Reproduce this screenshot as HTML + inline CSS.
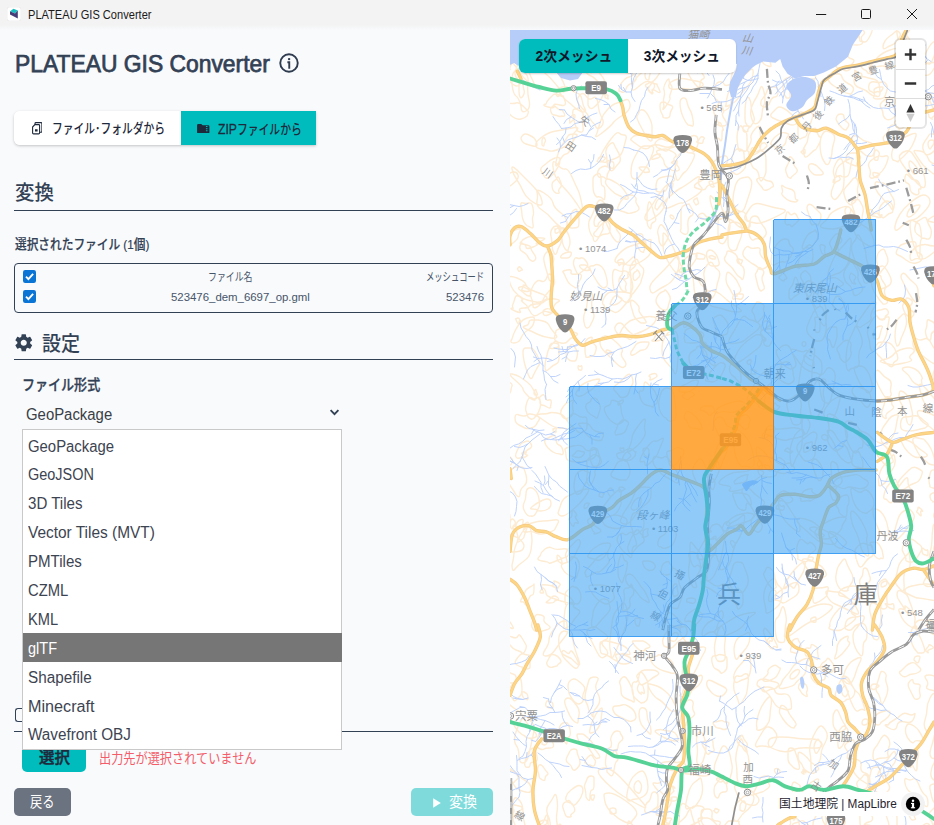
<!DOCTYPE html>
<html lang="ja">
<head>
<meta charset="utf-8">
<title>PLATEAU GIS Converter</title>
<style>
*{box-sizing:border-box;margin:0;padding:0}
html,body{width:934px;height:825px;overflow:hidden;background:#f8fafc}
body{position:relative;font-family:"Liberation Sans","Noto Sans CJK JP",sans-serif;color:#334155}
.abs{position:absolute}
#titlebar{left:0;top:0;width:934px;height:30px;background:linear-gradient(#f3f3f3 0,#f3f3f3 25px,#f8fafc 30px)}
#titlebar .tt{left:27px;top:7px;font-size:12px;line-height:16px;color:#1a1a1a;white-space:nowrap}
#left{left:0;top:30px;width:510px;height:795px;background:#f8fafc}
.tabs{left:14px;top:111px;width:302px;height:34px;border-radius:6px 0 0 6px;box-shadow:0 1px 3px rgba(0,0,0,.22);background:#fff;overflow:hidden}
.tab{top:0;height:34px;font-size:13.5px;line-height:34px;font-weight:500;color:#1e293b;white-space:nowrap}
.t1{left:0;width:167px;background:#fff}
.t2{left:167px;width:135px;background:#00bcbc}
.h2{font-size:20px;line-height:28px;font-weight:500;color:#334155;white-space:nowrap}
.f{display:inline-block;white-space:nowrap;transform-origin:0 50%}
.hr{left:14px;width:479px;height:1.2px;background:#334155}
.lbl{font-size:13.5px;font-weight:500;color:#334155;white-space:nowrap}
.tbl{left:14px;top:263px;width:479px;height:49.5px;border:1.2px solid #334155;border-radius:4px}
.cell{font-size:11.5px;line-height:16px;color:#475569;white-space:nowrap}
.cb{width:13px;height:13px;border-radius:2.5px;background:#0b76d6}
.sel{left:26px;top:404px;font-size:16px;line-height:22px;color:#3a3f47;white-space:nowrap}
.dd{left:22px;top:429px;width:319.8px;height:320.8px;background:#fff;border:1px solid #c9c9c9}
.opt{left:4.5px;height:29px;line-height:29px;font-size:16px;color:#3d4451;white-space:nowrap}
.btn{border-radius:5px;color:#fff;font-size:15px;text-align:center;white-space:nowrap}
#map{left:510px;top:30px;width:424px;height:795px;overflow:hidden;background:#fff}
</style>
</head>
<body>
<div id="titlebar" class="abs">
  <svg class="abs" style="left:7px;top:7px" width="14" height="14" viewBox="0 0 14 14"><rect x="0" y="0" width="14" height="14" rx="2.5" fill="#fff" stroke="#e4e4e4" stroke-width=".6"/><path d="M3 4.2 L6.5 1.8 L10.8 3.6 L8 6.6 Z" fill="#19bfc0"/><path d="M3 4.2 L8 6.6 L10.8 3.6 L10.8 11.6 L3 7.4 Z" fill="#463c78"/></svg>
  <span class="abs tt f" id="tt" style="left:27.5px;transform:scaleX(0.9228)">PLATEAU GIS Converter</span>
  <svg class="abs" style="left:796px;top:0" width="138" height="30" viewBox="0 0 138 30" fill="none" stroke="#1a1a1a" stroke-width="1"><path d="M20 14.5h10.2"/><rect x="65.5" y="9.5" width="9" height="9" rx="1"/><path d="M111 9l10 10M121 9l-10 10"/></svg>
</div>
<div id="left" class="abs"></div>
<span class="abs f" id="h1" style="left:15px;top:47px;font-size:24px;line-height:34px;font-weight:normal;-webkit-text-stroke:.75px #334155;color:#334155;transform:scaleX(0.9520)">PLATEAU GIS Converter</span>
<svg class="abs" style="left:277.95px;top:51.75px" width="22" height="22" viewBox="0 0 22 22"><circle cx="11" cy="11" r="8.75" fill="none" stroke="#2f3b4f" stroke-width="1.9"/><circle cx="11.1" cy="7.1" r="1.2" fill="#2f3b4f"/><path d="M9.4 10.3h1.85v6.5" stroke="#2f3b4f" stroke-width="1.9" fill="none"/></svg>

<div class="abs tabs">
  <div class="abs tab t1"><svg class="abs" style="left:17.5px;top:11px" width="10.5" height="12.5" viewBox="0 0 10.5 12.5" fill="none" stroke="#1e293b" stroke-width="1.1"><path d="M3 2.6V1.5Q3 .6 3.9.6H9Q9.9.6 9.9 1.5V9.3Q9.9 10.2 9 10.2H7.6"/><path d="M.6 5L2.9 2.6H6.7Q7.6 2.6 7.6 3.5V11Q7.6 11.9 6.7 11.9H1.5Q.6 11.9 .6 11Z"/><path d="M3 7.3h2.6v2.3H3z" fill="#1e293b" stroke="none"/></svg><span class="abs f" id="tab1" style="left:38px;top:.7px;transform:scaleX(0.7965)">ファイル･フォルダから</span></div>
  <div class="abs tab t2"><svg class="abs" style="left:16px;top:12.5px" width="12.5" height="9.5" viewBox="0 0 13 10"><path d="M0 1.2Q0 0 1.2 0H4.4L5.8 1.4H11.8Q13 1.4 13 2.6V8.8Q13 10 11.8 10H1.2Q0 10 0 8.8Z" fill="#1e293b"/><path d="M9.3 2.7h1.7M9.3 4.9h1.7M9.3 7.1h1.7" stroke="#00bcbc" stroke-width="1.1"/></svg><span class="abs f" id="tab2" style="left:36.5px;top:.7px;transform:scaleX(0.8008)"><span style="font-size:15.2px;-webkit-text-stroke:.3px #1e293b">ZIP</span>ファイルから</span></div>
</div>

<span class="abs f h2" id="hconv" style="left:14.5px;top:179px;transform:scaleX(0.9700)">変換</span>
<div class="abs hr" style="top:209.6px"></div>
<span class="abs f lbl" id="lsel" style="left:14.5px;top:235px;line-height:20px;-webkit-text-stroke:.2px #334155;transform:scaleX(0.8651)">選択されたファイル (1個)</span>
<div class="abs tbl"></div>
<svg class="abs" style="left:23px;top:269.7px" width="13" height="13" viewBox="0 0 13 13"><rect width="13" height="13" rx="2.2" fill="#0b75d6"/><path d="M3 6.7L5.4 9.1L10.1 3.9" fill="none" stroke="#fff" stroke-width="1.9"/></svg>
<svg class="abs" style="left:23px;top:289.7px" width="13" height="13" viewBox="0 0 13 13"><rect width="13" height="13" rx="2.2" fill="#0b75d6"/><path d="M3 6.7L5.4 9.1L10.1 3.9" fill="none" stroke="#fff" stroke-width="1.9"/></svg>
<span class="abs f cell" id="c1" style="left:208px;top:268.5px;transform:scaleX(0.7739)">ファイル名</span>
<span class="abs f cell" id="c2" style="left:171.3px;top:288.5px;transform:scaleX(0.9918)">523476_dem_6697_op.gml</span>
<span class="abs f cell" id="c3" style="left:426px;top:268.5px;transform:scaleX(0.7217)">メッシュコード</span>
<span class="abs f cell" id="c4" style="left:446.2px;top:288.5px;transform:scaleX(0.9902)">523476</span>

<svg class="abs" style="left:13.4px;top:331.8px" width="21.5" height="21.5" viewBox="0 0 24 24"><path fill="#334155" d="M19.14 12.94c.04-.3.06-.61.06-.94 0-.32-.02-.64-.07-.94l2.03-1.58a.49.49 0 0 0 .12-.61l-1.92-3.32a.488.488 0 0 0-.59-.22l-2.39.96c-.5-.38-1.03-.7-1.62-.94l-.36-2.54a.484.484 0 0 0-.48-.41h-3.84c-.24 0-.43.17-.47.41l-.36 2.54c-.59.24-1.13.57-1.62.94l-2.39-.96c-.22-.08-.47 0-.59.22L2.74 8.87c-.12.21-.08.47.12.61l2.03 1.58c-.05.3-.09.63-.09.94s.02.64.07.94l-2.03 1.58a.49.49 0 0 0-.12.61l1.92 3.32c.12.22.37.29.59.22l2.39-.96c.5.38 1.03.7 1.62.94l.36 2.54c.05.24.24.41.48.41h3.84c.24 0 .44-.17.47-.41l.36-2.54c.59-.24 1.13-.56 1.62-.94l2.39.96c.22.08.47 0 .59-.22l1.92-3.32c.12-.22.07-.47-.12-.61l-2.01-1.58zM12 15.4c-1.87 0-3.4-1.53-3.4-3.4s1.53-3.4 3.4-3.4 3.4 1.53 3.4 3.4-1.53 3.4-3.4 3.4z"/></svg>
<span class="abs f h2" id="hset" style="left:41.5px;top:330px;transform:scaleX(0.9500)">設定</span>
<div class="abs hr" style="top:358.8px"></div>
<span class="abs f lbl" id="lfmt" style="left:22px;top:374px;font-size:15px;line-height:22px;-webkit-text-stroke:.3px #334155;transform:scaleX(0.8687)">ファイル形式</span>
<span class="abs f sel" id="selv" style="left:26.4px;transform:scaleX(0.9317)">GeoPackage</span>
<svg class="abs" style="left:328.5px;top:407.5px" width="11" height="9" viewBox="0 0 11 9"><path d="M1.6 2.2L5.5 6.1L9.4 2.2" fill="none" stroke="#334155" stroke-width="1.9"/></svg>

<div class="abs" style="left:15px;top:707.5px;width:9px;height:14.5px;border:1.7px solid #334155;border-right:none;border-radius:3px 0 0 3px"></div>
<div class="abs hr" style="top:730.6px"></div>
<div class="abs btn" style="left:22.3px;top:742px;width:63.6px;height:29.7px;background:#00bcbc"></div>
<span class="abs f" id="bsel" style="left:38.5px;top:747px;font-size:15.5px;line-height:22px;font-weight:500;-webkit-text-stroke:.45px #1e293b;color:#1e293b;transform:scaleX(0.9963)">選択</span>
<span class="abs f" id="err" style="left:99.2px;top:748px;font-size:14px;line-height:20px;color:#f35c68;transform:scaleX(0.8693)">出力先が選択されていません</span>
<div class="abs btn" style="left:14px;top:788px;width:57px;height:28px;background:#6b7280"></div>
<span class="abs f" id="bback" style="left:30.4px;top:791px;font-size:14.5px;line-height:22px;color:#fff;transform:scaleX(0.8448)">戻る</span>
<div class="abs btn" style="left:411px;top:788px;width:82px;height:28px;background:#7fdbdb"></div>
<svg class="abs" style="left:433px;top:797.5px" width="8" height="10" viewBox="0 0 8 10"><path d="M.2 .3L7.8 5L.2 9.7Z" fill="#fff"/></svg>
<span class="abs f" id="bconv" style="left:449.4px;top:791px;font-size:15px;line-height:22px;color:#fff;transform:scaleX(0.9328)">変換</span>

<div class="abs dd">
  <span class="abs f opt" id="o0" style="top:1.50px;transform:scaleX(0.9307)">GeoPackage</span>
  <span class="abs f opt" id="o1" style="top:30.39px;transform:scaleX(0.9037)">GeoJSON</span>
  <span class="abs f opt" id="o2" style="top:59.28px;transform:scaleX(0.9430)">3D Tiles</span>
  <span class="abs f opt" id="o3" style="top:88.17px;transform:scaleX(0.9644)">Vector Tiles (MVT)</span>
  <span class="abs f opt" id="o4" style="top:117.06px;transform:scaleX(0.9425)">PMTiles</span>
  <span class="abs f opt" id="o5" style="top:145.95px;transform:scaleX(0.9251)">CZML</span>
  <span class="abs f opt" id="o6" style="top:174.84px;transform:scaleX(0.9147)">KML</span>
  <div class="abs" style="left:0;top:203.3px;width:318.5px;height:28.4px;background:#767676"></div>
  <span class="abs f opt" id="o7" style="top:203.73px;color:#fff;transform:scaleX(0.9062)">glTF</span>
  <span class="abs f opt" id="o8" style="top:232.62px;transform:scaleX(0.9548)">Shapefile</span>
  <span class="abs f opt" id="o9" style="top:261.51px;transform:scaleX(1.0107)">Minecraft</span>
  <span class="abs f opt" id="o10" style="top:290.40px;transform:scaleX(0.9537)">Wavefront OBJ</span>
</div>

<div id="map" class="abs">
<svg id="mapsvg" class="abs" style="left:0;top:0" width="424" height="795" viewBox="510 30 424 795">
<!--MAPSTART-->
<rect x="510" y="30" width="424" height="795" fill="#fff"/>
<path d="M494,33Q492,31 490,28t-1-5t2-6t1-4t4,0t2,6t-1,7t0,6t-3,1zM528,22Q528,17 525,16t-1-7t4-6t3,0t4,3t0,6t-2,10t-3,5t-2-5zM542,20Q541,18 540,16t-1-6t3-3t4,0t2,1t1,5t-1,6t-3,3t-3-2zM602,31Q600,32 598,27t-4-8t-2-9t1-5t5,4t5,7t4,7t-1,6t-4,2zM614,37Q612,35 612,31t2-10t4-5t6,2t4,2t2,8t-5,6t-6,3t-5,0zM618,30Q617,29 617,27t2-4t3-1t2,3t-1,4t-3,2t-2-1zM638,38Q635,40 634,33t0-12t2-8t4-3t4,2t5,9t-2,8t-4,5t-5,4zM702,39Q698,38 694,37t-7-5t-5-7t3-5t7,0t6,2t6,7t2,8t-4,2zM697,33Q695,33 693,32t-2-4t0-2t3-1t3,2t2,4t-2,2zM714,20Q711,19 712,14t6-7t8-4t4,0t1,5t-1,8t-6,5t-6-1t-4,0zM745,34Q745,32 743,31t-2-5t2-4t4,0t3,2t2,3t-1,6t-3,3t-3-2zM757,38Q755,37 756,32t4-11t7-7t3,3t3,6t1,7t-6,8t-7,2t-4-2zM793,28Q790,25 790,23t-2-6t0-5t4-3t4,2t3,5t-1,5t-2,5t-3,2zM830,32Q828,28 827,24t-2-8t0-6t2-5t3,1t2,8t0,7t0,9t-2,2zM860,41Q859,38 859,34t3-8t4-9t4-4t2,8t0,8t-2,7t-5,6t-5-1zM880,21Q876,22 877,18t2-6t3-4t4-3t4,3t2,5t-3,5t-4,2t-5,1zM903,42Q900,48 898,39t-1-14t-1-11t2-6t5,2t5,10t1,11t-2,5t-4,6zM922,26Q921,24 922,22t1-5t3-4t4,1t3,3t-1,4t-2,4t-4,3t-4-2zM503,67Q501,65 500,60t1-9t3-10t6-6t4,5t1,11t-2,11t-3,7t-7-2zM521,56Q519,57 519,53t4-7t5-4t4-1t1,2t-1,8t-4,6t-3-1t-4,0zM564,56Q558,58 552,57t-11-2t-10-3t-4-6t7-5t9,0t8,4t11,6t2,5zM550,58Q552,53 555,49t10-9t13-6t2,5t-2,9t-4,7t-13,7t-10,1t-1-5zM590,69Q590,64 591,58t1-12t3-9t5-2t3,4t-1,11t-3,11t-5,9t-4-1zM616,62Q614,62 611,59t-4-6t1-6t2-5t3-2t4,6t2,9t0,5t-3,2zM636,36Q636,34 639,32t5-3t7,0t3,3t-2,4t-5,4t-6,3t-4-2t-1-5zM667,59Q665,59 665,55t0-8t1-6t3-4t3,4t1,7t0,7t-3,4t-3,0zM708,49Q704,49 701,50t-8-2t-6-6t0-5t6-2t7,1t11,6t4,5t-7,2zM723,64Q720,60 720,51t-1-15t0-10t3-7t5,4t3,12t-1,10t-2,13t-4,6zM723,47Q722,45 722,42t0-7t1-3t3,3t0,6t-1,5t-2,1zM728,48Q729,44 736,40t10-8t10-7t8-1t-4,8t-8,10t-6,5t-11,3t-7-2zM756,42Q758,39 762,37t8-5t7-2t5,2t0,5t-7,4t-9,3t-8,2t-2-4zM788,47Q786,48 783,44t-2-9t0-9t3-1t5,2t5,4t0,8t-4,4t-2,4zM830,58Q828,52 828,46t-1-12t0-13t4-3t5,7t1,8t-1,12t-2,12t-4,1zM840,34Q838,31 844,30t11-2t8,2t0,5t-1,6t-5,4t-10-2t-5-4t-2-5zM848,35Q849,34 851,33t4,1t3,2t-1,2t-5,1t-4-1t0-3zM883,47Q883,44 885,41t5-5t5-4t4,0t1,4t-3,5t-5,4t-6,3t-3-1zM899,60Q897,58 899,54t2-9t3-7t4-1t2,4t0,7t-3,7t-4,5t-4,0zM924,60Q924,58 925,55t4-8t6-6t4-1t-1,6t-3,8t-3,7t-5,2t-3-3zM516,86Q511,84 507,78t-5-12t-4-12t2-6t7,1t7,8t2,12t2,11t-2,6zM529,83Q521,75 518,70t-8-10t-6-12t2-8t7,3t9,11t5,11t6,16t-4,2zM558,87Q550,77 546,74t-8-11t-6-15t2-8t9,4t6,11t9,18t7,17t-7-3zM571,71Q569,69 567,67t-1-4t2-5t3-3t5,0t1,5t0,5t-2,5t-4,1zM599,83Q594,77 591,76t-7-6t-6-10t3-4t7,2t5,6t8,11t4,10t-6-2zM634,72Q633,74 627,73t-11-8t-9-12t-1-5t8,0t12,3t11,9t0,7t-3,5zM633,85Q634,80 639,75t9-7t11-9t6,0t-2,9t-6,9t-8,5t-11,5t-5-2zM700,85Q700,90 695,84t-7-11t-4-9t-2-8t6,0t8,8t6,9t1,6t-3,6zM710,70Q708,68 710,63t4-6t6-7t6-4t2,7t-3,8t-4,8t-5,3t-6-2zM732,91Q730,85 731,79t3-12t5-9t5-4t5,4t-1,11t-5,8t-6,11t-5,3zM768,66Q765,65 764,64t-3-4t-1-4t1-5t3,1t4,5t2,4t1,5t-3,0zM812,85Q811,88 807,87t-7-5t-2-5t1-6t5-3t7,0t4,5t-2,6t-1,6zM852,64Q852,66 850,69t-6,1t-6-2t-2-4t-1-5t6-3t7,0t4,3t0,5zM868,73Q866,70 865,70t-3-2t1-4t3-1t3,1t2,2t0,4t-1,3t-2,0zM871,65Q874,61 878,57t12-7t9,0t6,3t4,4t-11,8t-12,2t-11,0t-4-2zM899,68Q899,66 902,63t6-3t7-1t5,1t-1,5t-5,5t-6,2t-6-1t-3-3zM921,68Q920,66 922,65t7-2t7,0t0,3t-3,4t-3,4t-7,1t-2-4t0-3zM497,113Q493,111 491,105t-4-10t-5-11t2-4t7,5t5,6t3,10t1,10t-3,2zM521,106Q519,98 516,96t-4-12t3-13t5-2t5,4t3,11t1,16t-3,11t-5-5zM520,97Q519,95 519,91t0-8t2-4t2,4t1,7t-1,6t-3,1zM546,104Q547,101 549,99t4-4t6,0t4,1t2,5t-5,4t-6,1t-6,1t-2-3zM582,112Q577,110 574,107t-7-6t-7-8t2-6t8,2t7,4t5,7t3,9t-3,3zM588,105Q588,100 588,97t2-8t5-5t7-2t3,4t-2,9t-4,7t-6,6t-5-3zM619,91Q619,89 620,86t4-6t5-3t4-2t3,2t-4,6t-6,6t-4,3t-3-1zM653,93Q652,95 651,93t-4-5t0-4t2-2t4,1t4,1t2,5t-3,2t-3,2zM664,106Q663,101 664,97t0-7t2-8t3-2t2,5t0,7t-1,6t-4,8t-2,0zM671,82Q674,80 678,79t8,0t10,2t7,3t-5,4t-10,1t-11,0t-8-2t2-5zM722,107Q721,103 717,100t-3-10t5-8t5,2t7,0t3,6t-3,13t-5,7t-4-3zM726,105Q726,100 728,94t6-13t7-6t8-4t4,3t-6,13t-8,10t-9,8t-4,0zM761,105Q760,101 763,98t4-7t3-4t5,0t3,5t-3,5t-5,5t-5,5t-4-2zM787,98Q785,97 784,93t-1-8t1-5t3-2t4-1t3,6t-2,6t-2,5t-3,4zM796,86Q795,84 799,82t6-2t5,0t4,0t-1,4t-4,4t-4,0t-5-1t-4-1zM850,94Q845,93 842,91t-8-5t-6-7t1-4t7-1t6,3t7,7t4,7t-3,3zM876,96Q872,96 869,93t-9-5t-6-7t4-5t7,1t8,2t6,5t1,9t-4,3zM870,91Q868,89 869,85t6-3t7,0t4,2t1,6t-2,6t-7,3t-4-3t-4-5zM874,90Q874,89 876,88t3-1t3,0t0,3t-3,2t-3,0t-2-2zM921,105Q916,99 914,96t-5-8t-3-10t2-4t6,3t4,7t4,11t3,11t-4-1zM935,108Q933,109 932,106t-2-5t0-5t2-3t3,1t4,3t0,4t-2,4t-2,3zM500,134Q499,129 496,128t-3-7t2-7t4-1t3,2t3,6t0,9t-2,7t-3-3zM527,116Q525,118 521,119t-8-2t-5-5t-4-6t3-3t9,0t7,3t5,5t-1,5zM562,116Q560,117 558,116t-4-1t-3-3t0-4t2-2t4,2t4,2t3,3t-2,3zM577,129Q576,127 575,124t-2-9t2-6t3-1t3,2t2,7t0,10t-3,5t-3-3zM595,125Q591,121 589,117t-8-10t-2-11t7,0t7,2t5,6t4,14t-1,9t-6-2zM597,133Q599,126 601,120t7-11t9-6t8-3t5,4t-7,11t-10,8t-11,10t-5,0zM652,140Q650,143 646,136t-7-13t-2-7t2-4t4-2t6,7t3,9t0,8t0,6zM663,116Q662,114 661,112t-1-6t3-4t3,1t4,2t2,4t-2,6t-4,3t-3-2zM688,125Q686,123 684,119t-3-8t-1-8t3-5t4,4t3,8t3,10t-1,6t-4-1zM719,124Q717,120 716,118t-2-5t2-6t3-5t3,4t1,7t2,7t-2,6t-4-2zM747,125Q745,123 745,119t0-8t1-10t3-3t2,7t2,9t1,7t-3,5t-4-1zM754,123Q752,121 751,116t1-10t4-8t4-9t4,3t0,13t-2,9t-3,8t-5,1zM796,124Q793,126 788,124t-8-3t-7-3t-1-5t5-5t6,0t7,5t6,5t0,6zM800,139Q798,139 798,133t0-14t3-7t4,0t5,0t2,7t-4,12t-3,6t-5,2zM846,130Q844,130 842,128t-4-5t-2-4t1-3t4-2t3,3t3,5t1,5t-2,3zM883,114Q883,111 881,108t1-6t6-4t6,0t1,5t0,8t-2,7t-7,1t-3-5zM895,124Q893,122 898,119t7-5t8-4t6,0t-2,6t-6,6t-7,5t-6,1t-3-4zM929,117Q929,114 927,112t0-5t2-6t4-2t2,3t1,6t-1,7t-3,4t-3-2zM537,145Q537,147 533,146t-7-2t-4-3t-1-3t2-3t6,0t5,3t2,3t1,4zM536,145Q535,142 542,137t14-6t16-3t4,3t-3,8t-9,8t-14,4t-9-2t-5-4zM556,162Q557,156 559,151t5-9t4-6t6-2t2,3t-5,10t-5,7t-7,8t-3,0zM601,161Q599,159 602,153t9-14t8-6t5,2t2,4t-3,11t-9,9t-8,3t-5-1zM634,136Q638,135 643,134t11,2t14,4t5,5t-11,1t-12,1t-11-1t-8-6t3-4zM655,144Q655,142 658,140t7,0t6,1t5,2t-2,4t-6,3t-5,0t-5-2t-3-4zM690,147Q690,145 689,144t0-4t3-4t4,0t2,4t0,4t-2,5t-3,2t-3-4zM717,139Q716,137 716,135t-1-6t1-4t3-2t3,3t1,4t-1,6t-2,4t-3-1zM740,151Q739,152 738,147t-1-10t2-9t3-1t3,4t2,7t0,10t-3,3t-4,0zM749,152Q746,151 749,146t2-8t4-9t5,1t1,7t0,7t-2,8t-6,3t-4-3zM771,143Q772,140 774,138t5-4t7-1t2,3t-2,5t-3,5t-5,2t-5-2t-2-3zM804,153Q802,150 805,146t3-8t4-8t5,1t3,6t-1,7t-4,6t-6,5t-5-2zM825,163Q822,159 821,154t-1-10t2-9t4-4t6,2t2,9t-2,10t-2,9t-5,2zM869,156Q867,157 864,154t-7-5t-5-7t2-6t6,2t8,4t6,4t0,7t-5,3zM889,144Q886,145 884,141t1-6t4-6t4-4t4,1t4,7t-1,6t-5,3t-6,2zM893,160Q891,158 892,152t6-10t7-5t7-3t4,2t-4,10t-9,11t-5,5t-5-2zM926,155Q924,153 923,149t2-8t4-6t4-1t5,3t1,6t-4,7t-5,4t-4,1zM929,148Q928,146 928,144t1-3t3-1t2,2t-1,3t-2,3t-2,0zM541,171Q540,168 543,166t5-4t7-4t5,2t-2,7t-3,5t-5,5t-6-1t-3-5zM601,177Q599,178 598,176t0-5t4-4t3-1t3,1t1,4t-2,6t-2,1t-4-1zM609,168Q607,165 607,161t-1-8t3-8t5-1t3,6t3,7t-1,6t-5,6t-5-1zM631,173Q631,168 632,164t5-11t7-7t7,0t2,6t-4,10t-7,11t-8,6t-3-6zM676,171Q672,171 668,168t-4-6t-5-7t0-5t7-1t7,3t2,5t2,8t-1,6zM676,177Q675,175 675,170t2-11t6-7t4,0t5,1t0,9t-7,10t-5,6t-4-1zM712,169Q710,169 712,165t5-6t6-3t4,1t1,3t-3,6t-6,5t-4,1t-3-3zM734,173Q730,172 731,167t1-8t2-7t6-3t4,5t1,8t0,6t-5,5t-6,0zM759,176Q758,170 755,169t-5-9t3-8t5-1t4,0t4,9t0,11t-3,8t-4-3zM788,177Q787,175 786,172t1-6t2-7t3-1t2,5t2,5t-1,6t-4,4t-3-1zM820,175Q818,175 816,175t-4-2t-3-4t0-4t4-1t4,2t4,4t2,4t-3,1zM838,176Q835,177 836,172t5-8t6-4t4-2t1,2t-2,10t-5,7t-4-1t-3,0zM849,163Q846,163 846,160t1-5t5-2t4,0t3,2t0,5t-2,5t-4,0t-4-2zM870,175Q871,171 869,167t4-8t7-3t5,0t3,3t-3,8t-7,8t-7,3t-1-3zM918,184Q914,180 911,176t-8-11t-3-10t6-4t6,2t6,9t6,13t1,11t-7-2zM914,174Q913,173 911,170t-2-6t1-3t3,2t4,5t0,5t-3,1zM937,174Q936,176 931,172t-7-6t-6-8t-4-7t6,0t8,7t9,6t3,6t-3,4zM502,186Q501,184 500,180t3-4t6-2t5-2t4,3t-2,6t-6,5t-4,2t-4-2zM539,205Q535,204 530,200t-7-9t-6-11t-5-11t7,3t12,12t7,8t4,9t-3,4zM556,193Q554,192 553,190t-1-5t2-4t3-3t2,0t2,5t-1,5t-1,4t-3,1zM577,204Q570,194 567,191t-8-9t-6-15t4-3t8,5t7,8t6,13t4,15t-5-1zM597,197Q595,196 594,193t-1-7t0-7t4-5t4,5t2,7t2,8t-2,5t-6-2zM625,199Q621,196 618,195t-7-5t-5-6t0-4t5,0t7,4t6,6t4,7t-3,2zM656,186Q656,184 657,181t6-4t7-1t4,2t-2,4t-5,6t-6,4t-5-2t0-4zM664,207Q661,204 669,197t12-9t12-8t6-1t2,8t-7,10t-12,6t-9,3t-9,1zM695,187Q693,185 699,182t9-5t9-4t5,0t-2,6t-7,5t-7,4t-7,1t-4-2zM735,206Q733,205 733,200t2-13t7-9t6-1t3,3t-1,12t-5,15t-6,4t-4-5zM772,187Q770,189 767,190t-4-1t-3-4t-3-4t2-3t5,1t5,2t4,3t-1,3zM796,202Q793,202 790,201t-6-4t-2-4t0-5t1-2t7,3t5,6t2,5t-1,2zM832,197Q830,194 833,187t1-12t2-12t6-3t2,9t0,11t-1,9t-5,8t-6,0zM846,200Q845,198 844,194t2-7t6-7t5-1t1,7t0,8t-3,8t-6,2t-3-4zM890,206Q887,203 884,200t-6-7t-3-8t3-3t5,1t5,6t5,9t1,9t-4-1zM919,193Q918,196 914,194t-4-6t-3-5t-2-6t4-1t6,4t5,5t0,4t-1,4zM496,222Q495,228 490,221t-8-14t-2-10t3-4t6,0t9,6t5,11t-4,6t-3,6zM530,227Q526,226 524,222t-2-7t-1-8t2-4t6,0t4,5t0,8t0,8t-3,3zM563,229Q556,224 552,219t-10-9t-5-9t0-9t7,1t9,10t8,10t6,13t-4,3zM570,227Q569,226 570,223t1-7t3-6t3,1t1,4t1,6t-1,6t-5,1t-3-1zM593,237Q590,234 589,228t1-9t5-11t5-8t5,4t0,14t-2,10t-4,9t-6,0zM595,226Q594,225 594,222t2-6t2-3t3,3t0,5t-3,4t-3,1zM618,207Q619,204 621,201t6-5t7,0t2,4t2,6t-3,6t-8,1t-6-2t-3-4zM648,226Q647,223 647,220t0-6t1-9t3-1t2,6t2,6t-1,6t-3,5t-3-1zM646,220Q643,218 648,211t8-12t7-10t8-6t0,8t-6,14t-5,8t-8,6t-6,1zM655,208Q655,206 656,203t4-5t3-1t0,3t-3,6t-3,4t-2-2zM681,229Q681,224 681,221t0-9t4-7t4-1t3,5t-1,7t-3,11t-4,7t-3-5zM720,219Q718,220 716,216t-4-9t-2-9t2-1t5,3t4,5t3,8t-1,5t-3,1zM750,225Q751,228 745,228t-9-4t-7-5t-4-5t4-2t10,0t7,4t3,5t1,4zM745,216Q746,214 750,208t11-4t11,3t10,2t1,4t-14,7t-14,3t-8-2t-2-5zM787,225Q785,224 785,222t1-7t3-2t4,1t4,2t2,4t-4,4t-4,2t-4-1zM812,225Q810,223 810,220t-2-8t0-7t5,1t4,4t3,3t0,8t-3,4t-5,0zM823,223Q828,219 829,216t9-7t11-2t1,6t-1,7t-5,6t-11,3t-10-1t0-5zM854,227Q852,223 854,219t-1-11t1-8t5,0t3,5t1,7t-1,8t-4,7t-4,0zM882,217Q879,217 879,213t1-6t3-4t4-2t4,2t2,6t-2,4t-5,3t-4,1zM895,226Q896,220 900,214t10-11t10-7t7,0t3,6t-7,11t-11,7t-11,7t-6-1zM907,215Q907,213 909,210t5-4t5-1t0,3t-5,6t-5,3t-2-2zM952,221Q951,223 946,223t-7,0t-7-1t-4-2t4-3t6-2t6,1t5,2t3,3zM495,246Q496,241 501,239t6-4t8-5t5,1t-2,6t-5,6t-6,2t-8,2t-4-1zM522,241Q522,240 526,238t7-1t9,1t-1,3t-4,3t-4,3t-7,0t-4-3t0-3zM554,253Q552,250 552,245t-1-9t1-7t4-3t3,3t2,8t-1,8t-3,7t-3,1zM568,251Q566,251 564,247t-2-8t-1-7t1-4t4,2t3,6t1,6t-1,5t-1,4zM596,231Q598,228 599,227t4-4t5-1t2,4t0,5t-4,3t-6,2t-5,0t1-5zM619,242Q617,243 614,239t-4-7t-3-7t-1-5t5,2t5,6t3,5t1,6t-1,3zM644,252Q641,253 639,249t-3-5t-2-6t0-4t5,0t4,3t2,5t0,6t-1,4zM661,245Q659,243 659,240t-1-6t1-7t4-1t3,4t2,4t-1,6t-3,5t-3,0zM719,242Q718,237 718,233t0-9t1-9t5-1t5,6t1,6t-2,9t-4,8t-5-1zM731,250Q728,248 728,242t0-10t1-7t5-3t6,2t2,7t-2,9t-3,8t-6,2zM755,239Q752,242 750,237t-1-11t2-8t4-2t4,3t5,8t1,9t-5,3t-5,0zM804,249Q801,249 803,244t4-8t5-4t3-2t2,3t-1,8t-4,6t-4,1t-4,1zM832,249Q831,247 830,245t1-5t4-5t3-1t3,4t-1,5t-2,6t-3,3t-3-3zM869,246Q865,244 860,240t-6-10t-6-12t-2-10t8,6t10,12t8,9t2,10t-5,1zM917,253Q914,247 913,243t-2-9t-1-10t4-3t5,3t2,8t0,8t-1,12t-3,1zM922,238Q920,236 917,234t-2-7t3-6t5-3t4,2t3,7t1,8t-4,4t-5-1zM532,261Q529,260 528,257t-5-5t-3-6t2-3t5,2t4,3t3,6t1,6t-3,1zM548,276Q547,272 546,269t-2-8t2-8t3-3t3,4t1,8t0,11t-1,8t-4-5zM580,273Q579,277 577,273t-3-7t0-6t3-2t4,0t5,3t1,6t-3,3t-4,3zM622,275Q623,271 623,268t2-4t6-5t4-1t1,5t-4,6t-4,7t-5,3t-1-4zM618,263Q612,262 618,255t13-9t14-5t6,0t0,8t-6,10t-12,6t-8-1t-7-1zM677,274Q673,270 670,265t-5-10t-2-10t0-10t5,3t7,14t5,11t2,12t-5-1zM681,268Q683,265 683,263t3-5t7-4t4,1t-1,4t-4,6t-5,5t-6,2t0-4zM712,266Q710,266 709,264t-2-6t0-6t3-2t4,2t3,4t2,6t-3,4t-4,0zM741,278Q737,276 735,272t-7-8t-3-7t2-5t5,0t6,7t4,7t2,9t-3,3zM759,268Q755,265 753,264t-7-5t-2-9t5-3t7,1t4,3t5,9t0,8t-6,0zM771,262Q771,259 772,254t5-10t8-5t4,3t3,5t-1,9t-7,6t-8,2t-5-2zM800,268Q797,270 798,264t3-10t4-6t4-3t3,3t1,9t-3,8t-5,1t-5,2zM831,276Q826,279 829,270t6-14t6-8t7-8t3,4t-2,15t-5,10t-5,4t-8,3zM863,278Q860,270 858,267t-5-12t0-12t4-7t5,5t4,14t4,14t-1,13t-6-4zM877,271Q878,266 877,263t0-7t4-6t4,1t2,5t1,5t-3,6t-5,6t-3-2zM922,259Q921,262 916,263t-10-3t-8-5t-1-5t4-5t9-3t6,4t3,7t3,6zM910,256Q910,254 913,250t8-5t7,0t8,1t2,3t-9,7t-9,3t-7,1t-3-4zM505,300Q501,296 498,293t-8-8t-5-10t4-2t6,3t7,5t5,8t1,10t-3,1zM536,302Q531,301 527,300t-9-5t-7-9t-2-8t8,0t9,7t13,8t6,7t-9,2zM529,296Q527,296 525,294t-5-4t0-3t4,0t4,2t3,4t-2,3zM533,306Q533,301 531,297t2-11t8-5t6-4t6,0t-2,12t-8,11t-6,7t-4-1zM576,288Q574,287 571,285t-5-7t-3-6t4-2t4,2t6,2t3,6t-2,6t-2,2zM603,288Q600,286 598,283t-6-10t-1-7t4-1t4,0t5,5t3,10t-1,7t-3,1zM625,302Q622,300 618,296t-5-12t0-12t4-2t7,1t7,7t1,12t-2,9t-5,3zM623,291Q621,290 620,287t-1-6t1-3t4,2t2,5t0,5t-3,1zM631,290Q631,283 631,279t-1-8t3-9t5-1t4,6t1,8t-2,7t-6,9t-4-1zM634,280Q633,279 633,276t2-4t2-2t2,2t0,5t-3,3t-2,0zM650,289Q649,285 655,279t9-9t9-10t6,0t-1,10t-4,8t-9,8t-10,6t-5-3zM700,301Q698,298 696,295t-2-7t-1-10t3-1t4,6t5,5t1,7t-3,6t-3,0zM706,297Q705,292 705,287t-1-11t3-11t6-1t5,6t1,8t-3,12t-5,9t-5-2zM737,296Q734,297 732,293t-4-7t-2-7t1-6t5,2t5,6t3,6t-1,6t-2,3zM761,291Q759,290 758,286t-2-8t0-5t2-4t4,0t1,6t0,8t1,6t-3,2zM789,298Q789,295 789,292t2-5t3-7t3-1t1,6t1,5t-2,5t-5,4t-3-1zM807,296Q805,292 805,288t-3-8t0-7t4-2t3,3t2,7t1,8t-2,7t-3,0zM820,283Q821,281 824,280t7-2t7,1t5,4t-5,4t-8,2t-8,2t-4-3t2-5zM853,291Q851,286 848,284t-4-7t2-9t4-6t5,4t3,10t3,9t-2,9t-6-3zM852,283Q851,281 850,279t0-4t1-2t3,2t1,4t0,4t-3,0zM883,304Q880,301 876,295t-5-14t0-11t5-3t6-1t7,8t-1,12t-2,11t-3,7zM881,289Q879,289 878,285t-2-7t2-3t3,2t3,6t0,5t-3,1zM917,302Q916,304 912,298t-6-10t-4-8t0-6t5,2t7,7t4,8t1,6t-2,5zM513,308Q512,306 513,304t2-6t5-1t2,3t3,4t-1,4t-4,3t-5,0t-2-3zM528,308Q530,304 536,304t9-3t10-2t3,3t-5,7t-5,3t-9,2t-8-1t-3-5zM587,328Q585,328 584,322t1-10t2-8t3-9t2,4t1,13t0,8t-3,6t-3,2zM604,305Q601,304 604,298t8-6t9,0t8,1t2,4t-8,10t-9,5t-6-2t-4-5zM611,302Q611,301 613,298t4-2t4,2t0,3t-4,3t-5,1t-1-3zM641,323Q638,321 636,319t-3-6t-2-7t0-5t5,2t3,6t4,8t2,6t-4,0zM660,308Q659,307 657,304t0-7t5-5t3-2t3,3t2,7t-2,7t-4,3t-4-2zM684,324Q683,320 684,317t3-4t5-4t6-3t2,3t-4,8t-4,5t-5,4t-3-2zM738,312Q731,312 726,310t-11-3t-6-5t-3-7t3-4t11,3t7,6t10,7t1,5zM755,319Q755,315 753,313t0-5t3-5t5,0t3,4t0,5t-2,6t-4,4t-3-3zM821,322Q817,316 815,310t-7-14t-3-12t5-3t6,4t6,11t4,13t0,13t-5,0zM817,308Q816,308 814,304t-1-7t1-4t3,1t3,7t0,5t-3,2zM838,310Q836,310 834,308t-1-5t2-5t3-2t3,2t3,4t0,4t-3,3t-3,1zM857,326Q856,324 859,320t5-7t5-7t6-4t-1,6t-3,9t-4,6t-6,4t-4-1zM885,318Q885,320 882,320t-4-2t-3-4t1-3t4-1t4-1t4,2t-1,4t-2,3zM909,317Q906,315 905,313t-2-5t1-5t2-4t4,0t1,6t1,6t0,6t-3,0zM495,345Q493,342 491,341t-2-6t2-5t3-3t2-1t3,7t0,8t-2,5t-2-1zM512,339Q513,335 515,331t5-8t7-5t6-1t1,5t-6,8t-7,8t-7,5t-2-4zM556,335Q559,339 551,338t-14-4t-11-5t-1-3t4-4t9-2t11,5t3,5t4,5zM574,337Q570,338 568,341t-7,2t-6-3t0-5t1-4t6-3t8,1t6,4t-2,4zM628,338Q626,337 623,337t-6-4t-2-6t2-3t3-1t5,4t6,6t1,5t-4,0zM620,333Q622,328 626,324t9-5t10-2t9,0t0,6t-11,8t-10,4t-10,2t-3-4zM654,339Q655,336 657,333t4-4t6-1t4-1t2,3t-5,5t-6,3t-6,3t-2-2zM684,338Q685,335 685,332t6-4t6,1t4,3t2,5t-4,5t-8,1t-6-1t-1-4zM719,336Q716,335 716,331t-2-8t1-6t5-2t5,4t3,5t0,6t-4,5t-5,1zM730,343Q727,342 731,336t8-14t7-5t5,3t7,3t-3,9t-10,8t-8,3t-7,0zM770,345Q769,347 766,346t-2-5t-2-6t0-5t3,0t5,3t3,6t-1,3t-2,3zM815,341Q813,339 809,335t-1-11t5-11t5-6t5,2t3,12t-1,14t-5,6t-5,0zM816,332Q814,331 815,327t0-7t2-3t3,3t0,7t-1,5t-3,0zM828,340Q827,339 826,337t1-6t5-4t4,0t1,5t0,5t-2,7t-4,0t-3-4zM870,346Q870,341 868,336t3-14t7-5t7,1t4,2t-2,12t-7,14t-8,5t-2-5zM874,338Q873,336 874,332t3-5t4-1t1,2t-2,7t-4,4t-2-1zM897,346Q895,342 895,337t1-11t2-7t4-4t4,2t0,9t-3,8t-3,8t-3,4zM929,340Q927,339 926,335t0-6t1-6t2-3t4,2t2,5t-2,5t-2,5t-2,3zM492,368Q490,368 490,363t1-9t3-7t3-2t4,3t1,6t-2,7t-4,4t-4,3zM533,376Q531,382 528,374t-4-13t-1-9t3-4t5,0t6,7t2,10t-3,5t-3,6zM545,367Q545,363 546,359t2-8t5-8t5,0t1,7t0,8t-3,6t-7,5t-4-2zM572,361Q570,361 568,359t-2-6t1-4t3-3t4,0t3,5t0,6t-2,4t-3,0zM586,356Q585,354 585,351t0-7t4-6t3,1t2,5t2,6t-2,5t-5,2t-3-1zM624,367Q622,369 616,363t-11-11t-5-9t1-5t4-2t11,6t6,10t2,8t0,7zM631,352Q634,348 635,346t3-3t5-1t5,0t0,4t-5,4t-5,2t-5,3t-2-3zM673,370Q670,366 666,362t-4-12t2-11t3-5t6-3t5,11t0,15t-1,12t-4,1zM698,369Q695,369 692,366t-3-8t4-7t4-4t5,1t5,8t1,8t-5,4t-5,1zM711,364Q709,361 707,360t-3-5t-2-7t1-5t4,2t3,6t3,7t2,7t-4-1zM734,361Q735,356 738,351t8-9t8-6t6-1t2,6t-5,8t-9,7t-9,6t-5-1zM791,369Q789,369 785,366t-7-9t-1-7t4-3t5-2t5,5t4,10t0,7t-4,2zM817,373Q814,373 809,371t-8-6t-8-11t3-4t9,1t8,3t8,7t1,9t-5,3zM811,366Q810,366 807,364t-3-4t0-4t3,1t5,3t2,4t-3,2zM840,358Q840,355 838,352t0-5t5-5t6-1t2,5t0,6t-2,7t-5,3t-4-4zM849,371Q846,370 846,362t1-14t4-12t4-9t5,6t1,14t-2,13t-4,8t-6,3zM893,366Q891,368 887,364t-9-9t-3-8t3-4t6-1t8,3t5,9t-1,7t-3,5zM886,359Q892,357 894,354t9-5t10,0t-1,5t-1,5t-7,4t-11,2t-9-2t2-4zM935,364Q932,363 928,360t-10-8t-5-10t4-3t7,0t7,4t8,11t1,8t-5,2zM498,379Q499,376 502,378t7,4t3,4t-1,4t-2,4t-6-1t-4-6t-2-4t1-4zM535,400Q533,401 528,396t-5-7t-8-9t-3-6t8,3t7,5t6,7t3,6t-1,5zM576,393Q577,391 579,388t6-5t8-3t6-1t-2,5t-6,6t-6,4t-7,2t-2-3zM620,397Q618,394 615,391t1-6t5-4t5-5t6,1t0,8t-3,7t-4,5t-5,0zM679,389Q681,386 684,385t6-3t6-2t2,3t-2,4t-4,3t-7,2t-5,0t-1-3zM707,381Q704,382 707,377t6-8t5-5t5-1t2,4t-3,7t-5,6t-4,2t-6-1zM737,380Q735,377 733,376t-3-4t0-6t3-1t3,0t3,4t2,7t0,5t-4-1zM749,394Q753,388 755,383t8-10t11-8t7-1t-1,8t-8,10t-12,11t-11,8t0-7zM791,383Q789,385 785,383t-7-5t0-5t3-6t4-5t6,3t2,7t1,6t-3,5zM800,391Q798,388 799,381t2-13t4-12t7-8t2,9t-2,16t-1,14t-5,9t-6-5zM826,403Q822,402 821,395t-2-13t2-7t5-5t6-1t3,10t-2,11t-2,9t-5,4zM866,391Q863,388 861,385t-5-10t-1-8t5-1t5,2t4,6t3,10t-2,8t-4-1zM889,398Q886,399 883,394t-5-9t-3-8t1-6t5,2t7,6t3,7t0,7t-2,5zM922,384Q923,387 918,385t-7-6t-6-7t-2-4t5-1t7,2t6,6t1,4t0,5zM934,380Q933,379 933,376t1-5t2-5t4-2t2,4t0,6t-1,5t-3,2t-4-1zM528,417Q527,414 526,411t1-9t5-4t5,0t3,2t0,8t-4,8t-5,3t-3-2zM551,407Q550,409 547,407t-5-2t-2-3t-1-3t2-3t4,1t4,3t2,4t0,3zM564,418Q562,417 561,414t2-7t4-4t4-2t2,1t0,8t-3,7t-4,2t-2-1zM595,417Q593,416 590,414t-4-6t2-5t3-3t3-2t5,5t1,7t-2,6t-3,1zM616,424Q613,423 610,420t-5-8t2-6t4-4t5-1t5,7t2,9t-2,6t-5,1zM653,407Q650,406 646,405t-6-8t1-6t3-5t3-3t6,6t4,9t-1,6t-3,3zM666,418Q664,418 661,413t-2-12t3-10t5-3t5,2t3,11t1,14t-4,6t-6-3zM711,415Q709,416 708,414t-5-3t-2-3t3-2t4,0t4,0t2,3t-1,4t-2,2zM716,410Q719,407 724,405t9-3t6-1t7,3t0,4t-9,3t-9,1t-10,1t-2-3zM759,406Q758,404 756,403t-3-5t3-5t4-2t3,2t2,6t1,7t-3,3t-4-3zM792,422Q790,417 789,414t-2-8t3-7t6-4t4,4t1,9t0,10t-4,7t-5-3zM811,415Q810,410 809,405t2-11t4-10t7-5t3,6t-1,13t-2,12t-6,8t-5-3zM826,420Q825,419 824,415t3-9t4-5t5-3t4,1t-2,8t-4,10t-4,4t-4-1zM869,406Q867,409 864,405t-6-6t-5-5t0-6t6-1t7,3t4,4t1,6t-2,6zM883,417Q881,414 882,411t2-6t1-6t4-2t3,4t1,5t-3,5t-4,6t-3,0zM910,425Q907,425 906,417t-4-12t-3-9t2-5t5,3t4,8t2,9t0,9t-2,5zM931,411Q928,410 926,406t-3-6t-3-10t2-5t6,6t5,6t3,6t-1,7t-4,1zM498,432Q496,430 495,426t-3-9t0-9t4-1t4,4t4,6t1,9t-3,6t-4,0zM519,415Q525,417 527,415t8,0t4,5t-3,5t-5,3t-6,0t-6-3t-4-7t4-3zM569,429Q563,428 559,428t-10-4t-10-7t2-3t8-1t8,0t9,6t6,8t-3,2zM587,427Q587,430 583,432t-6-1t-5-5t-4-4t2-6t7-1t7,2t3,4t0,6zM602,440Q599,441 595,440t-7-4t-5-6t-4-5t4-2t8,4t8,5t4,5t-1,3zM615,432Q617,429 617,427t3-5t5-2t3,2t0,3t-2,5t-5,4t-5,1t-1-3zM629,448Q632,441 632,438t4-9t7-9t2,3t0,8t-1,6t-6,8t-8,6t-1-3zM699,429Q695,428 692,428t-4-4t-3-5t0-5t5-2t5,4t4,5t3,6t-3,2zM721,436Q719,437 718,434t-3-7t0-7t5-3t5,5t5,5t3,6t-5,3t-7,0zM747,429Q745,430 743,428t-4-4t0-4t2-3t3-2t5,2t1,4t-1,4t-2,4zM763,438Q761,437 763,434t3-5t3-3t4,0t2,2t-1,5t-3,3t-4,1t-4,1zM767,430Q774,429 778,429t12-1t12,2t2,5t-8,3t-9,2t-11-2t-10-4t1-4zM803,433Q802,431 802,429t0-5t1-6t3-1t3,4t1,4t-1,4t-2,4t-4,0zM838,450Q836,453 831,447t-3-12t0-14t2-7t6,3t8,10t2,13t-3,6t-5,4zM857,452Q855,455 851,449t-5-13t-1-11t3-4t6,2t6,7t3,12t-2,6t-4,4zM883,443Q881,442 881,436t3-10t5-7t6-4t3,2t-2,10t-5,12t-4,5t-4-1zM925,428Q920,429 917,430t-9,1t-7-3t0-7t4-4t8-1t8,2t6,5t-2,5zM947,444Q942,443 938,436t-11-11t-9-10t4-4t9,3t9,6t8,10t3,11t-4,3zM512,462Q512,466 507,465t-7-1t-5-2t-2-4t1-6t5-2t6,3t5,4t2,5zM516,457Q515,455 517,451t3-6t4-3t4-1t3,3t-2,5t-5,5t-4,4t-4-1zM560,454Q556,454 553,452t-5-4t-3-5t1-4t6-3t4,3t3,6t4,6t-3,3zM596,454Q596,458 589,460t-11,2t-8-1t-4-5t-1-6t8-4t11,2t8,2t4,4zM584,454Q583,456 581,457t-6,0t-2-2t3-3t4-1t4,1t0,2zM593,466Q592,465 591,462t-1-7t1-6t4-1t3,3t2,6t1,6t-4,3t-4,0zM635,456Q634,457 632,459t-6,1t-6-1t-3-3t2-3t7-3t7,0t3,2t-1,4zM641,462Q639,462 641,457t7-11t7-5t6-2t1,4t-4,10t-7,9t-6,2t-4-2zM673,466Q670,467 669,463t-2-8t2-4t5-2t6-1t4,4t-3,6t-3,4t-5,4zM716,465Q716,460 715,458t1-8t5-8t4,0t2,5t-1,7t-4,10t-4,5t-2-4zM744,466Q741,468 738,462t-4-14t0-14t4-4t7,6t6,10t3,14t-4,7t-6-1zM770,471Q766,469 764,466t-5-7t-3-8t1-4t5,3t5,5t4,7t1,7t-2,2zM791,464Q790,459 790,453t2-11t3-7t5-5t3,3t-1,11t-3,9t-5,10t-3,1zM800,455Q798,453 797,449t5-9t9-7t5,0t0,7t-1,11t-4,9t-8-1t-3-4zM804,450Q803,449 804,446t3-3t4-1t1,3t-2,5t-4,2t-2-2zM848,463Q845,462 841,458t-5-9t-6-12t-1-7t7,6t7,8t6,9t3,8t-4,2zM856,467Q855,467 853,465t-1-6t1-6t3-2t4,3t2,5t1,6t-2,3t-5-1zM888,465Q886,467 881,460t-11-12t-11-12t2-5t10,6t9,6t10,10t3,9t-5,3zM920,457Q918,458 915,457t-7-5t-6-9t1-4t6,2t6,4t9,7t1,5t-5,0zM929,464Q926,461 923,459t-7-10t-3-10t5-1t5,1t5,5t6,13t0,8t-5-1zM500,491Q502,497 495,493t-7-9t-4-9t-1-7t5-2t9,5t7,9t-1,4t-3,7zM516,495Q514,491 511,487t-2-10t3-8t5-2t5,0t4,8t-2,11t-4,8t-4,1zM576,493Q574,491 574,487t1-9t5-7t4-1t4,2t0,7t-5,10t-4,5t-3-1zM588,484Q586,482 587,476t0-11t2-7t4-3t5,1t0,9t-3,8t-2,8t-5,3zM621,480Q619,480 614,478t-2-6t4-7t4-4t5-1t4,6t0,10t-3,4t-5,0zM673,481Q670,479 666,477t-9-8t-4-10t5-2t6,0t6,4t7,11t2,9t-6,0zM701,485Q698,485 696,481t-3-7t0-6t4-7t5-1t4,8t2,8t-1,7t-6,2zM708,479Q707,476 708,473t1-8t3-5t5,1t2,5t0,5t-3,7t-5,4t-3-3zM723,485Q715,484 723,478t16-6t11-2t10,0t1,6t-12,9t-14,6t-5-2t-7-4zM734,482Q735,480 738,478t7-3t3,0t-1,4t-6,4t-6,1t-1-2zM776,475Q774,477 770,477t-6,0t-4-2t-2-4t1-4t6-2t5,3t4,3t2,4zM794,470Q793,472 790,472t-4,1t-6,0t0-3t4-3t2-3t5,0t3,3t0,3zM821,480Q819,482 817,478t-3-8t-2-6t1-4t4,0t4,5t2,7t0,4t-2,4zM833,500Q830,496 830,489t1-10t0-11t3-6t4,6t3,9t-2,8t-3,10t-3,5zM834,482Q836,478 842,477t11-2t7,1t6,4t1,6t-11,2t-10,0t-9-2t-3-4zM879,484Q878,481 879,476t3-8t6-7t5-6t2,4t-3,11t-5,9t-5,6t-3-1zM898,483Q899,480 902,477t7-7t8-2t5,3t-1,6t-6,6t-9,5t-8,1t0-6zM930,486Q929,483 929,481t1-7t4-4t3,2t3,5t2,5t-3,4t-6,2t-3-2zM495,522Q492,523 490,516t1-12t3-12t4-6t5,5t3,11t-1,11t-4,7t-6,2zM497,512Q495,510 496,507t0-7t2-3t2,4t1,6t-2,5t-2,0zM531,516Q528,517 525,512t-1-9t2-9t3-6t6,2t4,9t0,8t-3,6t-5,3zM532,509Q529,509 533,506t8-5t6-2t3,1t1,4t-3,5t-7,2t-4-1t-5-1zM558,513Q559,510 561,504t7-8t9-4t9-3t1,5t-8,10t-9,8t-8,4t-4-3zM600,516Q600,511 603,507t6-8t8-8t4,3t0,8t-2,7t-8,7t-8,4t-3-4zM621,519Q623,513 627,508t7-13t10-8t7,1t0,7t-6,10t-11,12t-10,7t-3-5zM631,508Q631,507 633,503t5-5t3,0t0,4t-3,6t-5,2t-2-2zM746,508Q746,511 742,510t-6-6t-3-8t1-3t5,0t7,1t5,7t-2,3t-3,4zM764,520Q760,522 756,515t-6-10t-6-9t0-8t7,2t9,8t4,6t2,10t-2,6zM792,498Q794,500 791,502t-6,0t-5-1t-3-2t0-4t4-3t6,0t2,2t3,4zM801,499Q799,498 801,495t3-4t5-2t3,1t3,4t-1,5t-4,2t-5,0t-4-2zM839,512Q839,509 837,507t0-5t4-5t5-2t3,5t-1,5t-1,7t-4,4t-4-4zM867,513Q864,514 860,511t-6-8t-3-11t4-2t8,1t7,2t4,10t-3,7t-4,3zM886,499Q883,500 884,495t3-8t5-6t4-1t2,4t-1,8t-4,9t-4,1t-3-3zM901,502Q898,503 896,499t1-9t3-5t4-5t4,1t3,8t-1,8t-4,4t-5,1zM931,500Q930,498 930,496t3-3t3-1t4,0t1,2t-2,4t-3,3t-3,1t-2-2zM503,524Q502,523 500,522t-1-6t3-4t3,0t3,0t2,5t-1,6t-3,3t-3-2zM518,539Q518,536 517,533t-1-7t4-6t3,2t3,1t1,5t-3,9t-4,4t-2-2zM524,528Q526,525 532,523t11-2t11-1t4,3t-3,6t-8,4t-11,0t-9-1t-3-4zM571,524Q570,522 569,520t1-2t2-5t3-1t1,4t1,4t0,3t-3,2t-3-1zM595,533Q592,531 592,529t-3-5t0-5t2-3t4,1t1,5t2,6t0,5t-3,0zM626,526Q624,527 621,528t-9,0t-8-4t-2-4t5-3t8-2t8,2t4,5t-1,4zM633,532Q632,528 631,526t0-7t3-6t5,1t4,4t1,6t-2,6t-5,4t-4-2zM711,539Q707,540 708,536t2-7t3-4t4-1t4,3t3,4t-4,6t-4,1t-5,1zM726,524Q728,521 732,518t9-4t7-1t5,1t0,4t-7,4t-9,3t-8,1t-3-2zM757,532Q755,531 753,529t-2-5t1-5t2-4t4-1t3,5t1,6t-1,5t-4,2zM795,530Q792,528 788,524t-6-8t-3-8t0-8t5,1t7,10t6,9t3,9t-5,1zM833,544Q829,545 823,543t-11-7t-10-9t-5-7t8-1t12,6t13,8t7,8t-4,3zM823,537Q821,537 818,535t-6-4t-2-3t4-1t6,4t4,4t-1,2zM815,534Q814,531 819,527t12-7t12-3t2,4t-3,6t-5,7t-12,5t-8-2t-2-3zM866,555Q862,553 860,544t-5-14t-4-12t1-7t6,5t7,12t2,9t1,12t-2,6zM884,536Q881,534 879,530t-4-9t-2-9t3-3t5,3t4,6t3,10t0,7t-4,1zM896,539Q894,535 895,530t3-11t6-8t5-2t4,4t-1,9t-6,8t-6,7t-4,2zM935,522Q935,519 934,517t1-5t3-4t4,1t2,3t0,4t-3,6t-3,3t-3-3zM491,543Q495,540 500,537t10-2t8,3t5,5t0,6t-10,3t-10-2t-10-3t-2-4zM512,565Q514,557 514,553t4-13t8-12t5,3t1,9t-1,10t-7,11t-9,8t-3-4zM540,556Q541,552 545,549t7-1t10,1t7,3t-3,5t-10,4t-7,2t-7-2t-2-5zM566,557Q565,556 566,553t4-6t6-6t4,0t-1,6t-3,6t-5,7t-4,2t-1-5zM589,554Q590,551 593,549t6-4t8-2t3,4t-3,6t-4,5t-6,2t-7-2t-1-4zM629,556Q626,554 623,551t-5-8t1-8t5-1t5-1t6,5t0,8t-3,7t-3,3zM628,546Q629,544 630,541t4-8t5-2t3,4t2,4t-3,5t-7,7t-5,1t-1-6zM661,547Q657,547 658,542t4-6t5-5t5-2t4,4t-1,7t-4,6t-5,2t-5-1zM696,566Q694,568 692,564t-2-9t0-10t3-1t4,5t4,5t2,10t-3,3t-4-1zM698,559Q696,556 698,552t5-9t4-4t6,0t4,3t-1,8t-6,6t-6,3t-6,0zM704,552Q704,550 705,548t2-3t3-1t1,3t-2,4t-3,2t-2-1zM720,563Q722,554 723,548t3-15t7-11t9-6t2,7t-6,17t-6,16t-8,13t-4-6zM798,558Q798,555 797,552t1-9t6-2t5,2t5,2t-1,7t-5,7t-6,2t-4-3zM843,548Q842,549 839,548t-6-5t-4-7t0-4t4,0t6,3t6,5t0,5t-2,3zM856,559Q856,556 855,553t3-7t8-2t5,1t2,5t-2,7t-7,7t-6,0t-2-5zM881,558Q880,560 877,558t-3-4t-2-6t-2-5t4-1t6,4t2,4t1,5t-2,3zM906,559Q905,555 903,552t1-8t6-5t5,2t5,4t1,6t-5,8t-7,3t-3-3zM940,573Q936,572 932,566t-2-13t2-13t1-13t6,3t5,16t2,14t-1,11t-5,2zM938,559Q937,557 935,554t-1-7t2-3t3,3t3,6t-1,6t-3,0zM493,573Q492,572 494,569t3-6t4-5t5-2t-1,5t-2,7t-3,6t-5,2t-2-3zM573,577Q570,576 567,574t-5-6t3-5t5-4t4-2t5,6t0,7t-2,6t-4,1zM586,575Q583,573 588,568t7-8t8-6t5,0t1,5t-4,8t-7,5t-7,3t-5,0zM620,580Q618,577 618,573t0-7t2-9t3-1t3,5t1,6t-2,8t-2,6t-3-1zM651,570Q650,571 648,570t-3-2t-2-4t1-3t4,0t4,1t3,3t-1,4t-3,1zM663,574Q661,575 661,572t1-6t4-4t3,0t2,3t1,5t-2,4t-4,1t-3-1zM693,587Q690,583 689,577t0-11t0-10t4-4t5,3t2,8t-2,11t-2,10t-3,3zM707,578Q706,575 708,571t2-8t3-7t4,1t2,5t-1,5t-3,7t-5,6t-3-2zM736,592Q734,592 731,587t-1-11t3-10t5-4t5,2t4,10t-1,14t-4,5t-6-1zM773,589Q771,588 769,585t-4-7t-1-5t2-4t4-1t4,5t1,7t1,6t-3,3zM786,588Q782,590 785,584t6-10t6-7t6-5t2,4t-4,10t-5,9t-4,2t-6,1zM819,581Q816,582 813,578t-4-6t-5-8t2-5t8,3t5,3t6,6t-1,6t-5,4zM844,591Q841,591 838,586t-2-11t2-8t4-6t4,0t5,11t0,12t-3,6t-4,1zM863,588Q861,588 860,584t1-6t2-6t2-4t3,3t2,6t-1,5t-3,4t-3,2zM896,584Q895,581 896,577t2-9t6-10t5-6t1,8t-3,10t-3,13t-4,6t-4-5zM926,578Q929,572 928,569t4-10t9-5t7,2t0,6t-6,10t-7,10t-9,4t0-8zM482,608Q480,606 484,600t8-10t8-10t5-4t0,8t-4,10t-6,7t-7,6t-6,1zM521,602Q520,601 522,598t3-6t5-5t4-3t0,5t-2,6t-4,6t-3,3t-4-2zM572,604Q564,602 561,601t-9-3t-6-5t-4-6t5-2t9,4t7,5t10,7t-1,3zM574,587Q577,587 579,590t2,7t-2,6t-5,0t-6,1t-3-4t1-8t4-4t4-1zM609,603Q607,605 603,603t-7-5t-6-8t2-5t8,0t7,1t6,6t1,7t-5,4zM623,609Q623,604 624,601t0-8t3-5t4-3t2,3t-1,8t-2,7t-4,7t-3-1zM646,601Q641,599 638,594t-7-7t-5-6t1-6t5,0t6,7t5,7t5,9t-2,3zM673,608Q670,607 670,600t1-11t0-14t4-6t4,9t2,10t0,12t-3,8t-5,0zM674,596Q673,595 673,592t0-5t2-3t2,2t1,6t-2,4t-2,0zM731,598Q727,598 723,597t-7-4t-10-6t-4-6t9,2t10,2t8,3t5,6t-3,4zM737,606Q735,603 734,601t-1-4t2-6t4-2t3,3t1,5t0,6t-3,5t-3-2zM766,610Q765,605 764,600t1-11t6-9t5,1t4,6t2,9t-4,10t-8,6t-4-2zM769,601Q768,600 769,596t2-5t3-1t2,3t-1,5t-3,3t-3,0zM774,600Q769,600 775,595t9-7t7-4t6-1t2,6t-5,8t-8,5t-5,0t-7-2zM812,595Q811,594 812,591t6-3t8-1t2,3t-1,5t-4,4t-7,4t-3-3t-1-5zM854,613Q848,610 844,608t-9-4t-8-8t2-5t8,1t7,3t8,7t6,9t-4,2zM839,592Q840,590 844,588t9-2t5,2t4,4t2,4t-8,3t-9-1t-6-2t-2-4zM881,605Q880,601 879,598t-1-9t3-8t4-2t4,5t0,7t-2,10t-3,8t-3-4zM910,614Q907,614 905,610t-5-8t-3-7t1-4t5,1t5,5t3,8t1,6t-2,3zM905,591Q904,588 912,586t14-2t11,2t2,3t0,7t-8,4t-13-2t-8-3t-5-4zM507,631Q507,632 504,634t-5-2t-1-6t1-4t3-2t5,0t5,5t-1,3t-4,3zM535,631Q533,630 532,627t1-7t3-5t5,0t3,4t4,6t-2,5t-6,2t-5-1zM564,627Q564,623 564,620t1-10t6-7t3,2t3,4t1,6t-6,8t-6,5t-2-1zM592,619Q593,616 593,613t4-9t8-5t4,3t1,5t-3,7t-9,10t-6,3t0-8zM611,654Q609,647 610,639t2-16t4-12t6-7t5,5t-1,16t-4,11t-6,15t-5,3zM679,626Q677,626 674,626t-6-3t-3-5t1-3t3-2t5,2t6,6t2,4t-3,1zM688,621Q684,623 685,619t4-6t6-4t3,0t3,4t0,6t-5,5t-3-1t-5-2zM702,633Q702,630 705,626t6-5t7-7t5-1t-2,7t-4,7t-5,5t-7,3t-3-2zM716,630Q719,627 724,624t10-6t15-5t4,2t-8,8t-7,7t-11,5t-10,0t-1-5zM779,642Q777,641 776,636t-1-11t2-7t4-8t4,1t1,12t-1,11t-1,8t-5,0zM791,624Q794,620 797,616t12-8t15-4t8,2t-6,8t-13,7t-18,11t-10,1t6-9zM830,626Q829,623 832,618t7-9t11-5t3,4t1,7t-3,8t-10,7t-8,0t-3-4zM845,628Q845,625 846,622t4-4t5-1t6-1t3,3t-5,5t-6,4t-5,2t-3-2zM874,639Q871,636 872,629t-1-13t-1-10t4-3t5,3t2,9t-1,10t-1,10t-5,4zM914,628Q912,628 908,625t-6-7t-3-7t3-2t3-2t5,3t5,10t1,6t-2,2zM952,636Q953,640 944,638t-13-5t-11-4t-5-5t6-4t11,1t11,4t6,5t3,6zM499,667Q495,668 492,659t-3-16t-2-13t1-15t5,6t7,18t4,14t0,10t-5,4zM521,652Q519,651 516,650t-6-5t-3-7t5-1t6-1t4,2t4,7t-1,6t-4,1zM545,650Q549,644 549,640t5-11t9-8t4,3t1,6t-4,8t-9,12t-9,6t-1-6zM570,658Q568,657 564,655t-5-10t1-11t4-3t5,2t4,8t5,17t-2,5t-6-5zM604,657Q601,660 597,652t-5-10t-4-7t2-7t6-1t8,6t1,7t0,8t-1,9zM601,643Q602,640 607,641t12,3t10,7t-3,3t-6,4t-7,1t-10-5t-3-7t1-4zM645,650Q644,651 642,651t-5-3t-4-5t0-2t5,0t5,0t5,3t0,4t-3,2zM664,646Q662,643 663,639t5-9t7-3t7,0t5,3t-4,8t-8,7t-6,3t-5-2zM670,640Q669,638 671,636t3-3t3,0t1,3t-2,4t-4,1t-2-1zM694,653Q692,657 689,649t-6-11t-3-6t1-6t4-1t7,7t2,7t0,6t0,8zM718,661Q716,660 715,654t0-11t2-9t3-7t4,3t1,12t0,12t-2,7t-5,0zM735,657Q734,653 734,649t2-8t5-5t6-3t3,3t-2,9t-5,7t-5,6t-3-1zM773,649Q771,649 769,646t-3-6t-2-6t0-5t4,2t4,5t4,7t0,4t-3,2zM791,652Q790,650 791,648t1-5t3-4t3,0t2,4t0,4t-2,4t-3,2t-4-1zM813,657Q811,655 808,656t-3-4t3-4t3-2t4,0t3,3t0,6t-2,4t-3-2zM836,654Q837,651 837,648t2-6t6-5t3,1t1,4t-2,6t-5,6t-5,4t-1-4zM860,655Q857,652 855,647t-2-10t2-7t4-5t5-1t3,9t-2,8t-2,9t-3,5zM918,653Q916,651 914,648t-3-8t0-8t2-5t4,4t4,8t3,8t-2,6t-4,0zM511,683Q509,683 507,681t-3-5t-2-7t2-3t4,4t5,4t3,5t-1,4t-4,0zM522,667Q520,667 517,665t-1-5t4-5t4-1t4,1t2,5t0,7t-4,2t-4-2zM557,666Q556,666 553,667t-5-1t-1-4t2-4t2-3t4,0t5,4t0,4t-3,3zM575,668Q573,667 571,665t-6-6t-3-7t4,0t4,0t4,2t4,8t0,5t-3,1zM616,657Q615,654 618,654t6,1t5,2t2,3t-2,3t-5,1t-5-1t-2-3t-1-3zM656,676Q652,678 650,680t-6,4t-5-2t-2-5t2-4t6-3t7,0t6,2t-2,4zM671,673Q668,672 664,671t-8-4t-5-6t3-4t4-2t7,2t8,7t2,7t-4,2zM682,678Q682,672 683,667t5-11t6-7t8-2t2,6t-5,10t-6,12t-7,7t-4-4zM721,673Q719,670 716,669t-4-7t2-6t4-1t5,0t4,4t0,7t-3,6t-3,1zM734,679Q733,676 735,672t5-7t6-7t4,1t1,7t-1,7t-5,6t-7,3t-4-3zM765,677Q769,674 768,672t3-5t6-1t3,2t-1,4t-3,5t-5,3t-7,1t1-4zM781,684Q782,680 786,676t6-8t10-8t6,1t-2,9t-5,8t-6,6t-10,4t-4-4zM790,677Q790,675 792,673t4-3t3,0t0,3t-3,4t-4,2t-2-2zM816,683Q814,682 812,679t0-6t3-4t5-2t4,0t1,7t-2,6t-4,3t-3,0zM830,672Q828,673 825,672t-4-3t0-4t3-3t3-3t4,2t3,5t-1,4t-3,2zM844,681Q843,678 844,674t3-7t4-5t7-4t2,4t-4,10t-3,8t-4,4t-5-3zM901,671Q904,668 906,666t5-3t5,1t4,4t-1,4t-6,2t-6,2t-6-1t0-4zM495,709Q493,709 491,705t-2-9t2-5t3-1t4-1t3,5t-1,9t-2,5t-3,1zM513,699Q512,698 510,695t0-7t4-5t4-4t3,1t1,9t-2,7t-4,4t-3-1zM579,704Q576,704 573,700t-4-7t-1-7t3-6t6,0t6,5t1,7t-1,7t-4,5zM589,711Q588,705 586,702t0-11t3-11t6-3t2,5t1,12t-1,13t-4,9t-4-5zM632,701Q629,700 625,698t-4-7t-1-7t1-5t4-2t5,7t3,8t1,7t-2,2zM641,703Q638,701 635,698t-3-10t3-6t4-6t5-1t4,9t0,9t-2,8t-5,2zM641,694Q639,693 638,691t0-5t2-2t2,1t2,5t-1,3t-2,1zM674,711Q672,713 667,707t-9-8t-8-9t0-6t7,2t8,5t7,8t4,8t-2,4zM682,694Q683,690 685,687t4-4t7-5t6-2t-1,6t-6,6t-5,6t-7,3t-1-3zM722,696Q720,697 717,696t-5-3t-4-5t-1-6t5-1t6,3t6,3t2,5t-4,4zM738,700Q737,697 735,693t-1-11t4-6t5-1t4-1t1,10t-2,11t-4,7t-4-2zM758,681Q760,679 763,679t5,1t7,2t3,4t-5,3t-6,2t-5-1t-4-4t0-5zM787,710Q784,709 780,708t-7-7t-8-10t2-4t8,4t8,3t8,7t0,8t-4,1zM804,695Q802,694 801,692t-2-3t0-4t3-2t3,1t2,3t0,4t0,4t-3,0zM845,701Q842,703 838,700t-2-8t3-8t3-5t5,1t6,7t1,8t-5,4t-4,2zM844,696Q843,696 842,693t0-4t2-3t2,1t2,4t-1,4t-3,1zM858,711Q856,712 853,706t-4-10t-5-12t0-8t7,7t6,9t6,11t1,7t-6,1zM880,698Q879,694 877,692t0-8t3-10t4-2t2,5t1,8t-1,12t-4,7t-2-6zM914,698Q913,696 912,694t-3-6t1-7t3,0t4,3t3,3t0,7t-2,5t-4-1zM949,697Q945,699 941,695t-10-5t-4-4t-1-7t3-4t8,4t7,7t6,6t-1,5zM499,716Q498,715 496,713t-1-5t3-3t5-1t2,2t2,5t0,6t-4,2t-4-3zM525,736Q522,735 519,732t-6-8t-5-14t1-6t8,6t7,8t9,12t0,8t-8-2zM575,722Q572,720 570,716t-4-9t-1-7t3-2t4,2t5,6t2,9t-1,7t-3,0zM591,733Q589,734 590,729t3-9t3-6t4-5t2,3t-1,9t-3,7t-3,4t-4,1zM632,721Q630,722 626,720t-8-4t-5-6t3-4t6-1t6,1t6,5t2,6t-4,4zM650,734Q647,731 644,728t-4-7t-1-7t1-5t4-1t3,6t2,9t2,8t-1,3zM682,724Q680,721 681,717t2-8t3-7t5-2t2,5t1,7t-3,6t-5,6t-4,0zM726,729Q724,730 722,729t-4-1t-4-3t0-3t5-1t4,0t4,1t1,4t-2,3zM757,728Q756,725 757,720t3-10t6-10t5-2t0,8t-1,10t-3,9t-7,5t-3-2zM794,728Q791,728 788,725t-5-6t-3-5t0-6t4-2t4,5t5,8t3,6t-2,3zM839,732Q837,732 835,729t-2-6t0-6t2-6t4,2t3,7t3,5t-1,5t-5,2zM873,720Q873,718 875,716t4-3t6-2t5,1t-2,5t-5,4t-3,3t-5,0t-2-4zM888,725Q890,722 894,720t7-5t7-1t6,0t0,4t-9,4t-8,4t-8,2t-1-3zM926,730Q923,726 925,720t2-11t3-11t5-4t4,7t1,11t-2,8t-6,8t-6,2zM491,749Q491,747 492,745t4-5t3-2t5,1t2,3t-4,4t-4,4t-4,3t-3-4zM519,756Q519,749 516,745t0-13t6-13t6-1t5,6t0,12t-4,18t-6,9t-4-7zM540,749Q537,748 537,744t1-7t4-4t5,1t3,3t3,6t-3,5t-6,1t-4,0zM542,744Q542,743 542,741t1-3t2,0t2,2t0,3t-2,2t-3-1zM565,742Q563,740 560,738t-2-6t2-6t3-3t4,0t3,7t-1,7t-2,5t-2,0zM598,758Q596,760 592,753t-8-8t-6-6t0-5t4,0t7,5t4,6t4,7t1,6zM611,747Q612,743 611,741t1-6t5-4t3,1t2,4t-1,5t-3,6t-6,3t-1-3zM676,741Q673,741 670,740t-5-2t-7-4t-1-4t6,0t6,1t6,2t3,5t-2,3zM699,765Q696,764 697,757t0-12t0-9t3-4t4,5t2,9t-1,8t-2,7t-4,4zM709,754Q707,755 706,752t-3-6t0-4t3-1t4-1t3,3t1,6t-2,3t-3,2zM744,750Q742,746 741,746t-3-3t0-4t3-3t2,1t3,5t1,4t0,5t-3-1zM757,747Q754,746 757,741t6-10t6-4t4,2t3,4t-1,9t-6,5t-7-1t-5,1zM769,740Q771,737 780,737t15,1t16,1t11,5t-11,4t-18,2t-13,1t-10-4t-1-7zM811,766Q811,758 810,753t1-11t5-11t5-5t5,5t-1,12t-4,12t-5,13t-5-2zM815,752Q814,750 814,747t2-6t3-1t2,3t-1,5t-3,5t-2-1zM838,745Q838,741 837,739t1-6t4-6t4,0t2,4t-1,5t-3,7t-4,5t-2-3zM848,754Q848,751 846,749t-1-4t5-4t4,0t2,2t0,6t-2,6t-4,3t-2-4zM877,759Q873,762 873,756t2-8t4-6t4-6t5,2t1,9t-1,8t-4,3t-7,1zM914,742Q913,744 910,741t-4-7t0-7t3-3t5,2t5,5t4,7t-3,3t-6,1zM931,757Q929,754 931,748t3-11t3-7t5-4t4,2t-2,10t-5,11t-4,8t-4,0zM515,781Q514,784 508,782t-9-5t-7-6t-4-7t4-3t11,4t9,5t5,5t-2,6zM526,767Q524,766 525,762t2-7t3-5t4-2t2,2t1,7t-3,5t-4,3t-4,2zM541,779Q539,778 539,776t-1-4t0-5t3-2t3,3t3,4t0,3t-2,4t-4,0zM572,768Q571,765 568,763t-1-6t3-6t4-2t3,2t2,7t0,8t-4,4t-3-2zM586,763Q584,763 585,761t3-4t3-2t2,2t2,3t0,4t-3,2t-3-1t-3-2zM607,772Q607,768 606,766t0-9t4-5t4-1t3,3t0,7t-3,9t-4,5t-3-3zM661,765Q659,763 665,762t9,0t6,0t5,2t-2,4t-7,2t-6,0t-4-2t-5-3zM709,774Q709,776 704,776t-8-1t-8-1t-5-4t6-2t8-1t8,0t5,3t-1,4zM719,778Q717,776 715,772t1-11t5-12t5-2t4,8t2,10t-2,13t-5,5t-6-5zM740,785Q737,782 737,775t-1-13t2-16t4-6t4,10t3,12t0,13t-4,11t-5-1zM794,768Q792,766 790,764t-2-5t0-7t3-4t4,3t2,6t2,7t0,5t-5-1zM814,773Q812,774 808,772t-5-5t-3-5t-2-7t5-1t6,6t6,5t3,5t-4,3zM869,785Q864,782 861,780t-6-6t-2-7t-2-6t4-2t6,7t4,7t5,9t-1,3zM879,776Q876,776 880,770t5-7t5-7t5-4t1,6t-4,8t-4,7t-5,3t-4,0zM911,767Q909,768 908,765t1-8t3-6t3-2t3,2t0,6t-1,10t-3,1t-3-1zM939,782Q938,782 934,780t-3-8t2-7t2-5t3-1t5,9t2,8t-2,6t-4,0zM494,806Q492,807 488,804t-3-8t1-9t3-4t6,1t6,6t2,8t-4,5t-5,3zM494,799Q492,799 491,797t-1-5t2-3t2,2t2,4t0,3t-2,1zM530,792Q528,793 522,791t-8-6t-7-8t-4-6t6-1t9,5t8,6t5,6t-1,5zM568,801Q565,801 566,797t5-7t6-4t4,0t2,4t-2,7t-5,7t-5-1t-3-2zM586,797Q586,792 585,789t0-5t2-5t4-3t3,2t0,7t-2,5t-2,7t-4,0zM639,805Q628,799 623,796t-11-8t-11-11t-1-8t9,0t11,8t11,12t12,14t-4,2zM630,801Q626,801 627,794t3-12t6-8t6-3t4,5t2,11t-4,9t-8,3t-6,2zM635,791Q634,790 634,787t2-5t3-1t2,3t0,6t-3,3t-3-2zM674,791Q673,792 670,795t-7-1t-4-3t-4-4t0-4t6-1t9,3t4,2t0,4zM687,809Q685,809 686,803t3-12t6-9t5-4t2,5t0,11t-5,10t-5,4t-5,1zM715,796Q714,794 714,790t2-6t3-4t5-1t3,3t0,6t-3,4t-5,4t-4,0zM757,804Q755,806 750,805t-8-4t-4-5t-3-7t4-3t9,3t7,5t4,6t-2,4zM755,790Q757,786 758,784t2-5t6-3t3,3t0,5t-2,5t-5,3t-6,2t-1-4zM797,796Q795,796 794,794t-2-4t0-5t2-3t4,2t2,3t2,4t-1,4t-4,1zM803,791Q802,789 805,787t4-3t6-4t3,2t-1,6t-2,5t-4,3t-5,0t-3-5zM859,789Q858,788 857,785t2-5t4-4t3-1t2,3t0,6t-3,5t-4,2t-2-2zM878,793Q876,791 872,789t-3-8t2-10t5-4t4,4t6,10t2,10t-4,5t-6-3zM924,805Q920,803 917,799t-7-7t-5-9t2-4t6,0t6,6t6,10t3,8t-4,2zM935,803Q933,802 932,798t-2-9t4-5t6-1t5,1t2,7t-3,10t-4,4t-5-2zM498,812Q498,809 500,805t5-3t6,2t8,2t2,4t-7,6t-6,1t-6-1t-4-4zM520,835Q517,829 515,825t-2-8t0-11t2-8t5,3t3,11t2,13t0,11t-5-1zM550,830Q548,828 548,822t-1-10t2-8t5-8t3,3t0,13t0,11t-2,8t-5-1zM568,817Q566,817 565,814t-2-6t1-5t4-1t3,1t3,4t-1,6t-2,3t-3,1zM632,821Q632,825 625,822t-13-9t-7-11t-1-7t5-2t14,6t12,10t1,7t-4,5zM647,813Q644,813 645,808t3-6t3-6t4-4t3,4t0,7t-2,5t-4,3t-5,2zM656,813Q656,810 658,808t4-5t4-3t4,0t1,3t-3,5t-4,4t-5,3t-3-2zM681,821Q686,817 687,814t4-6t9-2t3,5t-1,6t-4,5t-9,4t-9,1t1-6zM712,829Q709,829 706,827t-4-4t-1-7t1-6t6-1t4,6t5,6t1,6t-6,2zM734,819Q734,814 734,810t4-8t5-5t6-2t5,3t-3,8t-6,6t-6,7t-5,0zM740,810Q740,808 740,806t2-4t3,0t1,3t-1,4t-3,2t-2-1zM793,819Q792,816 790,812t-1-9t2-5t3-4t4-1t2,9t-1,8t-3,7t-3,2zM816,826Q813,828 813,824t3-8t4-5t4-1t2,2t0,8t-2,7t-4,0t-4-1zM828,828Q826,826 824,823t-2-7t1-10t3-4t5,6t4,7t2,9t-3,6t-6-2zM864,826Q860,829 860,822t-1-11t1-8t3-7t6,3t3,9t0,8t-3,6t-5,4zM891,830Q889,829 889,826t-2-8t1-9t3,2t3,4t3,3t0,8t-3,4t-3,0zM912,820Q911,820 909,815t1-8t1-7t2-6t3,3t2,9t-1,7t-2,5t-3,2zM932,822Q930,820 929,817t1-5t4-4t3-3t4,0t-1,6t-3,7t-2,5t-3-1zM536,847Q534,847 531,846t-5-4t-5-6t1-4t5,2t5,2t6,5t1,5t-3,1zM541,844Q539,844 537,839t0-10t4-5t4-6t4,0t1,11t-1,9t-4,5t-4,1zM562,840Q560,841 560,838t-2-6t0-6t3-1t4,3t3,4t2,5t-3,3t-5,0zM590,850Q588,848 587,845t0-8t2-5t4,0t4,1t2,5t-2,7t-4,4t-3,1zM628,835Q626,835 624,834t-2-5t3-3t3-3t3,0t3,4t0,5t-2,2t-4,1zM662,847Q657,847 652,846t-10-4t-6-5t-5-8t3-2t12,4t9,6t8,6t-1,4zM661,843Q660,840 659,837t1-7t4-5t5,0t3,2t0,7t-3,7t-5,4t-3-2zM687,848Q685,839 682,835t-3-12t1-15t6-3t5,6t3,11t1,18t-3,13t-5-5zM719,846Q719,850 713,845t-9-11t-5-11t1-5t7,0t9,6t7,11t-1,6t-3,5zM714,837Q713,837 710,835t-4-6t1-2t4,0t4,4t1,5t-2,1zM731,834Q730,833 726,831t-1-6t4-4t6,0t4,1t2,5t-1,8t-4,3t-5-4zM747,841Q748,838 750,836t6-4t5-2t5,2t0,5t-5,4t-6,3t-6,1t-2-4zM797,844Q794,844 791,840t-6-9t2-5t3-6t3-4t6,7t1,9t1,7t-4,5zM795,835Q793,834 792,832t-2-3t1-3t3,1t3,3t0,4t-2,1zM805,838Q802,836 801,834t-6-6t0-5t6-2t4,1t4,4t2,7t-1,6t-5-1zM813,842Q816,837 820,833t9-7t10-6t6,0t-2,7t-7,7t-9,5t-10,5t-4-2zM860,845Q858,843 857,839t2-8t4-5t4-1t5,1t0,6t-4,8t-4,5t-4,0zM892,834Q890,835 887,837t-9,1t-5-3t-2-4t1-3t8-1t10,1t4,3t-2,3zM904,848Q902,847 901,844t-2-5t0-5t4-3t5,1t2,4t0,6t-1,5t-5,1zM930,839Q930,842 927,841t-5-5t-1-7t1-3t3-2t6,3t4,6t-1,3t-4,3zM557,96Q556,95 556,94t1-2t2,0t1,2t-1,2t-2,0zM616,813Q614,814 612,814t-2-2t0-3t3-1t3,2t0,3zM561,563Q559,562 558,561t-1-4t2-1t2,2t1,4t-1,1zM926,555Q924,555 923,554t-1-4t2-1t3,1t1,3t-2,2zM767,327Q768,326 769,326t3,0t0,2t-2,1t-3,0t0-2zM791,453Q790,453 788,452t-3-1t1-2t3,0t3,2t-1,2zM711,488Q709,487 710,484t1-5t2,0t2,4t-1,5t-3,0zM648,172Q646,173 644,172t-4-3t1-2t5,0t3,3t-1,2zM558,588Q557,588 554,587t-1-2t1-3t3,0t3,3t-2,3zM579,370Q578,369 578,367t1-1t2,0t1,2t-2,2t-1,0zM543,312Q543,310 546,309t5,1t1,3t-4,2t-4,0t-1-3zM751,150Q751,149 752,148t2,0t1,2t-2,2t-2-1t0-1zM548,601Q550,599 552,597t5,0t0,3t-3,2t-5,1t-1-2zM802,344Q802,343 803,342t2,0t1,2t-1,2t-2,0t-1-2zM647,457Q645,456 644,454t-1-4t3-2t3,3t0,5t-2,1zM830,485Q830,483 832,483t2,0t1,2t-2,2t-3,0t0-2zM592,800Q591,799 591,797t1-2t2,0t0,3t-1,2t-1,0zM748,131Q747,132 745,132t-2-3t1-3t4,0t1,2t-1,3zM804,774Q803,774 802,773t0-1t1-2t2,1t0,1t-1,2zM833,182Q833,180 835,178t3-2t2,2t-2,3t-3,2t-2-1zM914,660Q914,658 915,657t3-1t2,1t-1,4t-3,1t-2-2zM881,585Q881,583 883,582t3-1t1,2t-2,3t-3,1t-1-2zM893,609Q892,609 890,608t-4-3t1-1t5,0t2,3t-1,2zM670,823Q669,824 667,823t-1-2t0-2t3-1t2,2t-1,3zM618,403Q618,402 620,401t3-1t0,2t-2,2t-2,1t-1-2zM761,328Q761,326 763,323t4-2t3,2t-2,4t-5,3t-2-2zM652,158Q653,156 655,155t4-1t1,2t-2,2t-4,1t-2-1zM520,271Q519,272 518,270t0-2t1-1t2,1t1,2t-2,1zM637,626Q635,624 635,622t0-3t3-1t2,4t-1,4t-2,0zM705,531Q704,530 707,530t3,0t1,1t-3,2t-2,0t-1-2zM589,270Q587,271 584,270t-4-3t1-2t4,0t4,3t0,2zM760,146Q761,144 763,143t3,1t1,2t-3,3t-4-1t0-2zM918,513Q916,512 917,511t1-3t3,1t1,2t-1,3t-3-1zM550,345Q551,343 554,343t4,1t1,2t-4,2t-5,0t0-3zM619,488Q619,487 621,487t3,1t1,1t-3,2t-3,0t0-3zM860,78Q858,77 857,76t-2-4t1-1t4,2t2,3t-2,2zM813,561Q812,561 810,561t-2-1t0-2t3-1t2,2t0,2zM539,824Q539,822 541,821t4-1t2,2t-2,3t-4,1t-2-2zM623,460Q622,458 624,455t3-3t3,2t-1,4t-3,3t-3-1zM868,215Q867,213 867,212t2-2t3,0t1,3t-2,2t-3,0zM696,205Q695,204 694,202t1-3t2-1t1,3t0,3t-2,1zM561,256Q562,254 565,253t5-1t1,3t-4,3t-5,0t-1-2zM765,341Q764,341 763,340t-1-2t1-1t2,1t1,2t-1,1zM541,593Q540,593 540,592t1-2t1-1t1,2t0,2t-2,0zM712,187Q711,187 710,185t-1-3t2-1t2,2t1,3t-2,1zM773,408Q773,406 774,404t2,0t3,2t-1,3t-3,1t-2-2zM767,642Q767,640 768,639t2-2t2,2t-1,2t-2,2t-2-1zM705,486Q704,483 704,480t2-5t3,1t0,5t-2,5t-2,0zM823,254Q822,254 821,251t-1-5t3-1t2,3t0,5t-2,1zM881,217Q879,218 877,217t-4-1t1-2t4,0t3,1t0,2zM779,773Q778,774 777,774t-2-2t0-3t3,0t2,2t-1,2zM733,547Q732,546 731,544t0-3t2,0t2,2t-1,3t-1,1zM741,264Q739,264 738,263t-1-3t2-1t3,1t0,2t-1,2zM529,291Q527,292 524,291t-2-2t1-3t3,0t3,3t0,2zM684,395Q684,393 687,392t6,1t0,3t-4,3t-5-1t0-3zM526,699Q524,699 523,697t-1-4t2-1t3,2t1,4t-2,1zM516,319Q517,318 518,318t2,2t0,1t-1,2t-2-1t-1-3zM683,147Q683,145 685,143t4-1t2,2t-2,4t-4,1t-2-2zM551,708Q549,708 547,707t-1-4t2-2t3,1t2,4t-2,2zM508,813Q508,811 510,810t3-1t1,2t-2,3t-3,1t-1-2zM905,799Q903,799 902,798t-1-2t1-1t2,1t2,2t-1,1zM535,395Q534,395 534,393t1-3t1,0t1,3t0,2t-2,0zM649,376Q649,375 652,374t4,0t1,2t-4,3t-3,0t-1-3zM755,374Q754,374 752,374t-1-1t0-3t3,0t2,2t-1,2zM811,621Q810,619 812,618t3-1t1,1t0,3t-3,1t-2-1zM747,362Q747,361 749,360t2,0t0,2t-1,2t-2,0t-1-2zM621,451Q620,451 620,449t1-1t2,0t1,2t-1,2t-2-1zM784,509Q783,511 781,510t-4-1t0-3t3-1t3,1t1,3zM560,231Q559,232 557,233t-2-2t0-2t3-1t2,1t0,2zM673,219Q672,219 671,218t-1-2t1-1t2,1t1,2t-1,1zM646,79Q645,77 645,75t1-4t3-1t1,4t-1,5t-3,0zM707,220Q705,220 703,219t-4-2t1-3t5,1t4,2t-2,3zM643,536Q643,534 643,532t3-3t2,1t0,4t-3,3t-2-1zM862,723Q862,721 863,720t3-1t2,2t-1,3t-3,1t-2-2zM871,686Q872,684 874,684t4,1t0,2t-3,2t-3,0t-1-3zM611,354Q610,354 608,353t-2-2t1-1t3,1t2,2t-1,1zM783,465Q781,465 778,463t-2-3t2-2t4,1t3,4t-2,2zM570,122Q569,120 570,118t3-3t2,1t-1,3t-3,3t-1,0zM733,82Q732,81 733,80t2-2t1,0t0,3t-1,2t-2-1zM760,469Q759,468 758,466t0-4t2-1t2,4t0,3t-2,1zM926,651Q925,650 927,648t2-3t3,1t-1,3t-3,3t-2-1zM599,496Q599,494 600,493t3,0t1,1t-1,2t-2,1t-2-1zM687,599Q688,598 691,598t4,1t0,3t-4,1t-4-1t0-3zM723,781Q722,782 720,782t-3-2t1-2t3-1t2,1t0,3zM554,432Q553,432 553,430t0-1t2-1t1,2t0,2t-2,0zM672,162Q673,161 675,161t2,0t0,2t-2,1t-3-1t0-1zM827,440Q825,440 824,440t-2-2t1-3t3,0t2,2t-1,3zM671,798Q671,797 673,797t3,0t1,2t-4,2t-2-1t0-2zM649,91Q647,90 649,87t3-4t2,1t0,4t-2,4t-3-1zM784,281Q782,281 780,279t0-3t2-3t3,2t1,4t-2,2zM714,811Q715,810 715,809t2,0t2,1t-1,2t-3,0t-1-1zM813,669Q811,669 811,668t-1-3t2-1t2,2t0,3t-1,0zM715,259Q714,259 713,259t-3-1t0-2t3,0t2,1t0,2zM878,177Q877,178 875,177t-2-2t0-2t4,0t2,2t-1,2zM723,531Q722,529 723,526t3-4t3,0t0,5t-3,4t-3,0zM611,168Q610,167 609,165t1-3t3,0t1,3t-1,3t-2,0zM733,296Q734,294 737,294t5,0t1,3t-4,2t-5,0t-1-3zM704,259Q702,259 699,259t-3-3t1-3t5,1t3,3t-1,2zM698,141Q699,140 700,138t3-1t1,2t-1,3t-4,1t-1-2zM515,530Q514,529 513,528t1-3t1,0t2,2t-1,3t-1,0zM606,98Q605,98 605,97t0-2t2,0t1,1t0,2t-2,0zM523,456Q523,455 522,454t2-2t2,1t1,2t-2,2t-2-1zM803,154Q803,154 802,153t-1-1t2-2t2,1t0,2t-2,1zM875,160Q874,159 874,156t1-5t3,0t1,4t-1,4t-3,1zM598,160Q598,158 600,157t4,0t1,2t-2,2t-4,1t-1-2zM618,262Q617,261 619,260t3-1t2,3t-1,2t-3,1t-2-3zM511,528Q510,526 510,524t1-4t3,0t1,4t-2,4t-2,0zM542,145Q542,143 542,141t1-3t2,1t0,3t-1,3t-2,0zM610,496Q609,495 608,493t1-4t3,0t2,3t-1,3t-3,1zM584,507Q584,505 585,504t3-1t1,1t-1,2t-2,2t-2-1z" fill="none" stroke="#fdecd3" stroke-width="1.4"/>
<path d="M736,707.5l0,5l.5,4.5l1.5,5l3.5,4M719.5,701l1-5M732,709.5l-4-3l-4-3l-4.5-2.5M764,687l-4.5,2l-4.5,2l-4,3l-4,3.5l-3,4l-4,2.5l-4,3.5l-4,2M705.5,66.5l.5,5l3,4M701.5,69l-4,3M717,56.5l-3.5,3.5l-3.5,4l-4.5,2.5l-4,2.5l-3.5,4M886,710l-5,.5l-5-1.5l-5-.5l-4-3l-3.5-3.5M883,705.5l-4.5-2l-3-3.5l-5-2M902,721l-4.5-2.5l-3.5-3.5l-4-2l-4-3l-3-4.5l-4-3l-3.5-3.5l-4-3l-3-4M687,271.5l-4.5,2.5l-2.5,4.5M701.5,270.5l-5-1l-5,1.5l-4.5,.5M689,279l-5-2l-4.5-2l-4.5-1.5M679.5,280l-4-2.5M684.5,281.5l-5-1.5l-4-2.5l-4-3M705,267l-3.5,3.5l-4,3l-4.5,2.5l-4,3l-4.5,2.5l-3.5,3l-4,3.5l-4.5,1.5M684,333.5l4,3l4,3.5l4.5,1l4.5,2.5l4.5,2l5,1l5,.5l4.5,2l5,1l5-1M551,439.5l5-2l4.5-2l4.5-2l5-.5l4.5-2.5M561,439l5,0l5-1l4.5-1l4.5-3l3.5-3M589.5,434.5l2.5,4.5l0,5M594.5,436.5l4-3l5-.5M582,428.5l3,4l4.5,2l5,2l5,.5M541.5,441l4.5-2l5,.5l5,.5l5-1l4-3l3-4l4-2.5l5-1.5l5,.5M713,163.5l1.5,5l3.5,3.5l5,2l5-.5l4.5-2l4.5-2l4-2.5M677,475l1.5,5l1,5M681,461l-1.5,4.5l0,5l-2.5,4.5l-1,5M682.5,475.5l3,4l4,3l3,4.5l3,4l2,4.5M683.5,498.5l3.5,3.5l3.5,4M683,503.5l3,4l4,3.5M686,479.5l-1,5l1.5,4.5l-1.5,5l-1.5,4.5l-.5,5M684,499.5l-5-1M691.5,493l-4,3.5l-3.5,3l-4,3.5l-3.5,3.5l-2,4.5M680.5,456l.5,5l.5,5l-.5,5l1.5,4.5l3.5,4l1.5,4.5l2.5,4.5l1.5,4.5l2.5,4.5l2.5,4.5M534,429.5l-2.5,4.5M539,430.5l-5-1l-5-1l-3.5-3M518.5,466l-1.5,4.5M506,452l1.5,4.5l2.5,4.5l4.5,2.5l4,2.5M544,430l-5,.5l-4,3l-4.5,2.5l-4.5,2l-3.5,3.5l-4,2.5l-5,1.5l-4,3l-3.5,3.5M523,699.5l-5-.5l-5-1M528,698l-5,1.5l-5-1l-4.5-2l-3.5-3.5l-2.5-4.5M654.5,755l.5-5M649.5,755.5l5-.5l5,1l5,.5l5,1l5,.5M657.5,771l5,2l5,0M658.5,776l3,4l3.5,3.5M658,761l-1,5l.5,5l1,5l1.5,4.5l1.5,5M666,771.5l0,5l2,4.5M664.5,786l-3.5,3.5l-4,3M666.5,766.5l-.5,5l1,4.5l-1,5l-1.5,5M621,754l4.5-1.5l5-1l5,.5l5,0l5,1l4,2.5l4.5,2.5l4,3l4,3l4.5,2.5M514.5,516l1.5-4.5l.5-5l.5-5l-1.5-4.5l-3-4l-4.5-2.5M843,446.5M838,445.5l5,1M834,448.5l4-3l3.5-3.5l5-1.5M919.5,71l1.5-5l-.5-5M919.5,66l4.5-2l3.5-3.5M918,61l-3.5-3l-5-1M913.5,84l4-3.5l2-4.5l0-5l0-5l-1.5-5M722.5,560.5l1,5l3,4M726.5,551.5l-2.5,4.5l-1.5,4.5l-2,5l-2,4.5M722.5,589l-4.5-1M728,580.5l-3,4l-2.5,4.5l-4,3l-2,4.5M725.5,541.5l.5,5l.5,5l2,5l0,5l-2,4.5l-1,5l1.5,4.5l1,5M615.5,672.5l0-5l2-4.5l3-4l3-4l3.5-3.5l2.5-4.5l3.5-3.5M797,580.5l-3-4M801,584l-4-3.5l-2.5-4l-.5-5M784,574l-1.5-5l-.5-5M805.5,585l-4.5-1l-4-3l-4-3l-4-3l-5-1l-4.5-2.5l-3-4M829.5,100.5M824.5,100.5l5,0l4.5,1.5M818,87l3,4l1.5,4.5l2,5l.5,5l-.5,5M505,458l-1.5-4.5M514,462.5l-4.5-1.5l-4.5-3l-4.5-1M532,467.5l-5,1l-5-.5l-4-2l-4-3.5l-3-4l-3.5-3.5l-3.5-3.5l-4.5-2M827,23l4.5-1.5M824,38l1-5l.5-5l1.5-5l-.5-5M808.5,67.5l2.5-4.5l2-4.5l1-5l1-4.5l1.5-5l3-4l4.5-2M844,96l5,1l4.5,1l4.5,2l5,1.5M849,96.5l4.5-2l4.5-2.5l4.5-1M858.5,98.5l3.5,3.5l4,3.5l4,2.5M830,91l4.5,1.5l4.5,2l5,1.5l5,.5l5,.5l4.5,1.5l5,1.5l4,3M881,480.5l5,1l5-.5l4.5-1.5M862.5,457l3,4l3,4.5l3.5,3.5l3.5,3.5l3.5,3.5l2,4.5l1,5l3.5,3.5l2,4.5M636,248.5l5-1l5,0M636.5,234M637.5,238.5l-1-4.5M634.5,258l.5-4.5l1-5l-.5-5l2-5M931.5,137M932.5,127l-1,5l0,5M930.5,122.5l2,4.5l1,5l1.5,4.5l0,5M560.5,147l-.5-5l-3-4M581.5,135l5,1.5l5,.5l4,2.5M589,131l4.5-3M586.5,135l2.5-4l3-4.5l4-2.5l4.5-2M558.5,152l2-5l3.5-3.5l3.5-3.5l4.5-1.5l5-1.5l4.5-2l5,0M834,158.5l5-1.5l5,.5l5-.5l4.5,2M829,158l5,.5l5-2l4-2.5l3.5-3.5l2-4.5l3.5-3.5l4.5-2M806,478l-3.5,4M801.5,479.5l-1.5,4.5M816,478l-5-1l-5,1l-4.5,1.5l-5,.5M806.5,475l-4.5,2.5l-5,.5l-5,0M830,474.5l-5,1l-4,2.5l-5,0l-5-1.5l-4.5-1.5l-5-1.5l-5-1l-4.5,1l-5-1M714,619l1.5-5l3-3.5M723,621l-5,0l-4-2l-5-2l-5,0l-5-.5M719.5,618l-1.5-5l.5-5l2.5-4.5l3-4M710.5,613.5l-2-4.5l-1.5-4.5l-.5-5l1.5-5l-1-5M724.5,635l1.5-4.5l-.5-5l-2.5-4.5l-3.5-3l-4-3l-5-1.5l-5,.5l-5,.5l-4.5,2M567.5,725.5l-3-3.5l-2-4.5l-.5-5M558.5,729.5l-4.5-1l-5,0l-5,2M535.5,724.5l-4.5,2.5M549,731l-4-3l-5-1.5l-4.5-2M535.5,741.5l-4.5-1.5M544,729.5l-2.5,4l-2.5,4l-3.5,4M572.5,726.5l-5-1l-4.5,1l-4.5,3l-4.5,1.5l-5,0l-5-1.5M509.5,208l0,5M506,211.5l-.5,5l1.5,5l3,4M497,215.5l0,5l2,5M514,205.5l-4.5,2.5l-3.5,3.5l-4,3l-5,1l-5,1M528,203.5l-4.5,2l-4.5,1l-5-1l-5-1l-5-1.5l-4.5-2l-5,0l-4.5,2l-4.5,2.5l-5,1M770.5,529l-1.5,4.5M760.5,512l4,3l2.5,4.5l1,5l2.5,4.5l3,3.5M796.5,533.5l4,3.5M794.5,519l.5,5l2,4.5l-.5,5M756,513.5l4.5-1.5l5,.5l5,1.5l4.5,1l5,1l4.5,2l5,1l5,0l5,0M626,92l-2.5-4.5M621.5,89.5l-.5-5M631,92l-5,0l-4.5-2.5l-3-4M632.5,87.5l-1-5l0-5l.5-5l-1.5-5l-1.5-4.5M635,101.5l-3-4.5l-1-5l1.5-4.5l0-5l1.5-5l2.5-4.5l1.5-4.5l1.5-5M612.5,290.5l-4.5-2.5M607.5,290.5l-4,3M617,288.5l-4.5,2l-5,0l-5-1l-4.5-2.5M605.5,324l-3.5,3.5M606.5,309l-1,5l.5,5l-.5,5M624.5,275.5l-2.5,4l-3,4.5l-2,4.5l0,5l-.5,5l-2,4l-4,3.5l-4,3M540,90l-4.5-2l-5-2l-3.5-3l-4-3M787,89.5M786,79.5l1.5,5l-.5,5M782,82l-5,0l-4.5-2M797.5,69.5l-3.5,3.5l-3.5,3.5l-4.5,3l-4,2.5l-4,3l-5,1.5l-4.5,2M932.5,384l-5,1l-5,1l-4.5,1l-5,0l-5-1.5M870.5,769M865.5,761l3.5,3.5l1.5,4.5M875,761l2.5,4.5l2.5,4.5M884,772l-4,3l-4.5,2M883.5,767l.5,5l2,4.5l-.5,5M893.5,780l-4.5,2.5M893,770l.5,5l0,5M861,763l4.5-2l5-1l4.5,1l4.5,3l4,3l4.5,2l5,1M841.5,385l-5-2l-4.5-2M851,385l-5-.5l-4.5,.5l-5-1.5l-5,.5l-5,.5M842,754.5l-2,5l-3,4l-2,4.5l-1.5,4.5l-2.5,4.5M829,761.5l-3-4l-3.5-3.5M824,762.5l-3.5,3.5M833.5,760l-4.5,1.5l-5,1l-5,0l-4.5,3M815.5,767.5l.5,5M820,765l-4.5,2.5l-3,4l-3,4l-1.5,5l-1,4.5M862,740.5l-3.5,4l-4,2l-4.5,3l-3.5,3.5l-4.5,1.5l-4.5,2.5l-4,3l-4,3l-5,1.5l-4.5,.5M667.5,583l-4.5,2M666.5,588l-4.5,1.5M666.5,578l1,5l-1,5M660,571l2.5,4l4,3l4,3M845.5,291.5l-4-2.5l-4-3M865,287l-5,.5l-5,1l-4.5,2l-5,1l-4.5,2.5l-5,.5l-5,0l-4.5-1.5M935,267.5l1,5l2.5,4.5l4,2.5l3.5,4M940,267.5l4.5-2.5l5-.5M910,270l5-1l5-1l5-1l5,0l5,.5l5,0l4.5,2l4.5,1M769.5,391l2-4.5l3-4l3.5-3.5M752,370l2.5-4.5l1-5l.5-5M770.5,376.5l-5-.5l-5-1l-4.5-2l-4-3l-1.5-5M759,402l3-4l3.5-3.5l4-3.5l1.5-4.5l.5-5l-1-5l1-5l-1-4.5M813,803.5l2.5-4M802,794l3,4l3,4l5,1.5M829.5,799.5l-2,4.5M821.5,793.5l3.5,4l4.5,2l4.5,2.5M832.5,809l4,3M832,804l.5,5l-1.5,5M797,794.5l5-.5l5,.5l5-1.5l5-.5l4.5,1l4.5,3l3,3.5l3,4M519,740l-5-.5M526.5,746.5l-4-3l-3.5-3.5l-3-3.5l-3-4.5M519,758.5l4-2.5l2-4.5l1.5-5l-.5-5l1-5l2.5-4l2-4.5M895,772.5l5,0M885,762l4.5,2l3,4.5l2.5,4M894,758l4,2.5l5,1l4.5,2M875.5,765l5-.5l4.5-2.5l5-1l4-3l3-4l1-5M557,623l-1.5,4.5l-2.5,4.5l-1.5,5M570,630l2.5,4l.5,5l1.5,5l3,4M584,633l3.5,3.5l4.5,2M580,630l4,3l2,4.5l1.5,5l3.5,3.5M552,614.5l3,4l2,4.5l4,3l4,3l5,1l5,0l5,0l5-.5l5,1l5-1M894,191.5l-4.5-3l-4-2.5l-4.5-2.5l-2.5-4.5M898.5,189.5l-4.5,2l-5,.5l-5,1.5l-3,4l-2,4.5l-3,4l-3.5,3.5l-2,4.5M785.5,577.5l.5,5l2.5,4M780,597.5l-4.5-2.5M788,592l-4.5,1.5l-3.5,4l-4.5,1.5M782,568l1,5l2.5,4.5l2,4.5l1,5l-.5,5l.5,5M829.5,272.5l1,5l-.5,5l-1.5,4.5M818.5,288.5l-.5,5M827.5,277l-4,3l-2,4.5l-3,4l-3.5,3.5M829,301.5l3.5,3.5l3.5,3.5l4,2.5M833.5,269l-4,3.5l-2,4.5l-.5,5l1,5l1.5,4.5l0,5l-.5,5M549.5,762l5,1l5,1l4.5,2l5,.5M538,753l4,3l3.5,3.5l4,2.5l3.5,3.5l3,4l3.5,4l2,4M528.5,443.5l-4.5,2.5l-4.5,1.5l-5-1M522,457l2.5,4l2.5,4.5l4,3M520,461.5l-3.5,3.5l-3.5,3.5M540,434l-4,3l-4,3l-3.5,3.5l-3.5,3.5l-1.5,5l-1.5,5l-2,4.5M543.5,485.5l1.5-4.5l-.5-5M553,497l-4-3l-3-4l-2.5-4.5l-4-2.5l-4.5-2M648,87l-2.5,4.5l-1,5l-3,4l-1.5,5l-1,4.5l-2.5,4.5l-2,4.5l-4,3M723.5,196.5l3.5,3.5l3,4M726,182l-2,4.5l-.5,5l0,5l.5,5l-.5,5M834,631l1.5,4.5l1,5M836.5,626.5l-2.5,4.5l0,5l-1.5,4.5l0,5M866,591l-4.5,1.5l-5,2l-3,3.5l-4.5,2.5l-4.5,2.5l-2.5,4.5l-1.5,5l-.5,4.5l-2.5,4.5l-1,5M918.5,631l-1.5,4.5M913.5,632.5l-2,4.5l-.5,5M933,627.5l-5,.5l-5,1.5l-4.5,1.5l-5,1.5l-5,0M514.5,367l.5-5l.5-5l-1.5-5l-3-3.5M776,650l5-1M764,641l4,3l3.5,3.5l4.5,2.5l5,0M732.5,611.5l2.5,4l4.5,3l4,2.5l4,3.5l2,4.5l2,4.5l3.5,3.5l4,3l5,1l4,3.5M599,492l-4-3.5l-3.5-3.5l-2.5-4M594.5,490l-2.5-4.5l-2.5-4.5l0-5l1-5M613.5,490l-5,.5l-4.5,2l-5-.5l-4.5-2l-5-1.5l-4.5-2.5l-3-4l-3-4l-1-5M585,760.5l-5-1M592,767.5l-4.5-2.5l-2.5-4.5l-3-4M611.5,768l-5,.5l-5,1l-4.5-1.5l-5-.5l-5-1l-5-1M671,183l.5,5l1,5M675.5,169l-1.5,4.5l-1,5l-2,4.5l-1,5l-1,5l.5,5M729,73.5l-3,3.5l-2.5,4.5l-4,3l-4.5,2l-4.5,1.5l-5-.5M620,544l1.5-4.5l-.5-5M609,560.5l4-3.5l1.5-4.5l2-5l3.5-3.5l4-2.5M588,383.5l-.5,5l1.5,5l3,3.5l3.5,4l4,3M540,729l0,5M545,720.5l-2.5,4.5l-2.5,4l-1,5M535.5,718l-3,4l-2,4.5l-1,5M511,712.5l-3,4l-3,4M507,715.5l1,5M525,707.5l-5,0l-4.5,2.5l-4.5,2.5l-4,3M554,725l-4-2.5l-5-2l-4.5-1l-5-1.5l-4-3l-3-4l-3.5-3.5l-5-1M674.5,164l-3.5,4l-4.5,2l-5,0M670.5,167.5l-4.5,2l-4.5,1.5l-3.5,3.5l-4.5,2.5M684.5,147l-2.5,4.5l-2,4.5l-3.5,3.5l-2,4.5l-4,3.5l-1.5,4.5l-1,5l-1,5M798,111l-4.5,3l-2.5,4l-4,2.5M803.5,119l-2.5-4l-3-4l-1.5-5l-1.5-4.5l-2.5-4.5l-1-5M559.5,501l-4.5-2l-3.5-3l-5-1.5l-5-1l-3.5-3l-3.5-4M785.5,365l4-2.5M775.5,365l5-1l5,1l5-.5M772,374l1.5-4.5l2-4.5l3.5-4l4-2.5l4.5-2.5l4-3l4.5-2.5M898,433l-5,1l-3.5,3.5l-2.5,4.5M821,96.5l-1.5-5l-1-5l-.5-5l-2.5-4M728,751l2-4.5l3.5-3.5l3-4l3.5-3.5M745,716l-1-5l.5-4.5M737.5,728.5l3.5-3.5l2.5-4.5l1.5-4.5l3.5-3.5l4.5-3M740,724.5l4.5-2l4-3.5l4.5-1l5,1M708.5,750.5l5,1.5l5,1l5,0l4.5-2l4-3l2-5l1-4.5l1.5-5l1-5l2.5-4M648,490l0,5l-2,4.5l-2.5,4.5l-3,4l-4,3.5M666,473.5l-3.5,4l-3,4l-4.5,2l-3,4l-4,2.5l-4,3l-3.5,4l-1.5,4.5l-.5,5M611.5,356.5l2,4.5M614,352l-2.5,4.5l0,5l1,5M636,341.5l-4,2.5l-4.5,2.5l-4.5,1.5l-5,1.5l-4,2.5l-5,1l-4.5,3l-4.5,.5l-5,0l-5-1M674,739l5-.5M666.5,733l3,4l4.5,2l4,3M673.5,709.5l-2.5,4.5l-2.5,4.5l-1,4.5l-1.5,5l.5,5M623,68l-1-5l-.5-5l0-5M631,74l-3.5-3.5l-4.5-2.5l-4-3l-4.5-2l-3-4l-3-4M579.5,386M579,391M578,381.5l1.5,4.5l-.5,5M574.5,385.5l-4.5,2l-2.5,4M572.5,395l-4,3l-2,4.5M572.5,390l0,5l1,4.5l3,4M585.5,375.5l-3.5,3l-4,3l-3.5,4l-2,4.5l-3,4l-3.5,3M729.5,576l-2,4.5l-1,5M726.5,566.5l1,5l2,4.5l3,4l2,5l2,4M669,342l-2.5,4.5l-2.5,4.5l-1,4.5M670,357l-4.5,1.5l-5-1l-5,1l-5-.5M646.5,325.5l4.5,1l5,1l4.5,2.5l2.5,4.5l3.5,3.5l2.5,4l1.5,5l1,5l-1.5,5l.5,5M743.5,78.5l.5-5M758,78.5l-5,1.5l-5,.5l-4.5-2M760,63.5l-1,5l-1,5l0,5l-2,4.5l-3,4l-2,4.5l-3,4l-2,4.5l-4,3.5M731,158.5l2.5,4l1.5,5M736,144.5l-1.5,4.5l-1,5l-2.5,4.5l-4.5,2.5l-4,3M529,656l-3,4l-4.5,2l-5,1.5l-4.5,.5l-5,1.5l-4.5,1.5M734.5,320l5-.5l5,1l4,3l4,3M735.5,315.5l-1.5-5l-2.5-4.5l0-5M741,303l4.5,1.5M736.5,305.5l4.5-2.5l3.5-3l4-3.5M728.5,328l3.5-3.5l2.5-4.5l1-4.5l1-5l0-5l-1-5l-.5-5l-1-5M775.5,436l3.5-3M776.5,460.5l0-5l-1.5-4.5l1-5l.5-5l-1-5M764,438.5l1-5l1.5-4.5M772,458.5l2-4.5l0-5l-2-5l-3.5-3.5l-4.5-2l-5-1M791,473.5l-2.5-4.5l-3-4l-4.5-2l-4.5-2.5l-4.5-2l-4.5-2l-5-.5l-5,0l-5,1.5l-4.5,2.5M851.5,599.5l-3,4l-4,3M857.5,592l-4,3l-2,4.5l-.5,5M854,605.5l-3.5,3.5l-3,4.5M858.5,596.5l-2.5,4.5l-2,4.5l-3,4M861.5,626l3,4l4,3.5l4.5,2.5l4.5,.5M854,577.5l.5,4.5l2,5l1,5l1,4.5l1.5,5l1,5l-.5,5l0,5l0,5l1,4.5M509.5,808.5l-2.5,4.5M519,797l-3.5,4l-3,4l-3,3.5M510,765.5l3,4l3.5,3.5l2.5,4.5l0,5l0,5l1,5l-1,4.5M877,76.5M881.5,79.5l-4.5-3l-2.5-4.5M904,96.5l-4.5-2l-4-2.5l-5-1l-4-3.5l-3-3.5l-2-4.5l-1-5l-1-5M550.5,376.5l5,0l4.5-2M543,370.5l4,2l3.5,4l3,4l4.5,2.5M546.5,384.5l-1.5,5l.5,5l.5,5M537,346.5l1.5,4.5l2.5,4.5l1,5l1,5l0,5l1,4.5l.5,5l2,4.5M926.5,58.5l-2.5-4M923.5,49.5l-4.5-2.5l-5-1.5M931,61.5l-4.5-3l-2.5-4l-.5-5l1.5-4.5M716,289.5l-4.5,1l-4.5,3l-4,2.5l-5,1.5l-5,0M776,85l3-4M783,98l-2-4.5l-3.5-3.5l-1.5-5M792,81.5M785.5,88.5l3.5-3.5l3-3.5M782.5,103l.5-5l1.5-4.5l1-5l-2-4.5l-2.5-4.5l-1.5-5l-3.5-3.5M635,389l3,4M636.5,374l-1,5l.5,5l-1,5l-1,5M631.5,375l-3,3.5l-4.5,3l-4.5,1l-5-.5M603.5,383l-4,2.5l-5,.5M612.5,379l-4,3l-5,1l-5,.5M598.5,374l-4-3M603,375.5l-4.5-1.5l-5,1l-5,.5M641,372l-4.5,2l-5,1l-4.5,2.5l-4.5,1.5l-5-.5l-5,.5l-5-1.5l-4.5-2M873.5,148l-2.5,4l-3.5,4l-1.5,4.5l-3,4l-4,3l-2,4.5l-1,5M583,624.5l5,1M574,629l4.5-3l4.5-1.5l4.5-2.5M566.5,356.5l-4.5,2.5M568.5,352l-2,4.5l-1,5M562,346.5M563.5,351.5l-1.5-5M578.5,351l-5,0l-5,1l-5-.5l-5,.5M877,782l-4.5,2.5M873.5,785.5l-4.5-2M880,778l-3,4l-3.5,3.5l-5,2M878.5,783l-4.5,1.5l-5-.5M906.5,770.5l-5-.5l-4.5,1l-5,0l-5,.5l-4.5,2.5l-2.5,4l-1.5,5l-2,4.5l-2,4.5M676.5,586l-3.5,3.5l-1,5l-2,4.5l-3.5,3.5l-1.5,4.5l-1.5,5l-3,4M552.5,708l-5-1M548.5,699l-5-1.5M555,712.5l-2.5-4.5l-3-4l-1-5M564.5,711l-4.5,1l-5,.5l-5,0l-4.5,2.5l-5,1l-5,.5l-5,0l-5,0l-4.5,2.5M748.5,660.5l-5,0M755,668l-3-3.5l-3.5-4M756,673l-1-5l-.5-5l-1-4.5l1-5M660.5,740.5l1-5M653,747l4.5-3l3-3.5M671.5,742l4,3M662,742l5-.5l4.5,.5M628.5,746.5l5-.5l5,0l5,0l5,1.5l4.5-.5l5-2l4-3M617.5,750l-5,.5l-4.5-1.5l-5-1l-5-1l-4.5-2.5l-4.5-1.5l-5-.5M592,571.5l-1.5,5l.5,5l2,4.5M606,573l2.5-5l3-3.5M614,568l5-1l4.5-2M611,572l3-4l1-5l-1-5l-.5-5M583.5,566.5l4.5,2l4,3l4.5,2.5l5,0l4.5-1l5-1l4.5-2.5M614,647.5l3,4l3.5,3.5l3,4l4.5,2.5l4.5,2M698.5,218l-3,4M687.5,208.5l4.5,2.5l4,3l2.5,4M666,182l3.5,4l2.5,4l3.5,3.5l3.5,3.5l4.5,2.5l2.5,4.5l1.5,4.5l2.5,4.5M777,774l1-5M773.5,777.5l3.5-3.5l4.5-2l5-.5M754,776.5l5,1.5l5-1l4.5-1l5,1.5l5-.5l5,.5M906,771.5l-5-1.5l-4.5-1.5l-5,0l-5-1l-4.5-2l-5-.5l-5,1.5l-4.5,1.5M875,658l-.5-5M869.5,666l3.5-3.5l2-4.5l3.5-3.5l3-4l1-5M800,666l3.5,3.5l4.5,2.5l4.5,1.5l5,.5l5-1l5-.5l4.5,2.5l4.5,2.5l4.5,1.5l5-1M567.5,429.5l-4.5-1.5l-5-.5M567.5,445M561.5,437l2.5,4.5l3.5,3.5M576,423.5l-4.5,3l-4,3l-4,3l-2,4.5l-3,4M709.5,218l3.5,3.5l4,2.5l5,1.5l3.5,3.5M729,216l3.5-4l2-4.5l3.5-3M700,218.5l5,.5l4.5-1l4.5-2l5,0l5,1l5-1l4.5-2l5-.5M886,342.5l0,5l.5,5l0,5M890.5,334l-1.5,4.5l-3,4l-3.5,4l-4.5,2l-4,3l-4.5,2.5l-3,4M615.5,669.5l-.5-5M618.5,673.5l-3-4l-2.5-4.5l-3.5-3.5M579.5,696l-5-.5l-4-3M593,699.5l-5,1l-5-1l-3.5-3.5l-4.5-2.5l-5-1M608.5,681l-4,3l-3,4l-4,2.5l-3,4l-1.5,5l0,5l-2,4.5l-3,4M498.5,763.5l1.5-4.5l.5-5l-2-4.5M498.5,739.5l5,.5l4,3M494,761.5l-2-4.5l-1-5l1-5l3-4l3.5-3.5M492,734l2-4.5l-.5-5l-1.5-5M491,757.5l-2-4.5l.5-5l-1-5l1-5l2.5-4M488.5,753l0-5l-1.5-5l-2-4.5M497,732l1-4.5l1.5-5M486,749l2.5-4.5l3-4l2-4.5l3.5-4l1.5-4.5M520.5,775l-5-1.5l-4.5-1.5l-4.5-2.5l-4.5-2.5l-3.5-3.5l-4.5-2l-3-4l-2.5-4.5l-2.5-4M645,66l-4-3l-5-1l-3.5-3l-5-1.5l-3.5-4l-4-2.5l-3.5-4M905,437.5l2.5-4.5l3-4l2.5-4.5M867,445l5,1l5,.5l5-1.5l4-2.5l5-1.5l4-2l5-1.5l5,0l5-1.5M709.5,747M701,742l4,3l4.5,2M706,742.5l3.5-4M692.5,747l3.5-3.5l5-1.5l5,.5l4.5-2l4.5-2.5M670,733l-5,1.5l-4.5-1M669,738l-4,3l-5,.5M677.5,715.5l0,5l-1.5,4.5l-3,4l-3,4l-1,5M680,686.5l0,5l1,5l-.5,5l.5,4.5l-1,5l-2.5,4.5l-2.5,4l-3,4l-4.5,2.5l-4,3.5M661,596l3-4M651,594l5,1l5,1l4.5-2M660.5,611.5l1,5l1,4.5l-1,5M644,581.5l3.5,3.5l3,4l.5,5l1.5,5l3,4l2,4.5l3,4l4,3M845,319l1.5-4.5l2-5l-.5-5M830.5,359l-1.5-4.5l-1.5-5l.5-5l-1-5l.5-5l2.5-4.5l2.5-4l3.5-4l4.5-2.5l4.5-.5M701.5,350l-1,4.5l-3.5,4M711,360l4-3M702.5,355l4.5,2l4,3l4.5,2.5M700,345l1.5,5l1,5l2.5,4l2.5,4.5l3,4l3.5,3.5M540.5,584.5l1.5,5M541,574.5l.5,5l-1,5M545,577.5l3.5,3.5l4.5,2l4,3.5M534.5,567l2.5,4.5l4,3l4,3l4,3.5l4,2l3.5,4l1,4.5M724.5,706.5l-3.5,3.5l-1,5l-2.5,4.5l-4,2.5M739,693l-4.5,2.5l-3.5,3.5l-4,3l-2.5,4.5l-.5,5l2,4.5l0,5l1,5l1.5,4.5l2,5M855,320.5l1-5M847,326l4.5-2l3.5-3.5M842.5,301.5l-4-2.5M846,311l-1.5-4.5l-2-5l-3.5-3.5M843,340l0-5l2-4.5l2-4.5l1-5l-1.5-5l-.5-5l.5-5M790,550.5l4.5-2M786,547.5l4,3l2,4.5l.5,5M781.5,533l1.5,5l1.5,4.5l1.5,5l3,4l3.5,3.5l3,4l1,5M654,402.5l3-4.5l1.5-4.5l1-5M653.5,384l5,1M650.5,388l3-4l4-3l4.5-2M658.5,416l-3-4l-.5-5l-1-4.5l-2.5-4.5l-1-5l0-5l.5-5M742,531l-4.5-2.5l-5-.5l-5,0M758,519l-4,3l-4,3l-3.5,3.5l-4.5,2.5l-5,0l-5-.5M856.5,143.5l5,0l5-1M847,155l3.5-3.5l3.5-3.5l2.5-4.5l1-5l-1-5l0-5l-1.5-4.5M896.5,124.5l.5-5l-1.5-5l0-5l-2-4.5M905.5,120l2-4.5l3.5-3.5l1-5l-.5-5M887.5,128l4.5-1.5l4.5-2l5-1l4-3.5l2.5-4.5l2.5-4l3-4M808,462l5,1.5l4.5,1.5l4,3l3.5,4l3.5,3.5l3.5,3.5l1.5,4.5M499.5,217.5l-4.5-.5M516.5,208.5l-3,4l-4,3l-5,.5l-5,1.5M557,689.5M554,693l3-3.5l5-2M559,684.5l4.5,2l3.5,3.5M550.5,702.5l1-5l2.5-4.5l2.5-4l2.5-4.5l2-4.5M835.5,538.5l3.5,4l3.5,3.5l4.5,2.5l4.5,1.5l4.5,2.5l4,2.5l4.5,2M924,91l4.5-1.5l3.5-3.5l4.5-1.5l5,.5M931.5,96.5l4.5,2.5M933,101l5,.5M935.5,105.5l-2.5,4.5M928.5,92.5l3,4l1.5,4.5l2.5,4.5M933.5,93.5l4.5-2l4-2.5l5-1.5M907.5,80.5l3.5,3.5l4,2.5l4,3.5l5,1l4.5,1.5l5,1l4.5,2.5l3,3.5l3.5,3.5M521.5,786.5l-5,2.5M512,790.5l-5-.5l-4.5-1.5M528,779.5l-2.5,4l-4,3l-5,2l-4.5,2M526.5,757.5l.5-5M531,755l3.5,3.5M517,760.5l4.5-2l5-1l4.5-2.5l3-4M533,778.5l-5,1l-5-1.5l-3.5-3.5l-2.5-4l0-5l0-5l-.5-5M822,697.5l0-5l.5-5l-1-4.5l0-5l-1.5-5M810.5,656l5,1.5l4.5,1.5M806,664.5l1.5-5l3-3.5l2.5-4.5l4-3l4-3M796.5,663l-1-5l1.5-5l1.5-4.5l2-4.5l3.5-3.5M827.5,677l-3.5-3.5l-4-2.5l-4.5-2.5l-5-2l-4.5-2l-5,0l-4.5-1.5l-5-.5l-5,0l-4.5-2.5M548.5,480.5l-3,4M549,475.5l-.5,5l0,5l2.5,4M545,466.5l2,4.5l2,4.5l3.5,4l4,2.5l3,4l4,3l4,3M762,480.5l4.5,2l5,1M762,485.5l2.5,4.5l3,4M761.5,475.5l.5,5l0,5l-.5,5l-1,4.5l1,5l-.5,5l-2,4.5M762.5,817l-5,0l-5,1M763,822l-.5-5l.5-4.5l-1-5l1-5l0-5M604,104.5M609,104.5l-5,0M595.5,98.5M600.5,99.5l-5-1M615,112l-4-3l-2-4.5l-4-3l-4.5-2M939.5,202.5l-1,4.5M941.5,197.5l-2,5l-3,4l-2,4.5M949.5,220l-1.5,4.5M940.5,202.5l3,4l1,5l2.5,4.5l2.5,4M932,165l5,1.5l4,2.5l2.5,4.5l1,5l-1,4.5l-2.5,4.5l.5,5l0,5l-1,5M568,217.5l-4.5-2M565.5,221.5l-5,1.5M571.5,213.5l-3.5,4l-2.5,4M589.5,217l-4-2.5l-4.5-2.5l-5-.5l-4.5,2l-5,.5l-4.5,2M850,114.5l-3,4l-4.5,2.5l-4,3M854.5,133l-5,2M851,119l3,4l1,5l-.5,5M855,133.5l-3,3.5l-2,5l-3,3.5l-3,4M848,99.5l1.5,5l.5,5l0,5l1,4.5l1.5,5l.5,5l2,4.5l3.5,3.5M807,822.5l1.5,5l0,5M802,823l5-.5l4.5-2l5-1.5l5-1M824.5,857l-5,1M826.5,847.5l0,5l-2,4.5l-2.5,4.5M798.5,820l3.5,3l4.5,2.5l3.5,3.5l3,4l3.5,3.5l2.5,4.5l4,2.5l3.5,4M548,439.5M540.5,433l3,4.5l4.5,2M550.5,434l4.5-2.5M532,428.5l4,3l4.5,1.5l5,2l5-1l4.5,1.5M854.5,226.5l-4-2.5l-3.5-4M891.5,201l-4,3l-4,3.5l-4,2.5l-4.5,2l-4,3.5l-4,2.5l-4,3l-4.5,2.5l-4,3M715.5,342l.5-5M720.5,350.5l-2-4.5l-3-4l-1.5-5l.5-5M720.5,345.5l4.5-1.5l5-1.5l5-1l4-2.5M719,331l-4-3M721,340.5l-.5-5l-1.5-4.5l-2.5-4.5l-2-4.5l-2-4.5M715,358.5l3.5-3l2-5l0-5l.5-5l0-5l2-4.5l3.5-3.5l3-4l3.5-3.5l4.5-1.5M706,347.5l-5-1M711,347.5l-5,0l-5,.5M706.5,360l-5,1M698,365l-5,1M711,357.5l-4.5,2.5l-4.5,2l-4,3M708,379.5M704,370.5l2,4.5l2,4.5M711.5,342.5l-.5,5l1,5l-1,5l-2,4.5l-3.5,3.5l-1.5,5M745,87.5l-3.5,3.5l-4,3M749.5,85.5l-4.5,2l-5,1l-4.5,2.5l-5,.5M758,73.5l-3,4l-2,4.5l-3.5,3.5l-2.5,4.5l-3,4l-3,4l-2.5,4l-2.5,4.5l-2.5,4.5M567.5,347l-.5,5M581.5,342.5l-4.5,2l-4.5,2l-5,.5M568.5,349.5l-5,0l-5-.5l-4.5-1M538,358.5l-4,3M552.5,360.5l-4.5-2l-5-.5l-5,.5l-4.5-1.5M585,338.5l-3.5,4l-4,3l-4.5,1l-4.5,3l-3.5,3.5l-4.5,1.5l-3.5,3.5l-4.5,2.5l-5,1M710,93.5l-5,0l-5,0M713,75l1.5,4.5l-.5,5l-2,4.5l-2,4.5l-2.5,4.5M637,177.5l3,4l3,4l4.5,2.5l4.5,1.5l5-.5M637,172.5l0,5l-.5,5l1,5l-1,5l-2.5,4l-3.5,3.5l-3.5,3.5l-3,4l-4.5,2.5l-5,0M634.5,188l2-4.5M648.5,193l-4.5-2l-5-.5l-4.5-2.5l-3-4M633.5,192l-4,2.5l-5,1.5l-4,3M663,196l-5-1l-4.5-2l-5,0l-5,.5l-5-1l-5-.5l-4.5-2.5l-4-3l-4.5-2M745,82l-4.5,2l-4,3.5l-4.5,2l-4.5,2M721.5,102l-.5,5l.5,5M716.5,102l-2-4.5l-3.5-3.5M740.5,96l-4.5,1.5l-4.5,2l-5,2l-5,.5l-5,0l-4.5,1.5M736,120.5l-.5,5M738.5,111l-2.5,4.5l0,5l2.5,4.5l-.5,5M758,75.5l-4.5,1l-4,3l-4.5,2.5l-2.5,4.5l0,5l-2,4.5l-.5,5l-1,5l-.5,5l.5,5M881.5,571l-2,4.5M886.5,570.5l-5,.5l-5,1l-4.5,1.5M897.5,554l-4,3l-2.5,4.5l-1.5,5l-3,4l-3,4l-3,4l-3,4l-1,5l-1.5,4.5M579.5,294l-1.5-4.5l-.5-5l1-5l0-5M572,301l4-3.5l3.5-3.5l2-4.5l1.5-4.5l3-4.5l3.5-3l3.5-3.5l2-5M897.5,845l-3.5,3.5l-5,2M900,849.5l4,3M896.5,840l1,5l2.5,4.5l4.5,2.5M900.5,809.5l3,4l2,4.5l.5,5l-.5,5l-3,4l-3.5,3.5l-2.5,4.5M609,598.5l-5-2l-4.5-2l-4-2.5l-5-.5l-5,.5M674.5,244l-4.5,1.5l-4,3.5l-1.5,4.5M674,222.5l5,1M678,213.5l3-4.5M668,230.5l3-4l3-4l2.5-4.5l1.5-4.5M660,199l3-4l1-5M656,196.5l-5,1M666,211.5l.5-5l-2.5-4.5l-4-3l-4-2.5M682,257l-2-5l-2-4l-3.5-4l-2.5-4.5l-2-4.5l-2-4.5l-1.5-4.5l-2.5-4.5l.5-5l1.5-5M677,621l4,3l5,1l3.5,3.5l2,4.5l2.5,4l3.5,4l1,5l2,4.5M728.5,208l-1.5-5l-3-4l-4-3l-3-4M898.5,529.5l2.5-4.5M894,532l4.5-2.5l4-2.5M903,528.5l5-.5M899,531.5l4-3l4.5-2.5l5-1M889,533l5-1l5-.5l5-.5l5,.5l4.5-1M575.5,576.5l-4,3M575.5,562l1,4.5l-.5,5l-.5,5l-1.5,5M593,725l4-3M601,720.5l5,1M605.5,718.5l4,2M598,724.5l3-4l4.5-2M583,725l5-.5l5,.5l5-.5l4-2.5l5,0M660.5,814l4-2.5M650.5,811.5l5,1l5,1.5l3.5,3.5M655.5,811.5l4.5-3l3-3.5M660.5,811l1.5-4.5l1-5M670.5,811.5l4,2.5l5,2M641.5,815l4.5-1.5l4.5-2l5,0l5-.5l5,1.5l5-1M540,362.5l-4.5,2l-4.5,2l-3.5,3.5l-2,4.5l-2,4.5M543.5,366l-3.5-3.5l-3-4l-2.5-4.5l-2.5-4l-.5-5l-2-4.5l-3.5-4l-2.5-4.5l-2.5-4l-1-5M914.5,102l.5,5l2,4.5M910,100l4.5,2l4.5,2.5l5,1.5l4.5-.5l5-1M879.5,629l2.5-4l-.5-5l1-5M738.5,739.5l3.5,4l4,2.5l4.5,2.5l4.5,2.5l3.5,3M660,622.5l-1,5M666,614.5l-3,4l-3,4l-4.5,2.5M677,618l2.5,4.5M667,619.5l5-.5l5-1M672.5,627.5l4.5-2l5-1M663.5,605l1,5l1.5,4.5l1,5l2,4.5l3.5,3.5l5,1.5l3.5,3.5M619.5,530.5l-3,3.5M612.5,537l-5,0M621.5,525.5l-2,5l-2.5,4l-4.5,2.5M641.5,527l-5-.5l-5,0l-5,0l-5-1l-4.5-2l-4.5-2.5l-2-4.5l-3.5-4l-3.5-3.5M779.5,264.5l-2.5,4.5l-3.5,3.5M779,249.5l.5,5l0,5l0,5l.5,5M810,216.5l-4.5-1.5l-4-3M818,239l.5-5l-1-5l-1.5-4.5l-3.5-3.5l-2.5-4.5M774.5,247.5l4.5,2l5,1.5l5,0l4.5,2.5l5,0l4.5-1.5l4.5-2.5l4-2.5l3.5-4l3-4M903,753.5l-4-3l-4.5-1.5l-5,0l-4.5,2.5M920,781l-4.5-2l-4-3.5l-3.5-3.5l-2.5-4l-2-4.5l-1-5l.5-5l-1.5-5l-3.5-3.5l-4-3M633.5,150l-4.5-2l-5-.5M649.5,166.5l-1-5l-2-4.5l-3.5-4l-4.5-2l-5-1M907.5,251.5l-4.5-2l-4.5-2l-5-1l-5,.5l-5,0l-4.5-2l-5,.5l-5,1.5l-5,1.5M656.5,720l3.5-3.5l2.5-4.5l3-4l1.5-4.5l2-4.5l2.5-4.5l1.5-5l0-5l-.5-5M642,734l3.5,3.5l5,1.5M650.5,722l-.5-5l0-5M637,735.5l5-1.5l4-3l2.5-4.5l2-4.5M908.5,91.5l-1,4.5l-1.5,5M902.5,99.5l-5,1M916.5,86l-5,1.5l-3,4l-3.5,3.5l-2.5,4.5M802.5,97.5l4.5-2.5l4-3M793,76.5l-.5,5l0,5l2,4.5l4,3.5l4,3M816,67.5l-4.5,1.5l-5,1l-4.5,2.5l-4.5,2l-4.5,2l-4,3l-3.5,3.5l-3.5,3.5l-3.5,3.5l-3,4M888.5,108.5l3,4l4,2.5l3,4l2,5M863.5,97l2,4.5l3.5,3l4.5,3l5,1l5-.5l5,.5l4.5-1.5l4.5-2l4-3M771.5,328.5l5-2M770.5,323.5l-1-5M767.5,319.5l2.5-4.5M772.5,338.5l-.5-5l-.5-5l-1-5l-3-4l-2-4.5M765,331l1.5-4.5l1-5M780.5,350.5l-3.5-3.5l-3-4l-1.5-4.5l-3.5-4l-4-3.5l-2-4l-.5-5l2-5l0-4.5M609.5,155l1,5l-1,5l.5,5M576.5,462.5l5,0l5-1.5M572.5,459l4,3.5l4.5,2l5,1.5l4.5,1l5,.5l5-.5l4.5-2.5l3.5-3.5M591,163.5l-2.5-4M590.5,168.5l.5-5l2.5-4l.5-5M571.5,173.5l4.5-3l4.5-1.5l5,.5l5-1l4-2.5l4-3.5l3-4l2-4M748.5,616.5l-1.5,4.5l.5,5l-2,4.5M814,89l-4-3l-5-1l-4.5,1.5l-5,1.5l-5-.5l-4.5,1.5l-4,3l-2.5,4M532,470.5l3.5,3.5l3,4.5l2.5,4l0,5l2,5M899,303l4-3.5l2-4.5l.5-5l-1-5M753.5,485l4-3l4-3l5-1.5M613,627.5l4-3.5M621,645.5l-2.5-4.5l-.5-5l-1.5-4.5l-3.5-4M626.5,626.5l3.5-3l4-3.5M620.5,640.5l1.5-5l3-4l1.5-5l0-5l-.5-5M616.5,626l2-4.5l0-5l0-5l-1-5l-.5-5M627.5,615.5l4.5-2.5l3-4M617.5,616.5l5-.5l5-.5l5,1l5-1M620.5,612l5-.5l4.5,1l4.5,2.5l4.5,2.5l4.5,1M621.5,607.5l.5-5l-1.5-5l-2.5-4.5l-.5-5l-1-5M621,650.5l0-5l-.5-5l-1.5-5l-1-5l-1.5-4.5l-.5-5l1.5-4.5l3-4.5l1-4.5M581.5,86l-4,3.5l-1.5,4.5l.5,5l2,5l1,4.5M808.5,251.5l-4,3l-4,2.5l-3.5,4l-2.5,4.5M800,254.5l-4.5,2M803.5,251.5l-3.5,3l-3.5,3.5l-4,3.5l-4.5,2M789,254.5l-.5,5l-2,5l-1,4.5l-2,4.5M774.5,255.5l-3.5-3.5l-1.5-5l.5-5l.5-5M813,249.5l-4.5,2l-5,0l-4.5,1l-5,.5l-5,1.5l-5,.5l-5-.5l-4.5,1M588.5,122M588,117l.5,5l2,4.5M571,117l-4.5,2.5l-2.5,4M564.5,110l-5-.5M579.5,122.5l-4-2.5l-4.5-3l-4-3l-2.5-4M562.5,137l2,5M566,128l-.5,5l-3,4l-2.5,4.5l-3.5,3M561.5,128.5l-2.5-4l-3.5-4l-2.5-4M597,113l-4.5,1.5l-4.5,2.5l-4,3l-4.5,2.5l-4.5,1l-4,3.5l-5,1l-4.5,.5M648,459l-4-2.5M647.5,474l0-5l-.5-5l1-5l1-5M630.5,242l-4.5-1.5M645,239l-4.5,2l-5,.5l-5,.5l-5-.5M617,248.5l-4.5,1.5l-5,1.5l-5-.5M633,230.5l-4,2.5l-3.5,3.5l-4,3.5l-3,4l-1.5,4.5M662,256l-2-4.5l-2.5-4.5l-3.5-4l-4.5-1.5l-4.5-2.5l-4-3l-4.5-2l-3.5-3.5l-4-3M553.5,615l5,.5l4.5,2.5l4,2.5l4,3.5l4.5,2M595.5,733l-4,3l-2.5,4.5M587.5,716l4,3l2.5,4l.5,5l1,5l3.5,4M630.5,727l.5,5M619,717.5l5,2l3.5,3.5l3,4M578,718.5l5,0l4.5-2.5l3.5-3l5-1.5l5-.5l5,1l4,3l4,2.5l5,0M713,430.5l.5-5l0-5l1-5l2.5-4" fill="none" stroke="#bcd1fb" stroke-width=".95" stroke-linecap="round" stroke-linejoin="round"/>
<path d="M500.0,25.0L864.0,25.0L862.7,30.0L853.0,44.5L848.0,56.7L836.0,66.4L823.9,72.4L814.2,76.0L804.5,76.0L794.8,78.5L787.5,73.7L782.6,66.4L780.2,59.0L775.4,62.7L763.2,61.5L756.0,65.0L752.5,67.5L747.0,73.0L743.5,77.0L740.0,83.0L737.5,89.0L736.0,97.0L731.0,97.0L729.0,89.0L730.0,82.0L733.0,76.0L736.0,70.0L737.0,64.0L700.0,58.0L640.0,60.0L586.0,62.0L583.0,72.0L578.0,79.0L570.0,80.5L561.0,78.0L556.0,72.0L553.0,62.0L530.0,60.0L521.0,60.0L518.5,66.0L514.0,63.0L510.0,65.0L500.0,65.0Z" fill="#b7cdf9"/>
<path d="M786.3,85.8C786.9,83.0 791.3,79.9 794.8,78.5C798.2,77.1 803.5,76.7 806.9,77.3C810.3,77.9 814.1,79.5 815.4,82.1C816.7,84.8 816.1,90.0 814.7,93.1C813.2,96.1 809.0,97.9 806.9,100.3C804.8,102.8 804.5,105.8 802.0,107.6C799.6,109.4 795.0,111.7 792.3,111.3C789.7,110.8 786.5,107.8 786.3,105.2C786.1,102.6 791.1,98.7 791.1,95.5C791.1,92.3 785.7,88.6 786.3,85.8Z" fill="#b7cdf9"/>
<path d="M800.1,678.4C800.4,676.7 802.0,676.3 802.8,677.1C803.5,678.0 804.4,681.3 804.5,683.2C804.5,685.1 803.8,687.9 803.3,688.5C802.7,689.2 801.6,688.5 801.1,686.8C800.5,685.2 799.8,680.0 800.1,678.4ZM837.0,685.6C837.8,684.7 840.4,683.8 841.3,684.7C842.2,685.6 842.7,689.4 842.3,691.0C841.9,692.5 839.9,694.0 838.9,693.9C837.9,693.7 836.8,691.4 836.5,690.0C836.2,688.6 836.2,686.5 837.0,685.6ZM742.6,483.4C744.0,482.1 749.7,480.4 752.3,480.2C754.9,480.0 758.7,481.1 758.4,482.1C758.1,483.2 752.6,484.8 750.6,486.3C748.7,487.8 747.9,490.9 746.7,491.1C745.6,491.4 744.5,489.0 743.8,487.7C743.1,486.4 741.2,484.6 742.6,483.4Z" fill="#b7d0fb"/>
<path d="M733.5,96C731,108 728,122 726,138S722,160 721,172 722,190 719,202 712,220 707,230" fill="none" stroke="#b7cdf9" stroke-width="2"/>
<path d="M766.9,68.8C767.1,71.2 767.5,79.3 768.1,83.4C768.7,87.4 770.7,89.8 770.5,93.1C770.3,96.3 767.3,98.7 766.9,102.8C766.5,106.8 767.9,114.9 768.1,117.3M759.6,127.0C760.2,128.2 761.8,131.7 763.2,134.3C764.6,136.9 767.3,141.4 768.1,142.8M782.6,156.1L794.8,163.4M806.9,175.5C807.2,176.7 808.7,180.2 808.8,182.8C808.9,185.4 807.6,189.9 807.4,191.3M816.6,207.1L831.1,209.0M848.1,201.0L860.2,194.4M870.0,188.1C873.6,187.3 886.1,184.6 891.8,183.3C897.4,182.0 901.9,180.9 903.9,180.4M906.3,187.7C907.1,190.5 910.0,200.2 911.2,204.6C912.4,209.1 913.2,212.7 913.6,214.3M902.7,222.8L908.8,225.2M906.3,239.7C906.9,240.9 909.2,244.6 910.0,247.0C910.8,249.4 911.0,253.0 911.2,254.3M913.6,266.4C914.2,267.6 916.4,271.6 917.2,273.7C918.1,275.7 918.3,277.7 918.5,278.5M916.0,293.1C916.2,294.7 917.3,299.5 917.2,302.8C917.2,306.0 915.8,310.8 915.5,312.5M896.6,319.7C895.8,320.8 893.4,324.2 891.8,325.8C890.2,327.4 887.7,328.8 886.9,329.4M828.7,310.0C827.7,310.8 824.3,312.9 822.7,314.9C821.0,316.9 819.6,321.0 819.0,322.2M845.7,312.5C846.7,313.5 849.7,316.9 851.8,318.5C853.8,320.1 856.8,321.6 857.8,322.2M814.2,339.1C813.8,340.8 812.3,346.0 811.7,348.8C811.1,351.7 810.7,354.9 810.5,356.1M867.5,327.0L868.7,328.2M872.4,334.3L876.0,334.3M834.8,308.8L835.5,310.0M814.2,329.4L814.4,330.7M813.7,367.0L813.9,368.2M814.2,409.5L823.9,413.1M848.1,422.8L857.8,425.2M889.4,449.4C890.4,449.8 893.4,450.6 895.4,451.8C897.4,453.0 900.5,455.9 901.5,456.7M920.9,456.7C921.4,457.5 923.0,459.9 923.8,461.5C924.6,463.1 925.4,465.6 925.7,466.4M928.2,477.3L929.6,478.5M879.7,432.4L882.1,434.9" fill="none" stroke="#9c9c9c" stroke-width="2.3" stroke-dasharray="9 3 1.8 3" stroke-linecap="butt" stroke-linejoin="round"/>
<path d="M620.4,100.3C620.8,101.5 622.2,105.2 622.8,107.6C623.4,110.0 623.0,111.7 624.0,114.9C625.0,118.1 626.8,124.0 628.8,127.0C630.9,130.0 633.3,131.7 636.1,133.1C639.0,134.5 642.6,134.9 645.8,135.5C649.1,136.1 652.7,136.7 655.5,136.7C658.4,136.7 660.0,134.7 662.8,135.5C665.6,136.3 669.2,140.2 672.5,141.6C675.8,142.9 679.1,142.3 682.7,143.5C686.3,144.7 690.8,147.1 694.3,148.8C697.9,150.5 701.2,151.7 704.0,153.7C706.9,155.7 709.3,158.1 711.3,161.0C713.3,163.8 714.9,167.4 716.2,170.7C717.5,173.9 718.4,176.3 719.1,180.4C719.7,184.4 719.9,192.5 720.0,194.9M719.9,183.6C719.9,185.5 720.1,191.6 719.9,195.0C719.8,198.4 719.0,202.5 718.8,204.0M517.3,71.2L520.9,78.5M906.3,30.0C905.5,31.6 903.1,35.7 901.5,39.7C899.9,43.7 899.1,51.2 896.6,54.3C894.2,57.3 891.0,56.7 886.9,57.9C882.9,59.1 877.2,60.3 872.4,61.5C867.5,62.7 862.7,64.2 857.8,65.2C853.0,66.2 846.9,66.6 843.3,67.6C839.6,68.6 838.4,69.6 836.0,71.2C833.6,72.8 830.9,75.5 828.7,77.3C826.5,79.1 824.3,79.9 822.7,82.1C821.0,84.4 820.0,87.6 819.0,90.6C818.0,93.7 817.4,97.5 816.6,100.3C815.8,103.2 816.6,105.2 814.2,107.6C811.7,110.0 805.3,113.3 802.0,114.9C798.8,116.5 798.0,116.1 794.8,117.3C791.5,118.5 786.7,120.1 782.6,122.2C778.6,124.2 774.1,126.6 770.5,129.4C766.9,132.3 763.6,135.5 760.8,139.1C758.0,142.8 756.0,147.6 753.5,151.3C751.1,154.9 749.5,158.7 746.3,161.0C743.0,163.2 738.2,163.8 734.1,164.6C730.1,165.4 724.0,165.6 722.0,165.8M794.8,117.3C796.0,118.9 798.4,124.8 802.0,127.0C805.7,129.2 812.5,130.5 816.6,130.7C820.6,130.9 822.7,127.6 826.3,128.2C829.9,128.8 834.8,132.7 838.4,134.3C842.1,135.9 845.3,135.9 848.1,137.9C851.0,140.0 853.8,144.2 855.4,146.4C857.0,148.6 857.2,148.0 857.8,151.3C858.4,154.5 858.6,161.0 859.0,165.8C859.4,170.7 859.2,175.5 860.2,180.4C861.3,185.2 863.9,190.1 865.1,194.9C866.3,199.8 866.7,205.0 867.5,209.5C868.3,213.9 869.3,218.2 870.0,221.6C870.6,225.0 871.0,228.7 871.2,230.1M857.8,148.8C860.2,148.2 867.5,146.2 872.4,145.2C877.2,144.2 883.2,143.8 886.9,142.8C890.6,141.8 891.5,141.0 894.7,139.1C897.9,137.3 903.6,134.7 906.3,131.9C909.1,129.0 909.6,125.0 911.2,122.2C912.8,119.3 912.2,116.9 916.0,114.9C919.8,112.9 931.0,110.8 934.0,110.0M722.0,185.2C723.2,187.7 726.9,194.9 729.3,199.8C731.7,204.6 734.1,210.3 736.6,214.3C739.0,218.4 742.2,221.4 743.8,224.0C745.4,226.7 745.8,229.1 746.3,230.1M510.0,244.9C510.0,243.4 509.2,238.7 510.0,235.8C510.8,233.0 512.6,229.4 514.5,227.9C516.4,226.4 518.7,225.8 521.3,226.7C524.0,227.7 527.4,230.9 530.4,233.5C533.5,236.2 536.7,240.5 539.5,242.6C542.3,244.7 544.4,246.4 547.4,246.0C550.5,245.7 554.8,242.8 557.7,240.4C560.5,237.9 561.4,235.1 564.5,231.3C567.5,227.5 572.0,221.8 575.8,217.7C579.6,213.5 583.8,208.0 587.2,206.3C590.6,204.6 593.4,206.5 596.2,207.4C599.1,208.4 601.5,209.5 604.2,212.0C606.8,214.4 609.3,219.4 612.1,222.2C615.0,225.0 617.8,226.9 621.2,229.0C624.6,231.1 629.2,232.4 632.6,234.7C636.0,237.0 638.6,240.0 641.6,242.6C644.7,245.3 647.7,248.1 650.7,250.6C653.7,253.0 656.8,256.4 659.8,257.4C662.8,258.3 665.5,257.0 668.9,256.2C672.3,255.5 676.8,254.0 680.2,252.8C683.6,251.7 686.3,251.1 689.3,249.4C692.3,247.7 695.0,244.3 698.4,242.6C701.8,240.9 705.8,240.2 709.7,239.2C713.7,238.3 719.9,237.3 722.0,237.0M547.4,246.0C547.9,247.4 550.0,251.3 550.7,254.3C551.5,257.2 551.4,259.9 551.7,264.0C552.0,268.0 552.5,273.3 552.4,278.5C552.4,283.8 551.4,290.6 551.2,295.5C551.1,300.3 550.7,304.4 551.7,307.6C552.7,310.8 555.2,312.5 557.3,314.9C559.4,317.3 562.3,319.7 564.6,322.2C566.8,324.6 568.8,326.6 570.6,329.4C572.5,332.3 573.5,336.5 575.5,339.1C577.5,341.8 579.9,344.8 582.8,345.2C585.6,345.6 588.4,342.8 592.5,341.6C596.5,340.4 602.2,338.9 607.0,337.9C611.9,336.9 616.7,335.7 621.6,335.5C626.4,335.3 631.3,336.9 636.1,336.7C641.0,336.5 646.6,335.3 650.7,334.3C654.7,333.3 657.1,331.7 660.4,330.7C663.6,329.6 668.5,328.6 670.1,328.2M671.7,329.7C673.6,328.6 679.5,323.4 682.8,322.8C686.1,322.2 688.5,324.3 691.4,326.3C694.3,328.3 698.1,332.0 700.0,334.8C701.9,337.6 700.5,340.7 702.5,343.4C704.5,346.1 708.7,349.0 712.0,351.0C715.3,353.0 719.4,353.8 722.2,355.4C725.0,357.0 726.1,358.2 729.0,360.5C731.9,362.8 735.7,365.9 739.4,369.0C743.1,372.1 748.0,376.8 751.4,379.4C754.8,382.0 757.2,382.4 760.0,384.5C762.8,386.6 764.7,389.4 768.0,392.0C771.3,394.6 778.0,398.7 780.0,400.0M722.0,234.9C724.4,234.4 732.1,233.0 736.6,232.4C741.0,231.8 745.0,230.6 748.7,231.2C752.3,231.8 755.8,233.8 758.4,236.1C761.0,238.3 763.2,241.1 764.4,244.6C765.7,248.0 764.6,252.6 765.7,256.7C766.7,260.7 769.1,266.0 770.5,268.8C771.9,271.6 770.1,274.1 774.1,273.7C778.2,273.3 788.1,268.0 794.8,266.4C801.4,264.8 809.3,265.6 814.2,264.0C819.0,262.3 820.6,258.7 823.9,256.7C827.1,254.7 831.1,254.7 833.6,251.8C836.0,249.0 837.2,243.3 838.4,239.7C839.6,236.1 840.4,231.6 840.8,230.0M833.6,251.8C836.0,253.0 843.3,256.7 848.1,259.1C853.0,261.5 858.8,264.2 862.7,266.4C866.5,268.6 868.7,270.0 871.2,272.4C873.6,274.9 875.4,277.1 877.2,280.9C879.0,284.8 879.7,292.3 882.1,295.5C884.5,298.7 888.5,299.7 891.8,300.3C895.0,300.9 898.7,297.9 901.5,299.1C904.3,300.3 907.3,303.8 908.8,307.6C910.2,311.5 909.2,317.3 910.0,322.2C910.8,327.0 912.2,331.9 913.6,336.7C915.0,341.6 916.4,346.4 918.5,351.3C920.5,356.1 923.7,361.4 925.7,365.8C927.8,370.3 929.4,373.9 930.6,378.0C931.8,382.0 934.2,387.2 933.0,390.1C931.8,392.9 927.8,393.7 923.3,394.9C918.9,396.1 911.6,396.5 906.3,397.4C901.1,398.2 896.6,399.2 891.8,399.8C886.9,400.4 879.7,400.8 877.2,401.0M934.0,285.8L930.6,276.1M510.0,551.3C510.4,548.4 510.8,538.3 512.4,534.3C514.0,530.3 516.9,528.4 519.7,527.0C522.5,525.6 526.6,525.2 529.4,525.8C532.2,526.4 533.8,529.6 536.7,530.7C539.5,531.7 543.1,530.9 546.4,531.9C549.6,532.9 552.4,535.4 556.1,536.7C559.7,538.0 563.8,540.8 568.2,539.6C572.7,538.4 578.7,531.9 582.8,529.4C586.8,526.9 589.8,527.0 592.5,524.6C595.1,522.2 595.3,517.7 598.5,514.9C601.8,512.1 608.4,510.0 611.9,507.6C615.3,505.2 615.9,502.8 619.1,500.3C622.4,497.9 627.6,495.7 631.3,493.1C634.9,490.4 637.7,487.6 641.0,484.6C644.2,481.5 647.4,477.3 650.7,474.9C653.9,472.4 656.7,470.0 660.4,470.0C664.0,470.0 667.7,473.1 672.5,474.9C677.4,476.7 684.6,479.1 689.5,480.9C694.3,482.8 699.6,485.0 701.6,485.8M510.0,579.2C511.2,580.2 514.9,582.2 517.3,585.2C519.7,588.3 522.5,593.3 524.6,597.4C526.6,601.4 527.8,605.4 529.4,609.5C531.0,613.5 533.0,618.2 534.3,621.6C535.5,625.0 536.3,628.7 536.7,630.1M510.0,468.8L511.2,478.5M701.6,485.8C702.3,486.6 705.1,487.4 706.0,490.6C706.9,493.8 707.0,498.4 707.0,505.0C707.0,511.6 705.8,522.5 706.0,530.0C706.2,537.5 706.3,547.5 708.0,550.0C709.7,552.5 712.9,547.6 716.0,545.0C719.1,542.4 723.4,536.9 726.9,534.3C730.3,531.7 734.1,530.9 736.6,529.4C739.0,528.0 739.4,525.0 741.4,525.8C743.4,526.6 746.3,534.5 748.7,534.3C751.1,534.1 753.3,527.8 756.0,524.6C758.6,521.4 761.4,518.5 764.4,514.9C767.5,511.3 771.5,506.0 774.1,502.8C776.8,499.5 776.8,496.9 780.2,495.5C783.6,494.1 789.9,494.1 794.8,494.3C799.6,494.5 805.3,496.5 809.3,496.7C813.4,496.9 816.2,497.1 819.0,495.5C821.8,493.9 824.3,489.8 826.3,487.0C828.3,484.2 828.3,480.9 831.1,478.5C834.0,476.1 838.8,473.9 843.3,472.4C847.7,471.0 852.4,470.4 857.8,470.0C863.3,469.6 873.0,470.0 876.0,470.0M828.7,485.8C830.3,487.4 837.2,492.7 838.4,495.5C839.6,498.3 837.6,500.7 836.0,502.8C834.4,504.8 830.7,504.8 828.7,507.6C826.7,510.4 825.3,515.7 823.9,519.7C822.5,523.8 820.6,527.8 820.2,531.9C819.8,535.9 821.6,540.4 821.4,544.0C821.2,547.6 819.8,550.1 819.0,553.7C818.2,557.3 817.3,561.9 816.6,565.8C815.9,569.7 815.3,573.2 814.7,577.2C814.0,581.3 814.2,585.5 813.0,590.1C811.7,594.6 809.5,600.2 806.9,604.6C804.3,609.1 800.0,612.5 797.2,616.8C794.4,621.0 791.1,627.9 789.9,630.1M877.2,432.4C879.7,434.0 887.7,440.9 891.8,442.1C895.8,443.3 897.4,440.9 901.5,439.7C905.5,438.5 910.6,436.1 916.0,434.9C921.5,433.6 931.0,432.8 934.0,432.4M877.2,461.5C878.8,460.3 884.5,457.1 886.9,454.3C889.4,451.4 891.0,446.2 891.8,444.6M872.4,630.1C872.8,627.5 873.2,619.4 874.8,614.3C876.4,609.3 879.2,604.6 882.1,599.8C884.9,594.9 888.5,589.7 891.8,585.2C895.0,580.8 897.8,575.9 901.5,573.1C905.1,570.3 910.0,568.9 913.6,568.2C917.2,567.6 919.9,569.9 923.3,569.5C926.7,569.1 932.2,566.4 934.0,565.8M923.3,569.5C924.5,571.3 928.8,577.7 930.6,580.4C932.4,583.0 933.4,584.4 934.0,585.2M711.0,470.0C712.3,467.5 716.3,459.0 719.0,455.0C721.7,451.0 724.2,450.4 727.0,446.0C729.8,441.6 734.1,433.4 736.0,428.5C737.9,423.6 736.6,420.0 738.5,416.5C740.4,413.0 744.4,411.0 747.5,407.5C750.6,404.0 754.6,398.8 757.0,395.5C759.4,392.2 761.2,389.2 762.0,388.0M694.3,646.8C693.9,648.4 692.9,652.9 691.9,656.5C690.9,660.2 688.8,664.4 688.3,668.7C687.7,672.9 689.4,677.6 688.8,682.0C688.1,686.4 685.7,691.9 684.6,695.3C683.5,698.8 682.4,698.2 682.2,702.6C682.0,707.1 683.0,715.5 683.4,722.0C683.8,728.5 684.6,735.0 684.6,741.4C684.6,747.9 684.6,756.4 683.4,760.8C682.2,765.3 679.6,764.1 677.4,768.1C675.1,772.1 671.7,779.8 670.1,785.1C668.5,790.3 668.5,794.8 667.7,799.6C666.8,804.5 666.0,809.9 665.2,814.2C664.4,818.4 663.2,823.3 662.8,825.1M537.9,625.0C538.3,627.0 540.9,632.7 540.3,637.1C539.7,641.6 536.5,647.2 534.3,651.7C532.0,656.1 529.0,660.2 527.0,663.8C525.0,667.4 524.1,670.3 522.1,673.5C520.1,676.7 516.9,679.6 514.9,683.2C512.8,686.8 510.8,693.3 510.0,695.3M541.5,739.0C540.3,741.0 535.3,745.9 534.3,751.1C533.2,756.4 535.7,764.1 535.5,770.5C535.3,777.0 533.2,783.5 533.0,789.9C532.8,796.4 533.2,803.5 534.3,809.3C535.3,815.2 538.3,822.5 539.1,825.1M789.9,625.0C789.5,627.0 786.7,633.5 787.5,637.1C788.3,640.8 791.5,644.4 794.8,646.8C798.0,649.3 804.1,649.3 806.9,651.7C809.7,654.1 810.7,657.7 811.7,661.4C812.8,665.0 811.7,669.9 813.0,673.5C814.2,677.1 816.4,680.8 819.0,683.2C821.6,685.6 826.7,686.0 828.7,688.1C830.7,690.1 829.1,692.9 831.1,695.3C833.2,697.8 838.4,699.8 840.8,702.6C843.3,705.4 844.5,709.1 845.7,712.3C846.9,715.5 846.5,719.2 848.1,722.0C849.7,724.8 853.2,726.9 855.4,729.3C857.6,731.7 860.5,735.4 861.5,736.6M874.8,625.0C876.0,627.0 880.5,633.1 882.1,637.1C883.7,641.2 885.3,645.2 884.5,649.3C883.7,653.3 880.1,657.7 877.2,661.4C874.4,665.0 870.2,667.4 867.5,671.1C864.9,674.7 862.3,679.2 861.5,683.2C860.7,687.3 861.7,691.3 862.7,695.3C863.7,699.4 866.3,703.0 867.5,707.5C868.7,711.9 870.2,717.6 870.0,722.0C869.7,726.5 867.9,731.3 866.3,734.1C864.7,737.0 862.1,736.2 860.2,739.0C858.4,741.8 856.4,746.7 855.4,751.1C854.4,755.6 855.4,761.2 854.2,765.7C853.0,770.1 849.9,774.6 848.1,777.8C846.3,781.0 844.1,783.9 843.3,785.1M934.0,722.0C933.0,723.6 930.3,728.1 928.2,731.7C926.0,735.4 924.1,739.6 920.9,743.8C917.7,748.1 912.4,753.1 908.8,757.2C905.1,761.2 902.3,764.7 899.1,768.1C895.8,771.5 893.0,775.0 889.4,777.8C885.7,780.6 880.9,782.9 877.2,785.1C873.6,787.3 869.1,790.1 867.5,791.1M777.8,825.1C779.4,824.1 784.7,820.4 787.5,819.0C790.3,817.6 793.5,817.0 794.8,816.6" fill="none" stroke="#f4c883" stroke-width="3.4" stroke-linecap="round" stroke-linejoin="round"/>
<path d="M620.4,100.3C620.8,101.5 622.2,105.2 622.8,107.6C623.4,110.0 623.0,111.7 624.0,114.9C625.0,118.1 626.8,124.0 628.8,127.0C630.9,130.0 633.3,131.7 636.1,133.1C639.0,134.5 642.6,134.9 645.8,135.5C649.1,136.1 652.7,136.7 655.5,136.7C658.4,136.7 660.0,134.7 662.8,135.5C665.6,136.3 669.2,140.2 672.5,141.6C675.8,142.9 679.1,142.3 682.7,143.5C686.3,144.7 690.8,147.1 694.3,148.8C697.9,150.5 701.2,151.7 704.0,153.7C706.9,155.7 709.3,158.1 711.3,161.0C713.3,163.8 714.9,167.4 716.2,170.7C717.5,173.9 718.4,176.3 719.1,180.4C719.7,184.4 719.9,192.5 720.0,194.9M719.9,183.6C719.9,185.5 720.1,191.6 719.9,195.0C719.8,198.4 719.0,202.5 718.8,204.0M517.3,71.2L520.9,78.5M906.3,30.0C905.5,31.6 903.1,35.7 901.5,39.7C899.9,43.7 899.1,51.2 896.6,54.3C894.2,57.3 891.0,56.7 886.9,57.9C882.9,59.1 877.2,60.3 872.4,61.5C867.5,62.7 862.7,64.2 857.8,65.2C853.0,66.2 846.9,66.6 843.3,67.6C839.6,68.6 838.4,69.6 836.0,71.2C833.6,72.8 830.9,75.5 828.7,77.3C826.5,79.1 824.3,79.9 822.7,82.1C821.0,84.4 820.0,87.6 819.0,90.6C818.0,93.7 817.4,97.5 816.6,100.3C815.8,103.2 816.6,105.2 814.2,107.6C811.7,110.0 805.3,113.3 802.0,114.9C798.8,116.5 798.0,116.1 794.8,117.3C791.5,118.5 786.7,120.1 782.6,122.2C778.6,124.2 774.1,126.6 770.5,129.4C766.9,132.3 763.6,135.5 760.8,139.1C758.0,142.8 756.0,147.6 753.5,151.3C751.1,154.9 749.5,158.7 746.3,161.0C743.0,163.2 738.2,163.8 734.1,164.6C730.1,165.4 724.0,165.6 722.0,165.8M794.8,117.3C796.0,118.9 798.4,124.8 802.0,127.0C805.7,129.2 812.5,130.5 816.6,130.7C820.6,130.9 822.7,127.6 826.3,128.2C829.9,128.8 834.8,132.7 838.4,134.3C842.1,135.9 845.3,135.9 848.1,137.9C851.0,140.0 853.8,144.2 855.4,146.4C857.0,148.6 857.2,148.0 857.8,151.3C858.4,154.5 858.6,161.0 859.0,165.8C859.4,170.7 859.2,175.5 860.2,180.4C861.3,185.2 863.9,190.1 865.1,194.9C866.3,199.8 866.7,205.0 867.5,209.5C868.3,213.9 869.3,218.2 870.0,221.6C870.6,225.0 871.0,228.7 871.2,230.1M857.8,148.8C860.2,148.2 867.5,146.2 872.4,145.2C877.2,144.2 883.2,143.8 886.9,142.8C890.6,141.8 891.5,141.0 894.7,139.1C897.9,137.3 903.6,134.7 906.3,131.9C909.1,129.0 909.6,125.0 911.2,122.2C912.8,119.3 912.2,116.9 916.0,114.9C919.8,112.9 931.0,110.8 934.0,110.0M722.0,185.2C723.2,187.7 726.9,194.9 729.3,199.8C731.7,204.6 734.1,210.3 736.6,214.3C739.0,218.4 742.2,221.4 743.8,224.0C745.4,226.7 745.8,229.1 746.3,230.1M510.0,244.9C510.0,243.4 509.2,238.7 510.0,235.8C510.8,233.0 512.6,229.4 514.5,227.9C516.4,226.4 518.7,225.8 521.3,226.7C524.0,227.7 527.4,230.9 530.4,233.5C533.5,236.2 536.7,240.5 539.5,242.6C542.3,244.7 544.4,246.4 547.4,246.0C550.5,245.7 554.8,242.8 557.7,240.4C560.5,237.9 561.4,235.1 564.5,231.3C567.5,227.5 572.0,221.8 575.8,217.7C579.6,213.5 583.8,208.0 587.2,206.3C590.6,204.6 593.4,206.5 596.2,207.4C599.1,208.4 601.5,209.5 604.2,212.0C606.8,214.4 609.3,219.4 612.1,222.2C615.0,225.0 617.8,226.9 621.2,229.0C624.6,231.1 629.2,232.4 632.6,234.7C636.0,237.0 638.6,240.0 641.6,242.6C644.7,245.3 647.7,248.1 650.7,250.6C653.7,253.0 656.8,256.4 659.8,257.4C662.8,258.3 665.5,257.0 668.9,256.2C672.3,255.5 676.8,254.0 680.2,252.8C683.6,251.7 686.3,251.1 689.3,249.4C692.3,247.7 695.0,244.3 698.4,242.6C701.8,240.9 705.8,240.2 709.7,239.2C713.7,238.3 719.9,237.3 722.0,237.0M547.4,246.0C547.9,247.4 550.0,251.3 550.7,254.3C551.5,257.2 551.4,259.9 551.7,264.0C552.0,268.0 552.5,273.3 552.4,278.5C552.4,283.8 551.4,290.6 551.2,295.5C551.1,300.3 550.7,304.4 551.7,307.6C552.7,310.8 555.2,312.5 557.3,314.9C559.4,317.3 562.3,319.7 564.6,322.2C566.8,324.6 568.8,326.6 570.6,329.4C572.5,332.3 573.5,336.5 575.5,339.1C577.5,341.8 579.9,344.8 582.8,345.2C585.6,345.6 588.4,342.8 592.5,341.6C596.5,340.4 602.2,338.9 607.0,337.9C611.9,336.9 616.7,335.7 621.6,335.5C626.4,335.3 631.3,336.9 636.1,336.7C641.0,336.5 646.6,335.3 650.7,334.3C654.7,333.3 657.1,331.7 660.4,330.7C663.6,329.6 668.5,328.6 670.1,328.2M671.7,329.7C673.6,328.6 679.5,323.4 682.8,322.8C686.1,322.2 688.5,324.3 691.4,326.3C694.3,328.3 698.1,332.0 700.0,334.8C701.9,337.6 700.5,340.7 702.5,343.4C704.5,346.1 708.7,349.0 712.0,351.0C715.3,353.0 719.4,353.8 722.2,355.4C725.0,357.0 726.1,358.2 729.0,360.5C731.9,362.8 735.7,365.9 739.4,369.0C743.1,372.1 748.0,376.8 751.4,379.4C754.8,382.0 757.2,382.4 760.0,384.5C762.8,386.6 764.7,389.4 768.0,392.0C771.3,394.6 778.0,398.7 780.0,400.0M722.0,234.9C724.4,234.4 732.1,233.0 736.6,232.4C741.0,231.8 745.0,230.6 748.7,231.2C752.3,231.8 755.8,233.8 758.4,236.1C761.0,238.3 763.2,241.1 764.4,244.6C765.7,248.0 764.6,252.6 765.7,256.7C766.7,260.7 769.1,266.0 770.5,268.8C771.9,271.6 770.1,274.1 774.1,273.7C778.2,273.3 788.1,268.0 794.8,266.4C801.4,264.8 809.3,265.6 814.2,264.0C819.0,262.3 820.6,258.7 823.9,256.7C827.1,254.7 831.1,254.7 833.6,251.8C836.0,249.0 837.2,243.3 838.4,239.7C839.6,236.1 840.4,231.6 840.8,230.0M833.6,251.8C836.0,253.0 843.3,256.7 848.1,259.1C853.0,261.5 858.8,264.2 862.7,266.4C866.5,268.6 868.7,270.0 871.2,272.4C873.6,274.9 875.4,277.1 877.2,280.9C879.0,284.8 879.7,292.3 882.1,295.5C884.5,298.7 888.5,299.7 891.8,300.3C895.0,300.9 898.7,297.9 901.5,299.1C904.3,300.3 907.3,303.8 908.8,307.6C910.2,311.5 909.2,317.3 910.0,322.2C910.8,327.0 912.2,331.9 913.6,336.7C915.0,341.6 916.4,346.4 918.5,351.3C920.5,356.1 923.7,361.4 925.7,365.8C927.8,370.3 929.4,373.9 930.6,378.0C931.8,382.0 934.2,387.2 933.0,390.1C931.8,392.9 927.8,393.7 923.3,394.9C918.9,396.1 911.6,396.5 906.3,397.4C901.1,398.2 896.6,399.2 891.8,399.8C886.9,400.4 879.7,400.8 877.2,401.0M934.0,285.8L930.6,276.1M510.0,551.3C510.4,548.4 510.8,538.3 512.4,534.3C514.0,530.3 516.9,528.4 519.7,527.0C522.5,525.6 526.6,525.2 529.4,525.8C532.2,526.4 533.8,529.6 536.7,530.7C539.5,531.7 543.1,530.9 546.4,531.9C549.6,532.9 552.4,535.4 556.1,536.7C559.7,538.0 563.8,540.8 568.2,539.6C572.7,538.4 578.7,531.9 582.8,529.4C586.8,526.9 589.8,527.0 592.5,524.6C595.1,522.2 595.3,517.7 598.5,514.9C601.8,512.1 608.4,510.0 611.9,507.6C615.3,505.2 615.9,502.8 619.1,500.3C622.4,497.9 627.6,495.7 631.3,493.1C634.9,490.4 637.7,487.6 641.0,484.6C644.2,481.5 647.4,477.3 650.7,474.9C653.9,472.4 656.7,470.0 660.4,470.0C664.0,470.0 667.7,473.1 672.5,474.9C677.4,476.7 684.6,479.1 689.5,480.9C694.3,482.8 699.6,485.0 701.6,485.8M510.0,579.2C511.2,580.2 514.9,582.2 517.3,585.2C519.7,588.3 522.5,593.3 524.6,597.4C526.6,601.4 527.8,605.4 529.4,609.5C531.0,613.5 533.0,618.2 534.3,621.6C535.5,625.0 536.3,628.7 536.7,630.1M510.0,468.8L511.2,478.5M701.6,485.8C702.3,486.6 705.1,487.4 706.0,490.6C706.9,493.8 707.0,498.4 707.0,505.0C707.0,511.6 705.8,522.5 706.0,530.0C706.2,537.5 706.3,547.5 708.0,550.0C709.7,552.5 712.9,547.6 716.0,545.0C719.1,542.4 723.4,536.9 726.9,534.3C730.3,531.7 734.1,530.9 736.6,529.4C739.0,528.0 739.4,525.0 741.4,525.8C743.4,526.6 746.3,534.5 748.7,534.3C751.1,534.1 753.3,527.8 756.0,524.6C758.6,521.4 761.4,518.5 764.4,514.9C767.5,511.3 771.5,506.0 774.1,502.8C776.8,499.5 776.8,496.9 780.2,495.5C783.6,494.1 789.9,494.1 794.8,494.3C799.6,494.5 805.3,496.5 809.3,496.7C813.4,496.9 816.2,497.1 819.0,495.5C821.8,493.9 824.3,489.8 826.3,487.0C828.3,484.2 828.3,480.9 831.1,478.5C834.0,476.1 838.8,473.9 843.3,472.4C847.7,471.0 852.4,470.4 857.8,470.0C863.3,469.6 873.0,470.0 876.0,470.0M828.7,485.8C830.3,487.4 837.2,492.7 838.4,495.5C839.6,498.3 837.6,500.7 836.0,502.8C834.4,504.8 830.7,504.8 828.7,507.6C826.7,510.4 825.3,515.7 823.9,519.7C822.5,523.8 820.6,527.8 820.2,531.9C819.8,535.9 821.6,540.4 821.4,544.0C821.2,547.6 819.8,550.1 819.0,553.7C818.2,557.3 817.3,561.9 816.6,565.8C815.9,569.7 815.3,573.2 814.7,577.2C814.0,581.3 814.2,585.5 813.0,590.1C811.7,594.6 809.5,600.2 806.9,604.6C804.3,609.1 800.0,612.5 797.2,616.8C794.4,621.0 791.1,627.9 789.9,630.1M877.2,432.4C879.7,434.0 887.7,440.9 891.8,442.1C895.8,443.3 897.4,440.9 901.5,439.7C905.5,438.5 910.6,436.1 916.0,434.9C921.5,433.6 931.0,432.8 934.0,432.4M877.2,461.5C878.8,460.3 884.5,457.1 886.9,454.3C889.4,451.4 891.0,446.2 891.8,444.6M872.4,630.1C872.8,627.5 873.2,619.4 874.8,614.3C876.4,609.3 879.2,604.6 882.1,599.8C884.9,594.9 888.5,589.7 891.8,585.2C895.0,580.8 897.8,575.9 901.5,573.1C905.1,570.3 910.0,568.9 913.6,568.2C917.2,567.6 919.9,569.9 923.3,569.5C926.7,569.1 932.2,566.4 934.0,565.8M923.3,569.5C924.5,571.3 928.8,577.7 930.6,580.4C932.4,583.0 933.4,584.4 934.0,585.2M711.0,470.0C712.3,467.5 716.3,459.0 719.0,455.0C721.7,451.0 724.2,450.4 727.0,446.0C729.8,441.6 734.1,433.4 736.0,428.5C737.9,423.6 736.6,420.0 738.5,416.5C740.4,413.0 744.4,411.0 747.5,407.5C750.6,404.0 754.6,398.8 757.0,395.5C759.4,392.2 761.2,389.2 762.0,388.0M694.3,646.8C693.9,648.4 692.9,652.9 691.9,656.5C690.9,660.2 688.8,664.4 688.3,668.7C687.7,672.9 689.4,677.6 688.8,682.0C688.1,686.4 685.7,691.9 684.6,695.3C683.5,698.8 682.4,698.2 682.2,702.6C682.0,707.1 683.0,715.5 683.4,722.0C683.8,728.5 684.6,735.0 684.6,741.4C684.6,747.9 684.6,756.4 683.4,760.8C682.2,765.3 679.6,764.1 677.4,768.1C675.1,772.1 671.7,779.8 670.1,785.1C668.5,790.3 668.5,794.8 667.7,799.6C666.8,804.5 666.0,809.9 665.2,814.2C664.4,818.4 663.2,823.3 662.8,825.1M537.9,625.0C538.3,627.0 540.9,632.7 540.3,637.1C539.7,641.6 536.5,647.2 534.3,651.7C532.0,656.1 529.0,660.2 527.0,663.8C525.0,667.4 524.1,670.3 522.1,673.5C520.1,676.7 516.9,679.6 514.9,683.2C512.8,686.8 510.8,693.3 510.0,695.3M541.5,739.0C540.3,741.0 535.3,745.9 534.3,751.1C533.2,756.4 535.7,764.1 535.5,770.5C535.3,777.0 533.2,783.5 533.0,789.9C532.8,796.4 533.2,803.5 534.3,809.3C535.3,815.2 538.3,822.5 539.1,825.1M789.9,625.0C789.5,627.0 786.7,633.5 787.5,637.1C788.3,640.8 791.5,644.4 794.8,646.8C798.0,649.3 804.1,649.3 806.9,651.7C809.7,654.1 810.7,657.7 811.7,661.4C812.8,665.0 811.7,669.9 813.0,673.5C814.2,677.1 816.4,680.8 819.0,683.2C821.6,685.6 826.7,686.0 828.7,688.1C830.7,690.1 829.1,692.9 831.1,695.3C833.2,697.8 838.4,699.8 840.8,702.6C843.3,705.4 844.5,709.1 845.7,712.3C846.9,715.5 846.5,719.2 848.1,722.0C849.7,724.8 853.2,726.9 855.4,729.3C857.6,731.7 860.5,735.4 861.5,736.6M874.8,625.0C876.0,627.0 880.5,633.1 882.1,637.1C883.7,641.2 885.3,645.2 884.5,649.3C883.7,653.3 880.1,657.7 877.2,661.4C874.4,665.0 870.2,667.4 867.5,671.1C864.9,674.7 862.3,679.2 861.5,683.2C860.7,687.3 861.7,691.3 862.7,695.3C863.7,699.4 866.3,703.0 867.5,707.5C868.7,711.9 870.2,717.6 870.0,722.0C869.7,726.5 867.9,731.3 866.3,734.1C864.7,737.0 862.1,736.2 860.2,739.0C858.4,741.8 856.4,746.7 855.4,751.1C854.4,755.6 855.4,761.2 854.2,765.7C853.0,770.1 849.9,774.6 848.1,777.8C846.3,781.0 844.1,783.9 843.3,785.1M934.0,722.0C933.0,723.6 930.3,728.1 928.2,731.7C926.0,735.4 924.1,739.6 920.9,743.8C917.7,748.1 912.4,753.1 908.8,757.2C905.1,761.2 902.3,764.7 899.1,768.1C895.8,771.5 893.0,775.0 889.4,777.8C885.7,780.6 880.9,782.9 877.2,785.1C873.6,787.3 869.1,790.1 867.5,791.1M777.8,825.1C779.4,824.1 784.7,820.4 787.5,819.0C790.3,817.6 793.5,817.0 794.8,816.6" fill="none" stroke="#fdd685" stroke-width="2.1" stroke-linecap="round" stroke-linejoin="round"/>
<path d="M722.0,169.5C724.4,169.1 732.5,168.0 736.6,167.0C740.6,166.0 742.6,165.0 746.3,163.4C749.9,161.8 754.3,160.0 758.4,157.3C762.4,154.7 766.9,150.9 770.5,147.6C774.1,144.4 778.4,141.2 780.2,137.9C782.0,134.7 780.2,131.1 781.4,128.2C782.6,125.4 784.1,123.2 787.5,121.0C790.9,118.7 797.6,116.7 802.0,114.9C806.5,113.1 811.7,112.1 814.2,110.0C816.7,108.0 815.9,106.6 817.1,102.8C818.3,98.9 820.2,90.8 821.4,87.0C822.7,83.2 821.9,82.1 824.4,79.7C826.8,77.3 832.8,74.3 836.0,72.4C839.1,70.6 839.6,69.8 843.3,68.8C846.9,67.8 853.0,67.4 857.8,66.4C862.7,65.4 867.5,64.0 872.4,62.7C877.2,61.5 882.8,60.2 886.9,59.1C891.1,58.0 894.5,59.0 897.1,56.2C899.7,53.4 901.0,46.5 902.7,42.1C904.4,37.8 906.7,32.0 907.5,30.0M739.0,792.4C738.4,794.8 736.6,801.4 735.3,806.9C734.1,812.4 732.3,822.1 731.7,825.1" fill="none" stroke="#8f8f8f" stroke-width="1.7" stroke-linejoin="round"/>
<path d="M679.8,73.7C679.8,76.1 678.2,85.4 679.8,88.2C681.4,91.0 685.4,90.6 689.5,90.6C693.5,90.6 698.6,88.4 704.0,88.2C709.5,88.0 719.0,89.2 722.0,89.4M716.2,114.9C716.0,117.7 714.7,126.6 714.9,131.9C715.1,137.1 716.7,140.8 717.4,146.4C718.1,152.1 717.3,160.6 719.1,165.8C720.9,171.1 726.8,173.1 728.1,178.0C729.4,182.8 726.9,189.7 726.9,194.9C726.9,200.2 728.3,205.0 728.1,209.5C727.9,213.9 726.7,221.0 725.6,221.6C724.6,222.2 724.3,212.6 722.0,213.1C719.7,213.6 715.2,220.7 712.0,224.5C708.8,228.3 705.9,232.4 702.9,235.8C699.9,239.2 695.9,241.5 693.8,244.9C691.8,248.3 691.2,252.5 690.4,256.2C689.7,260.0 688.7,264.2 689.3,267.6C689.9,271.0 691.6,274.4 693.8,276.7C696.1,278.9 701.0,279.0 702.9,281.2C704.8,283.4 705.0,287.7 705.2,290.1C705.4,292.4 704.6,293.0 704.0,295.5C703.4,298.0 702.8,302.4 701.6,305.2C700.4,308.0 696.8,308.8 696.8,312.5C696.8,316.1 699.2,323.8 701.6,327.0C704.0,330.3 707.9,330.3 711.3,331.9C714.7,333.5 720.2,335.9 722.0,336.7M722.0,336.7C722.8,339.1 724.4,346.8 726.9,351.3C729.3,355.7 733.3,359.8 736.6,363.4C739.8,367.0 743.0,370.3 746.3,373.1C749.5,375.9 752.7,378.0 756.0,380.4C759.2,382.8 762.0,384.8 765.7,387.7C769.3,390.5 773.7,395.1 777.8,397.4C781.8,399.6 785.9,401.8 789.9,401.0C794.0,400.2 798.8,395.7 802.0,392.5C805.3,389.3 806.5,383.8 809.3,381.6C812.1,379.4 815.8,378.2 819.0,379.2C822.3,380.2 825.5,385.0 828.7,387.7C832.0,390.3 834.4,393.1 838.4,394.9C842.5,396.7 846.5,397.6 853.0,398.6C859.4,399.6 870.8,400.8 877.2,401.0C883.7,401.2 886.9,400.4 891.8,399.8C896.6,399.2 901.1,398.2 906.3,397.4C911.6,396.5 918.7,395.9 923.3,394.9C927.9,393.9 932.2,391.9 934.0,391.3M711.3,473.7C710.9,476.1 709.2,483.4 708.9,488.2C708.6,493.1 709.6,496.3 709.4,502.8C709.2,509.2 707.8,518.9 707.7,527.0C707.6,535.1 709.1,544.0 708.9,551.3C708.7,558.5 708.5,566.2 706.5,570.7C704.4,575.1 700.4,575.1 696.8,578.0C693.1,580.8 687.5,584.4 684.6,587.7C681.8,590.9 682.2,594.5 679.8,597.4C677.4,600.2 672.5,601.0 670.1,604.6C667.7,608.3 666.4,614.9 665.2,619.2C664.0,623.4 663.2,628.3 662.8,630.1M934.0,551.3C933.2,553.7 929.9,561.0 929.4,565.8C928.8,570.7 929.8,576.7 930.6,580.4C931.4,584.0 933.4,586.4 934.0,587.7M934.0,609.5C932.6,611.1 928.3,615.7 925.7,619.2C923.1,622.6 919.7,628.3 918.5,630.1M668.9,625.0C668.9,627.0 668.9,632.7 668.9,637.1C668.9,641.6 669.5,648.4 668.9,651.7C668.3,654.9 664.6,654.1 665.2,656.5C665.8,659.0 670.5,663.0 672.5,666.2C674.5,669.5 676.7,670.7 677.4,675.9C678.0,681.2 676.1,690.9 676.1,697.8C676.1,704.6 676.7,711.9 677.4,717.2C678.0,722.4 679.0,724.4 679.8,729.3C680.6,734.1 683.0,741.4 682.2,746.3C681.4,751.1 677.4,754.8 674.9,758.4C672.5,762.0 669.1,764.5 667.7,768.1C666.2,771.7 666.4,776.6 666.4,780.2C666.4,783.9 668.3,786.7 667.7,789.9C667.0,793.2 664.0,795.6 662.8,799.6C661.6,803.7 661.2,809.9 660.4,814.2C659.6,818.4 658.4,823.3 658.0,825.1M510.8,778.0C510.8,781.7 511.0,792.0 511.0,800.0C511.0,808.0 510.8,821.7 510.8,826.0M934.0,632.3C932.2,632.1 926.7,630.7 923.3,631.1C919.9,631.5 916.4,632.5 913.6,634.7C910.8,636.9 910.0,641.6 906.3,644.4C902.7,647.2 896.2,648.8 891.8,651.7C887.3,654.5 883.3,658.1 879.7,661.4C876.0,664.6 871.8,666.6 870.0,671.1C868.1,675.5 868.1,682.8 868.7,688.1C869.3,693.3 872.6,697.8 873.6,702.6C874.6,707.5 875.0,712.3 874.8,717.2C874.6,722.0 874.0,728.1 872.4,731.7C870.8,735.4 867.9,737.0 865.1,739.0C862.3,741.0 857.8,741.0 855.4,743.8C853.0,746.7 851.8,751.5 850.5,756.0C849.3,760.4 850.1,766.5 848.1,770.5C846.1,774.6 841.7,777.4 838.4,780.2C835.2,783.1 831.5,785.1 828.7,787.5C825.9,789.9 822.7,793.6 821.4,794.8" fill="none" stroke="#9a9a9a" stroke-width="2.8" stroke-linejoin="round"/>
<path d="M679.8,73.7C679.8,76.1 678.2,85.4 679.8,88.2C681.4,91.0 685.4,90.6 689.5,90.6C693.5,90.6 698.6,88.4 704.0,88.2C709.5,88.0 719.0,89.2 722.0,89.4M716.2,114.9C716.0,117.7 714.7,126.6 714.9,131.9C715.1,137.1 716.7,140.8 717.4,146.4C718.1,152.1 717.3,160.6 719.1,165.8C720.9,171.1 726.8,173.1 728.1,178.0C729.4,182.8 726.9,189.7 726.9,194.9C726.9,200.2 728.3,205.0 728.1,209.5C727.9,213.9 726.7,221.0 725.6,221.6C724.6,222.2 724.3,212.6 722.0,213.1C719.7,213.6 715.2,220.7 712.0,224.5C708.8,228.3 705.9,232.4 702.9,235.8C699.9,239.2 695.9,241.5 693.8,244.9C691.8,248.3 691.2,252.5 690.4,256.2C689.7,260.0 688.7,264.2 689.3,267.6C689.9,271.0 691.6,274.4 693.8,276.7C696.1,278.9 701.0,279.0 702.9,281.2C704.8,283.4 705.0,287.7 705.2,290.1C705.4,292.4 704.6,293.0 704.0,295.5C703.4,298.0 702.8,302.4 701.6,305.2C700.4,308.0 696.8,308.8 696.8,312.5C696.8,316.1 699.2,323.8 701.6,327.0C704.0,330.3 707.9,330.3 711.3,331.9C714.7,333.5 720.2,335.9 722.0,336.7M722.0,336.7C722.8,339.1 724.4,346.8 726.9,351.3C729.3,355.7 733.3,359.8 736.6,363.4C739.8,367.0 743.0,370.3 746.3,373.1C749.5,375.9 752.7,378.0 756.0,380.4C759.2,382.8 762.0,384.8 765.7,387.7C769.3,390.5 773.7,395.1 777.8,397.4C781.8,399.6 785.9,401.8 789.9,401.0C794.0,400.2 798.8,395.7 802.0,392.5C805.3,389.3 806.5,383.8 809.3,381.6C812.1,379.4 815.8,378.2 819.0,379.2C822.3,380.2 825.5,385.0 828.7,387.7C832.0,390.3 834.4,393.1 838.4,394.9C842.5,396.7 846.5,397.6 853.0,398.6C859.4,399.6 870.8,400.8 877.2,401.0C883.7,401.2 886.9,400.4 891.8,399.8C896.6,399.2 901.1,398.2 906.3,397.4C911.6,396.5 918.7,395.9 923.3,394.9C927.9,393.9 932.2,391.9 934.0,391.3M711.3,473.7C710.9,476.1 709.2,483.4 708.9,488.2C708.6,493.1 709.6,496.3 709.4,502.8C709.2,509.2 707.8,518.9 707.7,527.0C707.6,535.1 709.1,544.0 708.9,551.3C708.7,558.5 708.5,566.2 706.5,570.7C704.4,575.1 700.4,575.1 696.8,578.0C693.1,580.8 687.5,584.4 684.6,587.7C681.8,590.9 682.2,594.5 679.8,597.4C677.4,600.2 672.5,601.0 670.1,604.6C667.7,608.3 666.4,614.9 665.2,619.2C664.0,623.4 663.2,628.3 662.8,630.1M934.0,551.3C933.2,553.7 929.9,561.0 929.4,565.8C928.8,570.7 929.8,576.7 930.6,580.4C931.4,584.0 933.4,586.4 934.0,587.7M934.0,609.5C932.6,611.1 928.3,615.7 925.7,619.2C923.1,622.6 919.7,628.3 918.5,630.1M668.9,625.0C668.9,627.0 668.9,632.7 668.9,637.1C668.9,641.6 669.5,648.4 668.9,651.7C668.3,654.9 664.6,654.1 665.2,656.5C665.8,659.0 670.5,663.0 672.5,666.2C674.5,669.5 676.7,670.7 677.4,675.9C678.0,681.2 676.1,690.9 676.1,697.8C676.1,704.6 676.7,711.9 677.4,717.2C678.0,722.4 679.0,724.4 679.8,729.3C680.6,734.1 683.0,741.4 682.2,746.3C681.4,751.1 677.4,754.8 674.9,758.4C672.5,762.0 669.1,764.5 667.7,768.1C666.2,771.7 666.4,776.6 666.4,780.2C666.4,783.9 668.3,786.7 667.7,789.9C667.0,793.2 664.0,795.6 662.8,799.6C661.6,803.7 661.2,809.9 660.4,814.2C659.6,818.4 658.4,823.3 658.0,825.1M510.8,778.0C510.8,781.7 511.0,792.0 511.0,800.0C511.0,808.0 510.8,821.7 510.8,826.0M934.0,632.3C932.2,632.1 926.7,630.7 923.3,631.1C919.9,631.5 916.4,632.5 913.6,634.7C910.8,636.9 910.0,641.6 906.3,644.4C902.7,647.2 896.2,648.8 891.8,651.7C887.3,654.5 883.3,658.1 879.7,661.4C876.0,664.6 871.8,666.6 870.0,671.1C868.1,675.5 868.1,682.8 868.7,688.1C869.3,693.3 872.6,697.8 873.6,702.6C874.6,707.5 875.0,712.3 874.8,717.2C874.6,722.0 874.0,728.1 872.4,731.7C870.8,735.4 867.9,737.0 865.1,739.0C862.3,741.0 857.8,741.0 855.4,743.8C853.0,746.7 851.8,751.5 850.5,756.0C849.3,760.4 850.1,766.5 848.1,770.5C846.1,774.6 841.7,777.4 838.4,780.2C835.2,783.1 831.5,785.1 828.7,787.5C825.9,789.9 822.7,793.6 821.4,794.8" fill="none" stroke="#fff" stroke-width=".9" stroke-dasharray="6 6" stroke-linejoin="round"/>
<path d="M510.0,78.5C512.0,79.1 517.3,80.7 522.1,82.1C527.0,83.6 533.4,85.6 539.1,87.0C544.8,88.4 550.8,90.4 556.1,90.6C561.3,90.9 566.2,89.1 570.6,88.7C575.1,88.3 576.7,88.1 582.8,88.2C588.8,88.3 601.4,88.4 607.0,89.4C612.7,90.4 614.5,92.5 616.7,94.3C618.9,96.1 619.8,99.3 620.4,100.3M674.9,305.7C674.1,306.6 671.3,309.3 670.1,311.3C668.9,313.2 668.1,314.7 667.7,317.3C667.2,319.9 666.9,324.9 667.7,327.0C668.4,329.1 671.3,329.4 672.0,329.9M683.4,363.4C684.6,364.5 687.7,368.5 690.7,370.2C693.7,371.9 699.8,373.0 701.6,373.6M758.4,401.0C761.0,402.8 768.1,409.5 774.1,411.9C780.2,414.3 787.3,414.5 794.8,415.5C802.2,416.6 811.7,417.0 819.0,418.0C826.3,419.0 833.6,420.0 838.4,421.6C843.3,423.2 845.7,426.3 848.1,427.7C850.5,429.1 852.2,429.7 853.0,430.1M722.0,449.4C721.4,450.2 720.8,451.0 718.6,454.3C716.4,457.5 711.3,464.8 708.9,468.8C706.5,472.8 704.4,473.7 704.0,478.5C703.6,483.4 705.9,492.3 706.5,497.9C707.1,503.6 707.9,507.6 707.7,512.5C707.5,517.3 705.2,522.2 705.2,527.0C705.2,531.9 707.5,536.7 707.7,541.6C707.9,546.4 707.1,550.5 706.5,556.1C705.9,561.8 704.6,569.9 704.0,575.5C703.4,581.2 703.6,585.2 702.8,590.1C702.0,594.9 700.6,599.8 699.2,604.6C697.8,609.5 695.3,614.9 694.3,619.2C693.3,623.4 693.3,628.3 693.1,630.1M853.0,430.0C855.4,431.6 863.7,436.1 867.5,439.7C871.4,443.3 872.8,449.0 876.0,451.8C879.2,454.7 884.7,453.0 886.9,456.7C889.2,460.3 888.1,468.8 889.4,473.7C890.6,478.5 891.8,481.3 894.2,485.8C896.6,490.2 901.5,495.5 903.9,500.3C906.3,505.2 907.5,510.4 908.8,514.9C910.0,519.3 911.2,523.0 911.2,527.0C911.2,531.1 908.8,535.1 908.8,539.1C908.8,543.2 910.0,547.6 911.2,551.3C912.4,554.9 914.0,559.0 916.0,561.0C918.1,563.0 920.3,563.8 923.3,563.4C926.3,563.0 932.2,559.4 934.0,558.5M510.0,722.0C512.4,722.6 518.9,724.0 524.6,725.7C530.2,727.3 537.1,729.5 544.0,731.7C550.8,733.9 559.3,737.0 565.8,739.0C572.3,741.0 576.7,742.2 582.8,743.8C588.8,745.5 596.9,746.7 602.2,748.7C607.4,750.7 610.7,754.6 614.3,756.0C617.9,757.4 620.0,756.4 624.0,757.2C628.0,758.0 633.3,759.4 638.5,760.8C643.8,762.2 649.5,764.5 655.5,765.7C661.6,766.9 670.5,767.3 674.9,768.1C679.4,768.9 678.2,770.3 682.2,770.5C686.2,770.7 694.3,769.1 699.2,769.3C704.0,769.5 707.5,770.5 711.3,771.7C715.1,773.0 720.2,775.8 722.0,776.6M694.3,625.0C694.1,627.0 693.9,633.1 693.1,637.1C692.3,641.2 690.9,645.2 689.5,649.3C688.1,653.3 685.2,657.3 684.6,661.4C684.0,665.4 685.2,669.5 685.8,673.5C686.4,677.6 688.1,682.0 688.3,685.6C688.5,689.3 688.1,691.7 687.1,695.3C686.0,699.0 682.0,703.8 682.2,707.5C682.4,711.1 687.1,713.1 688.3,717.2C689.5,721.2 689.5,726.1 689.5,731.7C689.5,737.4 688.3,745.5 688.3,751.1C688.3,756.8 690.5,762.4 689.5,765.7C688.5,768.9 683.6,766.5 682.2,770.5C680.8,774.6 681.8,783.5 681.0,789.9C680.2,796.4 678.4,803.5 677.4,809.3C676.3,815.2 675.3,822.5 674.9,825.1M722.0,776.6C724.0,777.6 730.1,781.0 734.1,782.7C738.2,784.3 742.2,786.1 746.3,786.3C750.3,786.5 753.9,784.9 758.4,783.9C762.8,782.9 768.5,779.8 772.9,780.2C777.4,780.6 780.6,784.7 785.1,786.3C789.5,787.9 795.6,789.9 799.6,789.9C803.7,789.9 805.3,786.3 809.3,786.3C813.4,786.3 818.2,789.9 823.9,789.9C829.5,789.9 837.6,786.3 843.3,786.3C848.9,786.3 853.8,788.9 857.8,789.9C861.9,790.9 861.9,790.7 867.5,792.4C873.2,794.0 884.5,797.4 891.8,799.6C899.1,801.9 905.9,803.7 911.2,805.7C916.4,807.7 919.5,809.5 923.3,811.8C927.1,814.0 932.2,817.8 934.0,819.0" fill="none" stroke="#56d296" stroke-width="3.9" stroke-linecap="round" stroke-linejoin="round"/>
<path d="M716.5,197.2C716.3,199.5 717.3,206.7 715.4,210.9C713.5,215.0 708.8,218.8 705.2,222.2C701.6,225.6 696.9,228.3 693.8,231.3C690.8,234.3 688.7,237.0 687.0,240.4C685.3,243.8 684.2,247.5 683.6,251.7C683.1,255.9 683.2,260.8 683.6,265.3C684.0,269.9 685.3,274.8 685.9,278.9C686.5,283.1 686.8,288.2 687.0,290.1M688.3,290.6C687.3,292.3 684.4,297.8 682.2,300.3C680.0,302.8 676.1,304.8 674.9,305.7M672.0,329.9C672.5,331.9 674.0,338.0 674.9,341.6C675.8,345.1 675.9,347.6 677.4,351.3C678.8,354.9 682.4,361.4 683.4,363.4M701.6,373.6C703.2,373.9 707.9,374.7 711.3,375.5C714.7,376.3 720.2,378.0 722.0,378.4M722.0,378.4C723.6,379.0 727.7,379.6 731.7,381.6C735.7,383.5 741.8,386.8 746.3,390.1C750.7,393.3 756.4,399.2 758.4,401.0M722.0,449.4C722.7,448.5 724.0,447.7 726.0,444.0C728.0,440.3 732.5,431.8 734.3,427.0C736.1,422.2 734.8,418.8 736.7,415.3C738.7,411.8 742.9,409.6 746.0,406.0C749.1,402.4 753.2,397.2 755.5,394.0C757.8,390.8 759.2,388.2 760.0,387.0" fill="none" stroke="#6fd9a8" stroke-width="3" stroke-dasharray="5 2.5" stroke-linejoin="round"/>
<g font-family="Liberation Sans,Noto Sans CJK JP,sans-serif">
<path d="M655,341L662.5,332.5M662.5,341L655,332.5M653.2,334.3L656.8,330.7M660.7,330.7L664.3,334.3" stroke="#8a8a8a" stroke-width="1.1" fill="none"/>
<path d="M675.6,135.9 Q682.7,133.9 689.8,135.9 Q692.3,137.0 692.0,140.5 Q690.3,148.0 684.9,152.3 Q682.7,153.7 680.5,152.3 Q675.1,148.0 673.4,140.5 Q673.1,137.0 675.6,135.9 Z" fill="#838383"/><text x="682.7" y="145.7" font-size="9.0" fill="#fff" text-anchor="middle" font-weight="bold" textLength="12.9" lengthAdjust="spacingAndGlyphs">178</text>
<path d="M597.1,204.4 Q604.2,202.4 611.3,204.4 Q613.8,205.5 613.5,209.0 Q611.8,216.5 606.4,220.8 Q604.2,222.2 602.0,220.8 Q596.6,216.5 594.9,209.0 Q594.6,205.5 597.1,204.4 Z" fill="#838383"/><text x="604.2" y="214.2" font-size="9.0" fill="#fff" text-anchor="middle" font-weight="bold" textLength="12.9" lengthAdjust="spacingAndGlyphs">482</text>
<path d="M888.3,131.5 Q895.4,129.5 902.5,131.5 Q905.0,132.6 904.7,136.1 Q903.0,143.6 897.6,147.9 Q895.4,149.3 893.2,147.9 Q887.8,143.6 886.1,136.1 Q885.8,132.6 888.3,131.5 Z" fill="#838383"/><text x="895.4" y="141.3" font-size="9.0" fill="#fff" text-anchor="middle" font-weight="bold" textLength="12.9" lengthAdjust="spacingAndGlyphs">312</text>
<path d="M695.2,293.2 Q702.3,291.2 709.4,293.2 Q711.9,294.3 711.6,297.8 Q709.9,305.3 704.5,309.6 Q702.3,311.0 700.1,309.6 Q694.7,305.3 693.0,297.8 Q692.7,294.3 695.2,293.2 Z" fill="#838383"/><text x="702.3" y="303.0" font-size="9.0" fill="#fff" text-anchor="middle" font-weight="bold" textLength="12.9" lengthAdjust="spacingAndGlyphs">312</text>
<path d="M558.0,315.3 Q565.1,313.3 572.2,315.3 Q574.7,316.4 574.4,319.9 Q572.7,327.4 567.3,331.7 Q565.1,333.1 562.9,331.7 Q557.5,327.4 555.8,319.9 Q555.5,316.4 558.0,315.3 Z" fill="#838383"/><text x="565.1" y="325.1" font-size="9.0" fill="#fff" text-anchor="middle" font-weight="bold" textLength="4.3" lengthAdjust="spacingAndGlyphs">9</text>
<path d="M863.3,265.6 Q870.4,263.6 877.5,265.6 Q880.0,266.7 879.7,270.2 Q878.0,277.7 872.6,282.0 Q870.4,283.4 868.2,282.0 Q862.8,277.7 861.1,270.2 Q860.8,266.7 863.3,265.6 Z" fill="#838383"/><text x="870.4" y="275.4" font-size="9.0" fill="#fff" text-anchor="middle" font-weight="bold" textLength="12.9" lengthAdjust="spacingAndGlyphs">426</text>
<path d="M798.1,384.4 Q805.2,382.4 812.3,384.4 Q814.8,385.5 814.5,389.0 Q812.8,396.5 807.4,400.8 Q805.2,402.2 803.0,400.8 Q797.6,396.5 795.9,389.0 Q795.6,385.5 798.1,384.4 Z" fill="#838383"/><text x="805.2" y="394.2" font-size="9.0" fill="#fff" text-anchor="middle" font-weight="bold" textLength="4.3" lengthAdjust="spacingAndGlyphs">9</text>
<path d="M590.7,506.8 Q597.8,504.8 604.9,506.8 Q607.4,507.9 607.1,511.4 Q605.4,518.9 600.0,523.2 Q597.8,524.6 595.6,523.2 Q590.2,518.9 588.5,511.4 Q588.2,507.9 590.7,506.8 Z" fill="#838383"/><text x="597.8" y="516.6" font-size="9.0" fill="#fff" text-anchor="middle" font-weight="bold" textLength="12.9" lengthAdjust="spacingAndGlyphs">429</text>
<path d="M757.8,506.6 Q764.9,504.6 772.0,506.6 Q774.5,507.7 774.2,511.2 Q772.5,518.7 767.1,523.0 Q764.9,524.4 762.7,523.0 Q757.3,518.7 755.6,511.2 Q755.3,507.7 757.8,506.6 Z" fill="#838383"/><text x="764.9" y="516.4" font-size="9.0" fill="#fff" text-anchor="middle" font-weight="bold" textLength="12.9" lengthAdjust="spacingAndGlyphs">429</text>
<path d="M807.6,569.6 Q814.7,567.6 821.8,569.6 Q824.3,570.7 824.0,574.2 Q822.3,581.7 816.9,586.0 Q814.7,587.4 812.5,586.0 Q807.1,581.7 805.4,574.2 Q805.1,570.7 807.6,569.6 Z" fill="#838383"/><text x="814.7" y="579.4" font-size="9.0" fill="#fff" text-anchor="middle" font-weight="bold" textLength="12.9" lengthAdjust="spacingAndGlyphs">427</text>
<path d="M681.7,674.4 Q688.8,672.4 695.9,674.4 Q698.4,675.5 698.1,679.0 Q696.4,686.5 691.0,690.8 Q688.8,692.2 686.6,690.8 Q681.2,686.5 679.5,679.0 Q679.2,675.5 681.7,674.4 Z" fill="#838383"/><text x="688.8" y="684.2" font-size="9.0" fill="#fff" text-anchor="middle" font-weight="bold" textLength="12.9" lengthAdjust="spacingAndGlyphs">312</text>
<path d="M901.2,750.1 Q908.3,748.1 915.4,750.1 Q917.9,751.2 917.6,754.7 Q915.9,762.2 910.5,766.5 Q908.3,767.9 906.1,766.5 Q900.7,762.2 899.0,754.7 Q898.7,751.2 901.2,750.1 Z" fill="#838383"/><text x="908.3" y="759.9" font-size="9.0" fill="#fff" text-anchor="middle" font-weight="bold" textLength="12.9" lengthAdjust="spacingAndGlyphs">372</text>
<path d="M828.9,814.3 Q836.0,812.3 843.1,814.3 Q845.6,815.4 845.3,818.9 Q843.6,826.4 838.2,830.7 Q836.0,832.1 833.8,830.7 Q828.4,826.4 826.7,818.9 Q826.4,815.4 828.9,814.3 Z" fill="#838383"/><text x="836.0" y="824.1" font-size="9.0" fill="#fff" text-anchor="middle" font-weight="bold" textLength="12.9" lengthAdjust="spacingAndGlyphs">175</text>
<path d="M843.9,215.2 Q851.0,213.2 858.1,215.2 Q860.6,216.3 860.3,219.8 Q858.6,227.3 853.2,231.6 Q851.0,233.0 848.8,231.6 Q843.4,227.3 841.7,219.8 Q841.4,216.3 843.9,215.2 Z" fill="#838383"/><text x="851.0" y="225.0" font-size="9.0" fill="#fff" text-anchor="middle" font-weight="bold" textLength="12.9" lengthAdjust="spacingAndGlyphs">482</text>
<path d="M926.4,267.3 Q933.5,265.3 940.6,267.3 Q943.1,268.4 942.8,271.9 Q941.1,279.4 935.7,283.7 Q933.5,285.1 931.3,283.7 Q925.9,279.4 924.2,271.9 Q923.9,268.4 926.4,267.3 Z" fill="#838383"/><text x="933.5" y="277.1" font-size="9.0" fill="#fff" text-anchor="middle" font-weight="bold" textLength="12.9" lengthAdjust="spacingAndGlyphs">178</text>
<rect x="585.4" y="81.2" width="21.5" height="13.0" rx="2" fill="#838383"/><text x="596.1" y="91.1" font-size="9.5" fill="#fff" text-anchor="middle" font-weight="bold" textLength="9.8" lengthAdjust="spacingAndGlyphs">E9</text>
<rect x="682.9" y="366.1" width="21.5" height="13.0" rx="2" fill="#838383"/><text x="693.6" y="376.0" font-size="9.5" fill="#fff" text-anchor="middle" font-weight="bold" textLength="14.7" lengthAdjust="spacingAndGlyphs">E72</text>
<rect x="892.2" y="489.5" width="21.5" height="13.0" rx="2" fill="#838383"/><text x="902.9" y="499.4" font-size="9.5" fill="#fff" text-anchor="middle" font-weight="bold" textLength="14.7" lengthAdjust="spacingAndGlyphs">E72</text>
<rect x="543.4" y="729.3" width="21.5" height="13.0" rx="2" fill="#838383"/><text x="554.1" y="739.2" font-size="9.5" fill="#fff" text-anchor="middle" font-weight="bold" textLength="14.7" lengthAdjust="spacingAndGlyphs">E2A</text>
<rect x="678.0" y="641.8" width="21.5" height="13.0" rx="2" fill="#838383"/><text x="688.8" y="651.7" font-size="9.5" fill="#fff" text-anchor="middle" font-weight="bold" textLength="14.7" lengthAdjust="spacingAndGlyphs">E95</text>
<rect x="719.7" y="433.2" width="21.5" height="13.0" rx="2" fill="#838383"/><text x="730.5" y="443.1" font-size="9.5" fill="#fff" text-anchor="middle" font-weight="bold" textLength="14.7" lengthAdjust="spacingAndGlyphs">E95</text>
<text x="578.6" y="121.0" fill="#939393" font-size="10" transform="rotate(35 578.6 121.0)">矢</text>
<text x="564.6" y="146.4" fill="#939393" font-size="10" transform="rotate(35 564.6 146.4)">田</text>
<text x="541.5" y="173.1" fill="#939393" font-size="10" transform="rotate(35 541.5 173.1)">川</text>
<text x="699.2" y="179.2" fill="#939393" font-size="11.5">豊岡</text>
<circle cx="729.3" cy="176.0" r="3.2" fill="#fff" stroke="#8c8c8c" stroke-width="1"/><circle cx="729.3" cy="176.0" r="1.4" fill="none" stroke="#8c8c8c" stroke-width=".7"/>
<text x="700.4" y="111.3" fill="#939393" font-size="9.5">• 565</text>
<circle cx="573.5" cy="88.2" r="2.6" fill="#fff" stroke="#8c8c8c" stroke-width="1"/><circle cx="573.5" cy="88.2" r="1.2" fill="none" stroke="#8c8c8c" stroke-width=".7"/>
<text x="742.0" y="41.0" fill="#939393" font-size="10.5" font-style="italic" transform="rotate(8 742.0 41.0)">山</text>
<text x="741.0" y="53.5" fill="#939393" font-size="10.5" font-style="italic" transform="rotate(8 741.0 53.5)">川</text>
<text x="687.5" y="38.0" fill="#939393" font-size="11" font-style="italic">猫崎</text>
<text x="778.3" y="154.9" fill="#939393" font-size="9.5" transform="rotate(-40 778.3 154.9)">京</text>
<text x="792.3" y="144.0" fill="#939393" font-size="9.5" transform="rotate(-40 792.3 144.0)">都</text>
<text x="805.7" y="131.9" fill="#939393" font-size="9.5" transform="rotate(-45 805.7 131.9)">丹</text>
<text x="817.8" y="121.0" fill="#939393" font-size="9.5" transform="rotate(-50 817.8 121.0)">後</text>
<text x="828.7" y="106.4" fill="#939393" font-size="9.5" transform="rotate(-50 828.7 106.4)">鉄</text>
<text x="840.8" y="94.3" fill="#939393" font-size="9.5" transform="rotate(-40 840.8 94.3)">道</text>
<text x="854.2" y="82.1" fill="#939393" font-size="9.5" transform="rotate(-30 854.2 82.1)">宮</text>
<text x="870.0" y="74.9" fill="#939393" font-size="9.5" transform="rotate(-20 870.0 74.9)">豊</text>
<text x="885.7" y="70.0" fill="#939393" font-size="9.5" transform="rotate(-15 885.7 70.0)">線</text>
<text x="884.0" y="106.4" fill="#939393" font-size="11">京</text>
<text x="906.8" y="174.3" fill="#939393" font-size="9.5">• 661</text>
<circle cx="928.2" cy="96.7" r="3.2" fill="#fff" stroke="#8c8c8c" stroke-width="1"/><circle cx="928.2" cy="96.7" r="1.4" fill="none" stroke="#8c8c8c" stroke-width=".7"/>
<text x="579.1" y="252.3" fill="#939393" font-size="9.5">• 1074</text>
<text x="569.4" y="300.3" fill="#939393" font-size="11" font-style="italic">妙見山</text>
<text x="584.0" y="312.5" fill="#939393" font-size="9.5">• 1139</text>
<text x="655.5" y="319.7" fill="#939393" font-size="11">養父</text>
<circle cx="687.8" cy="316.1" r="3.2" fill="#fff" stroke="#8c8c8c" stroke-width="1"/><circle cx="687.8" cy="316.1" r="1.4" fill="none" stroke="#8c8c8c" stroke-width=".7"/>
<text x="792.8" y="291.8" fill="#939393" font-size="11" font-style="italic">東床尾山</text>
<text x="805.7" y="302.0" fill="#939393" font-size="9.5">• 839</text>
<text x="763.7" y="378.4" fill="#939393" font-size="11">朝来</text>
<text x="844.5" y="414.8" fill="#939393" font-size="10.5">山</text>
<text x="871.2" y="415.5" fill="#939393" font-size="10.5">陰</text>
<text x="897.1" y="414.8" fill="#939393" font-size="10.5">本</text>
<text x="922.8" y="412.4" fill="#939393" font-size="10.5">線</text>
<circle cx="756.0" cy="380.9" r="2.6" fill="#fff" stroke="#8c8c8c" stroke-width="1"/><circle cx="756.0" cy="380.9" r="1.2" fill="none" stroke="#8c8c8c" stroke-width=".7"/>
<text x="636.6" y="518.5" fill="#939393" font-size="11" font-style="italic">段ヶ峰</text>
<text x="651.9" y="531.9" fill="#939393" font-size="9.5">• 1103</text>
<text x="593.7" y="591.8" fill="#939393" font-size="9.5">• 1077</text>
<text x="673.7" y="575.5" fill="#939393" font-size="10" transform="rotate(30 673.7 575.5)">播</text>
<text x="656.7" y="594.9" fill="#939393" font-size="10" transform="rotate(30 656.7 594.9)">但</text>
<text x="649.5" y="616.8" fill="#939393" font-size="10" transform="rotate(30 649.5 616.8)">線</text>
<text x="805.7" y="451.1" fill="#939393" font-size="9.5">• 962</text>
<text x="876.5" y="540.4" fill="#939393" font-size="11">丹波</text>
<circle cx="906.3" cy="542.8" r="3.2" fill="#fff" stroke="#8c8c8c" stroke-width="1"/><circle cx="906.3" cy="542.8" r="1.4" fill="none" stroke="#8c8c8c" stroke-width=".7"/>
<text x="853.7" y="603.4" fill="#7d7d7d" font-size="24">庫</text>
<text x="717.1" y="603.4" fill="#7d7d7d" font-size="24">兵</text>
<text x="901.0" y="616.3" fill="#939393" font-size="9.5">• 548</text>
<text x="925.3" y="627.7" fill="#939393" font-size="10">福</text>
<text x="514.9" y="719.6" fill="#939393" font-size="11.5">宍粟</text>
<circle cx="510.5" cy="716.0" r="3.2" fill="#fff" stroke="#8c8c8c" stroke-width="1"/><circle cx="510.5" cy="716.0" r="1.4" fill="none" stroke="#8c8c8c" stroke-width=".7"/>
<text x="633.2" y="660.2" fill="#939393" font-size="11.5">神河</text>
<circle cx="664.0" cy="655.8" r="2.6" fill="#fff" stroke="#8c8c8c" stroke-width="1"/><circle cx="664.0" cy="655.8" r="1.2" fill="none" stroke="#8c8c8c" stroke-width=".7"/>
<text x="690.7" y="734.6" fill="#939393" font-size="11.5">市川</text>
<circle cx="682.7" cy="731.0" r="2.6" fill="#fff" stroke="#8c8c8c" stroke-width="1"/><circle cx="682.7" cy="731.0" r="1.2" fill="none" stroke="#8c8c8c" stroke-width=".7"/>
<text x="688.3" y="774.2" fill="#939393" font-size="11.5">福崎</text>
<circle cx="681.0" cy="770.0" r="2.6" fill="#fff" stroke="#8c8c8c" stroke-width="1"/><circle cx="681.0" cy="770.0" r="1.2" fill="none" stroke="#8c8c8c" stroke-width=".7"/>
<text x="513.6" y="816.6" fill="#939393" font-size="10" transform="rotate(30 513.6 816.6)">線</text>
<text x="739.5" y="659.0" fill="#939393" font-size="9.5">• 939</text>
<text x="821.0" y="673.5" fill="#939393" font-size="11.5">多可</text>
<circle cx="813.7" cy="669.9" r="3.2" fill="#fff" stroke="#8c8c8c" stroke-width="1"/><circle cx="813.7" cy="669.9" r="1.4" fill="none" stroke="#8c8c8c" stroke-width=".7"/>
<text x="829.2" y="740.7" fill="#939393" font-size="11.5">西脇</text>
<circle cx="860.7" cy="737.1" r="3.2" fill="#fff" stroke="#8c8c8c" stroke-width="1"/><circle cx="860.7" cy="737.1" r="1.4" fill="none" stroke="#8c8c8c" stroke-width=".7"/>
<text x="743.3" y="770.5" fill="#939393" font-size="10.5">加</text>
<text x="742.6" y="782.7" fill="#939393" font-size="10.5">西</text>
<circle cx="747.5" cy="792.4" r="3.2" fill="#fff" stroke="#8c8c8c" stroke-width="1"/><circle cx="747.5" cy="792.4" r="1.4" fill="none" stroke="#8c8c8c" stroke-width=".7"/>
<text x="827.5" y="764.5" fill="#939393" font-size="10" transform="rotate(35 827.5 764.5)">加</text>
<text x="809.8" y="786.3" fill="#939393" font-size="10" transform="rotate(35 809.8 786.3)">古</text>
<text x="926.9" y="629.9" fill="#939393" font-size="9">福</text>
</g>
<path d="M773.5,219.5H875.5V303.5H773.5ZM671.5,303.5H773.5V386.5H671.5ZM773.5,303.5H875.5V386.5H773.5ZM569.5,386.5H671.5V469.5H569.5ZM773.5,386.5H875.5V469.5H773.5ZM569.5,469.5H671.5V553.5H569.5ZM671.5,469.5H773.5V553.5H671.5ZM773.5,469.5H875.5V553.5H773.5ZM569.5,553.5H671.5V636.5H569.5ZM671.5,553.5H773.5V636.5H671.5Z" fill="#40a4f5" fill-opacity=".58"/>
<rect x="671.5" y="386.5" width="102.0" height="83.0" fill="#ff9a1f" fill-opacity=".85"/>
<path d="M773.5,219.5H875.5M671.5,303.5H773.5M773.5,303.5H875.5M569.5,386.5H671.5M671.5,386.5H773.5M773.5,386.5H875.5M569.5,469.5H671.5M671.5,469.5H773.5M773.5,469.5H875.5M569.5,553.5H671.5M671.5,553.5H773.5M773.5,553.5H875.5M569.5,636.5H671.5M671.5,636.5H773.5M773.5,219.5V303.5M875.5,219.5V303.5M671.5,303.5V386.5M773.5,303.5V386.5M875.5,303.5V386.5M569.5,386.5V469.5M671.5,386.5V469.5M773.5,386.5V469.5M875.5,386.5V469.5M569.5,469.5V553.5M671.5,469.5V553.5M773.5,469.5V553.5M875.5,469.5V553.5M569.5,553.5V636.5M671.5,553.5V636.5M773.5,553.5V636.5" fill="none" stroke="#1f8ff0" stroke-width="1" stroke-opacity=".8" shape-rendering="crispEdges"/>
<rect x="671.5" y="386.5" width="102.0" height="83.0" fill="none" stroke="#d9822b" stroke-opacity=".75" stroke-width="1" shape-rendering="crispEdges"/>
<!--MAPEND-->
</svg>
</div>

<div class="abs" style="left:519px;top:39px;width:217px;height:34px;border-radius:6px;overflow:hidden;background:#fff;box-shadow:0 1px 2px rgba(0,0,0,.2);font-size:14px;font-weight:bold;color:#0f172a;line-height:34px;white-space:nowrap">
  <div class="abs" style="left:0;top:0;width:108.5px;height:34px;background:#00bcbc"></div>
  <span class="abs" id="m2" style="left:16px;top:0;transform:scaleX(0.9859)">2次メッシュ</span>
  <span class="abs" id="m3" style="left:124px;top:0;transform:scaleX(0.9795)">3次メッシュ</span>
</div>
<div class="abs" style="left:896px;top:40px;width:29px;height:87px;border-radius:4px;background:#fff;box-shadow:0 0 0 2px rgba(0,0,0,.1)">
  <div class="abs" style="left:0;top:29px;width:29px;height:1px;background:#ddd"></div>
  <div class="abs" style="left:0;top:58px;width:29px;height:1px;background:#ddd"></div>
  <svg class="abs" style="left:0;top:0" width="29" height="87" viewBox="0 0 29 87"><path d="M8.8 14.5h11.4M14.5 8.8v11.4M8.8 43.5h11.4" stroke="#333" stroke-width="2.4" fill="none"/><path d="M14.5 64l4.1 8.6h-8.2z" fill="#333"/><path d="M14.5 82l4.1-8.3h-8.2z" fill="#ccc"/></svg>
</div>
<div class="abs" style="left:769px;top:792px;width:156px;height:24px;border-radius:12px;background:#fff;font-size:12px;line-height:24px;color:#1f2430;white-space:nowrap"><span class="abs" id="attr" style="left:9px;top:0;transform:scaleX(0.9822)">国土地理院 | MapLibre</span>
<div class="abs" style="left:132px;top:0;width:24px;height:24px;border-radius:12px;background:rgba(0,0,0,.05)"></div><svg class="abs" style="left:135.8px;top:3.8px" width="16" height="16" viewBox="0 0 16 16"><circle cx="8" cy="8" r="7.2" fill="#000"/><circle cx="8" cy="4.7" r="1.25" fill="#fff"/><rect x="6.9" y="6.9" width="2.2" height="5.2" fill="#fff"/><rect x="6" y="6.9" width="2" height="1.1" fill="#fff"/><rect x="5.9" y="11.2" width="4.2" height="1.1" fill="#fff"/></svg></div>
</body>
</html>
